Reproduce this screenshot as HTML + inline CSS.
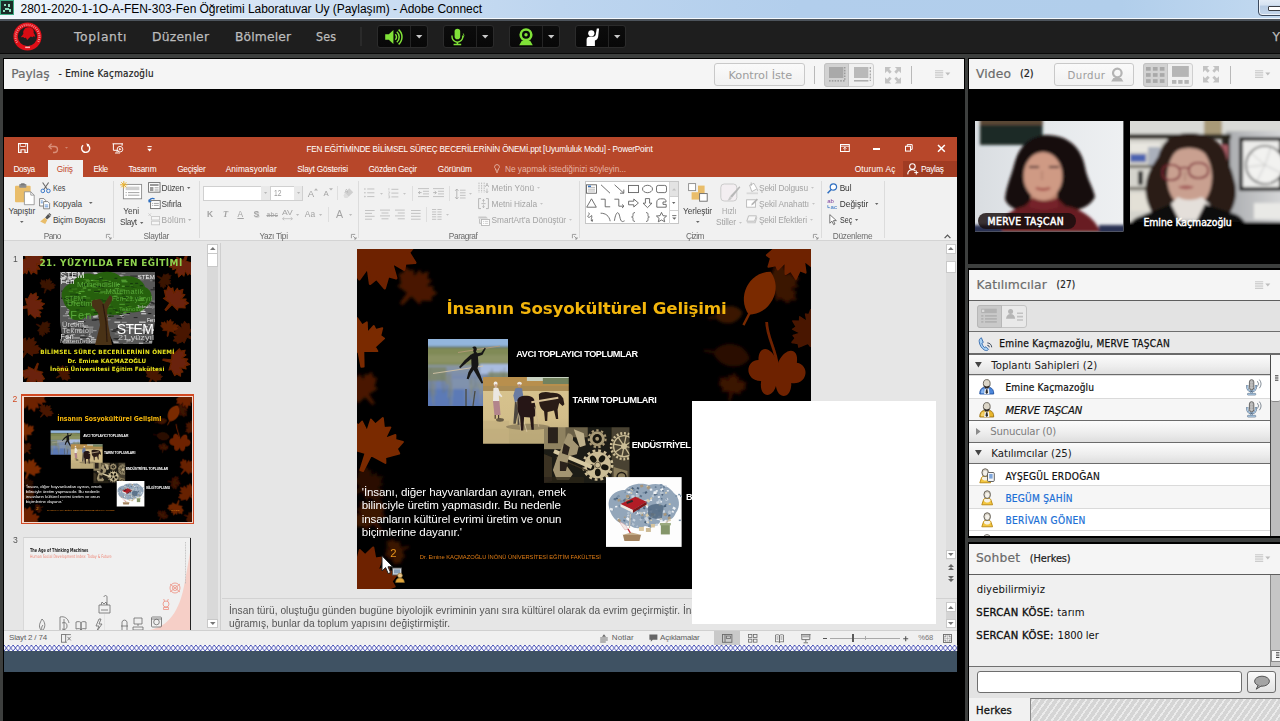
<!DOCTYPE html>
<html lang="tr">
<head>
<meta charset="utf-8">
<title>Adobe Connect</title>
<style>
*{box-sizing:border-box;margin:0;padding:0}
html,body{width:1280px;height:721px;overflow:hidden;background:#3d3f3e}
#root{position:relative;width:1280px;height:721px;overflow:hidden;background:#3d3f3e;font-family:"Liberation Sans","DejaVu Sans",sans-serif}
.a{position:absolute;display:block}
.t{position:absolute;white-space:pre;font-kerning:normal}
svg{overflow:visible}
</style>
</head>
<body>
<div id="root">
<div class="a " style="left:0.00px;top:0.00px;width:1280.00px;height:19.00px;background:linear-gradient(90deg,#f1f6fc 0,#e2ecf8 120px,#cfe0f3 330px,#bdd5ef 560px,#b2ceec 800px,#b1ceeb 1120px,#c2d9f0 1280px)"></div>
<div class="a " style="left:0.00px;top:18.00px;width:1280.00px;height:1.00px;background:#f4f8fc"></div>
<div class="a " style="left:0.00px;top:19.00px;width:1280.00px;height:2.00px;background:#4d545c"></div>
<div class="a " style="left:0.00px;top:0.00px;width:14.00px;height:15.00px;background:#1b2b27;border:1px solid #3fae86"></div>
<svg class="a" style="left:2.00px;top:2.00px;" width="10.00" height="11.00" viewBox="0 0 10.00 11.00"><path d="M2 2h2v2h-2zM6 2h2v3h-2zM3 6h4v2h-4zM1 8h2v2h-2zM7 7h2v3h-2z" fill="#8fe0c0"/></svg>
<div class="t" style='left:20.50px;top:-0.40px;font-family:"Liberation Sans",sans-serif;font-size:12px;line-height:18px;color:#000;letter-spacing:-0.035px;'>2801-2020-1-1O-A-FEN-303-Fen Öğretimi Laboratuvar Uy (Paylaşım) - Adobe Connect</div>
<div class="a " style="left:1258.00px;top:-4.00px;width:42.00px;height:19.50px;border:1px solid #3c4a5e;border-radius:4px;background:linear-gradient(#eaf1f9 0,#d5e2f1 45%,#b7cbe3 50%,#c4d6ea 100%);box-shadow:inset 0 0 0 1px rgba(255,255,255,.7)"></div>
<div class="a " style="left:1268.00px;top:6.00px;width:14.00px;height:5.00px;background:#fff;border:1px solid #3b3f46;border-radius:1px"></div>
<div class="a " style="left:0.00px;top:21.00px;width:1280.00px;height:31.50px;background:#1e1e1e"></div>
<div class="a " style="left:0.00px;top:52.50px;width:1280.00px;height:1.50px;background:#0a0a0a"></div>
<div class="a " style="left:0.00px;top:54.00px;width:1280.00px;height:667.00px;background:#3d3f3e"></div>
<svg class="a" style="left:12.00px;top:21.00px;" width="31.00" height="31.00" viewBox="0 0 31.00 31.00"><circle cx="15.5" cy="15.5" r="11.9" fill="none" stroke="#e00f18" stroke-width="4.4"/><path d="M5.100 21.500A11.900 11.900 0 1 1 25.900 21.500" fill="none" stroke="#f7b4b4" stroke-width="2.200" stroke-dasharray=".9 1.150" opacity=".8"/><path d="M15 6.5c2-.8 4.300-.2 5.3 1.300 1.200.9 1.700 2.500 1.300 4 .800 1.300 1.500 2.600 1.800 4l-2-.5-.9.900-1.700-.6-1.900 1.600-1.700 1.800-1.300-2.300-1.800.3-.7-1.100-2.600.3c.900-1.300 2-2.200 2.600-3.400-.5-1.600-.2-3.200.9-4.300.5-1.200 1.500-1.900 2.700-2z" fill="#d80c14"/><rect x="13.200" y="25.600" width="4.800" height="1.500" fill="#f8c8c8" opacity=".9"/></svg>
<div class="t" style='left:74.00px;top:28.00px;font-family:"DejaVu Sans","Liberation Sans",sans-serif;font-size:12.3px;line-height:18px;color:#bcbcbc;letter-spacing:0.681px;-webkit-text-stroke:.25px #bcbcbc;'>Toplantı</div>
<div class="t" style='left:152.00px;top:28.00px;font-family:"DejaVu Sans","Liberation Sans",sans-serif;font-size:12.3px;line-height:18px;color:#bcbcbc;letter-spacing:0.268px;-webkit-text-stroke:.25px #bcbcbc;'>Düzenler</div>
<div class="t" style='left:235.00px;top:28.00px;font-family:"DejaVu Sans","Liberation Sans",sans-serif;font-size:12.3px;line-height:18px;color:#bcbcbc;letter-spacing:0.147px;-webkit-text-stroke:.25px #bcbcbc;'>Bölmeler</div>
<div class="t" style='left:316.00px;top:28.00px;font-family:"DejaVu Sans Condensed","DejaVu Sans",sans-serif;font-size:12.3px;line-height:18px;color:#bcbcbc;letter-spacing:0.195px;-webkit-text-stroke:.25px #bcbcbc;'>Ses</div>
<div class="t" style='left:1272.50px;top:28.00px;font-family:"DejaVu Sans","Liberation Sans",sans-serif;font-size:12.3px;line-height:18px;color:#bcbcbc;letter-spacing:0.984px;-webkit-text-stroke:.25px #bcbcbc;'>Y</div>
<div class="a " style="left:360.00px;top:27.00px;width:2.00px;height:19.00px;background:#2a2a2a"></div>
<div class="a " style="left:377.00px;top:25.00px;width:51.00px;height:23.00px;background:linear-gradient(#0c0c0c,#080808);border:1px solid #2b2b2b;border-radius:3px"></div>
<div class="a " style="left:410.00px;top:26.00px;width:1.00px;height:21.00px;background:#242424"></div>
<svg class="a" style="left:416.10px;top:35.00px;" width="6.40" height="4.00" viewBox="0 0 6.40 4.00"><path d="M0 0h6.4l-3.200 3.600z" fill="#c9c9c9"/></svg>
<svg class="a" style="left:384.00px;top:28.00px;" width="20.00" height="18.00" viewBox="0 0 20.00 18.00"><path d="M1.200 6.200h3.600l4.600-4.300v14.200l-4.600-4.300h-3.600z" fill="#80e238"/><path d="M11.300 6.300a3.600 3.600 0 0 1 0 5.400M12.800 3.800a6.800 6.800 0 0 1 0 10.400M14.600 1.600a9.800 9.800 0 0 1 0 14.800" fill="none" stroke="#80e238" stroke-width="1.500"/></svg>
<div class="a " style="left:443.00px;top:25.00px;width:51.00px;height:23.00px;background:linear-gradient(#0c0c0c,#080808);border:1px solid #2b2b2b;border-radius:3px"></div>
<div class="a " style="left:476.00px;top:26.00px;width:1.00px;height:21.00px;background:#242424"></div>
<svg class="a" style="left:482.10px;top:35.00px;" width="6.40" height="4.00" viewBox="0 0 6.40 4.00"><path d="M0 0h6.4l-3.200 3.600z" fill="#c9c9c9"/></svg>
<svg class="a" style="left:449.00px;top:28.00px;" width="18.00" height="18.00" viewBox="0 0 18.00 18.00"><rect x="5.600" y=".8" width="5.600" height="10.400" rx="2.800" fill="#80e238"/><path d="M3 7.500v1.300a5.400 5.400 0 0 0 10.800 0v-1.300" fill="none" stroke="#80e238" stroke-width="1.400"/><path d="M8.400 14v2.200M4.600 16.600h7.600" stroke="#80e238" stroke-width="1.500" fill="none"/><path d="M14.300 5.500a4 4 0 0 1 0 4" stroke="#80e238" stroke-width="1" fill="none" opacity=".8"/></svg>
<div class="a " style="left:509.00px;top:25.00px;width:51.00px;height:23.00px;background:linear-gradient(#0c0c0c,#080808);border:1px solid #2b2b2b;border-radius:3px"></div>
<div class="a " style="left:542.00px;top:26.00px;width:1.00px;height:21.00px;background:#242424"></div>
<svg class="a" style="left:548.10px;top:35.00px;" width="6.40" height="4.00" viewBox="0 0 6.40 4.00"><path d="M0 0h6.4l-3.200 3.600z" fill="#c9c9c9"/></svg>
<svg class="a" style="left:517.00px;top:28.00px;" width="18.00" height="18.00" viewBox="0 0 18.00 18.00"><circle cx="9" cy="6.800" r="5.300" fill="none" stroke="#80e238" stroke-width="2.600"/><circle cx="9" cy="6.800" r="1.700" fill="#80e238"/><path d="M4.800 12.800h8.400l2.600 4.400h-13.600z" fill="#80e238"/></svg>
<div class="a " style="left:575.00px;top:25.00px;width:51.00px;height:23.00px;background:linear-gradient(#0c0c0c,#080808);border:1px solid #2b2b2b;border-radius:3px"></div>
<div class="a " style="left:608.00px;top:26.00px;width:1.00px;height:21.00px;background:#242424"></div>
<svg class="a" style="left:614.10px;top:35.00px;" width="6.40" height="4.00" viewBox="0 0 6.40 4.00"><path d="M0 0h6.4l-3.200 3.600z" fill="#c9c9c9"/></svg>
<svg class="a" style="left:583.00px;top:27.00px;" width="20.00" height="20.00" viewBox="0 0 20.00 20.00"><circle cx="8.300" cy="6.300" r="3.100" fill="#fff"/><path d="M3.600 19v-6.300c0-1.800 1.200-2.900 2.900-2.900h3.600c1.300 0 2.300-.7 2.600-2l1.100-6.200h2.300l-.9 7.800c-.3 2.300-1.600 3.600-3.300 4v5.600z" fill="#fff"/></svg>
<div class="a " style="left:3.00px;top:58.00px;width:962.00px;height:663.00px;background:#000"></div>
<div class="a " style="left:4.00px;top:59.00px;width:960.00px;height:30.00px;background:#f5f5f5"></div>
<div class="t" style='left:11.30px;top:64.50px;font-family:"DejaVu Sans","Liberation Sans",sans-serif;font-size:12.3px;line-height:18px;color:#6b6b6b;letter-spacing:-0.129px;-webkit-text-stroke:.2px #6b6b6b;'>Paylaş</div>
<div class="t" style='left:58.60px;top:65.80px;font-family:"DejaVu Sans Condensed","DejaVu Sans",sans-serif;font-size:9.8px;line-height:15px;color:#222;letter-spacing:0.301px;-webkit-text-stroke:.2px #222;'>- Emine Kaçmazoğlu</div>
<div class="a " style="left:714.00px;top:63.40px;width:91.00px;height:22.20px;border:1px solid #c9c9c9;border-radius:3px;background:linear-gradient(#fafafa,#f1f1f1)"></div>
<div class="t" style='left:728.50px;top:66.80px;font-family:"DejaVu Sans","Liberation Sans",sans-serif;font-size:11.3px;line-height:17px;color:#9d9d9d;letter-spacing:-0.026px;'>Kontrol İste</div>
<div class="a " style="left:814.00px;top:65.50px;width:1.20px;height:18.00px;background:#b9b9b9"></div>
<div class="a " style="left:824.40px;top:63.40px;width:49.60px;height:23.20px;border:1px solid #cfcfcf;border-radius:3px;background:#f0f0f0"></div>
<div class="a " style="left:824.40px;top:63.40px;width:24.90px;height:23.20px;border:1px solid #c2c2c2;border-radius:3px 0 0 3px;background:#d2d2d2"></div>
<svg class="a" style="left:828.00px;top:66.00px;" width="18.00" height="18.00" viewBox="0 0 18.00 18.00"><rect x="1" y="1" width="14.400" height="11" fill="#a9a9a9"/><path d="M1 14.800h16M16.800 1v14" stroke="#8e8e8e" stroke-width="1.200" stroke-dasharray="1.600 1.200" fill="none"/></svg>
<svg class="a" style="left:853.00px;top:66.00px;" width="19.00" height="18.00" viewBox="0 0 19.00 18.00"><rect x="1" y="1" width="14.400" height="11" fill="#b9b9b9"/><path d="M1 14.800h14.400" stroke="#a6a6a6" stroke-width="1.400"/><path d="M17.300 1v14" stroke="#a6a6a6" stroke-width="1.300" stroke-dasharray="2 1.200"/></svg>
<svg class="a" style="left:885.00px;top:66.50px;" width="16.00" height="16.40" viewBox="0 0 16.00 16.40"><path d="M0 0h6.200l-2.100 2.100 2.600 2.600-2 2-2.600-2.600-2.100 2.100z" fill="#c3c3c3"/><g transform="translate(16 0) scale(-1 1)"><path d="M0 0h6.200l-2.100 2.100 2.600 2.600-2 2-2.600-2.600-2.100 2.100z" fill="#c3c3c3"/></g><g transform="translate(0 16.400) scale(1 -1)"><path d="M0 0h6.200l-2.100 2.100 2.600 2.600-2 2-2.600-2.600-2.100 2.100z" fill="#c3c3c3"/></g><g transform="translate(16 16.400) scale(-1 -1)"><path d="M0 0h6.200l-2.100 2.100 2.600 2.600-2 2-2.600-2.600-2.100 2.100z" fill="#c3c3c3"/></g></svg>
<div class="a " style="left:911.00px;top:65.50px;width:1.20px;height:18.00px;background:#b9b9b9"></div>
<svg class="a" style="left:934.80px;top:69.60px;" width="16.00" height="8.00" viewBox="0 0 16.00 8.00"><path d="M0 .7h8.200M0 2.400h8.200M0 4.100h8.200M0 5.800h8.200M0 7.500h8.200" stroke="#c2c2c2" stroke-width=".8"/><path d="M10.300 2.600h5l-2.500 2.900z" fill="#bdbdbd"/></svg>
<div class="a " style="left:968.00px;top:58.00px;width:313.00px;height:206.20px;background:#000"></div>
<div class="a " style="left:969.00px;top:59.00px;width:311.00px;height:30.00px;background:#f5f5f5"></div>
<div class="t" style='left:976.00px;top:64.50px;font-family:"DejaVu Sans","Liberation Sans",sans-serif;font-size:12.3px;line-height:18px;color:#6b6b6b;letter-spacing:0.137px;-webkit-text-stroke:.2px #6b6b6b;'>Video</div>
<div class="t" style='left:1020.00px;top:65.80px;font-family:"DejaVu Sans","Liberation Sans",sans-serif;font-size:9.8px;line-height:15px;color:#222;letter-spacing:-0.195px;-webkit-text-stroke:.2px #222;'>(2)</div>
<div class="a " style="left:1054.00px;top:63.40px;width:80.00px;height:22.20px;border:1px solid #c9c9c9;border-radius:3px;background:linear-gradient(#fafafa,#f1f1f1)"></div>
<div class="t" style='left:1067.50px;top:66.80px;font-family:"DejaVu Sans Condensed","DejaVu Sans",sans-serif;font-size:11.3px;line-height:17px;color:#9d9d9d;letter-spacing:0.434px;'>Durdur</div>
<svg class="a" style="left:1110.00px;top:67.00px;" width="15.00" height="16.00" viewBox="0 0 15.00 16.00"><circle cx="7.300" cy="6" r="4.300" fill="none" stroke="#b4b4b4" stroke-width="2.200"/><path d="M3.400 11h7.800l2.200 3.600h-12.200z" fill="#b4b4b4"/></svg>
<div class="a " style="left:1143.30px;top:63.40px;width:49.30px;height:23.20px;border:1px solid #cfcfcf;border-radius:3px;background:#f0f0f0"></div>
<div class="a " style="left:1143.30px;top:63.40px;width:24.50px;height:23.20px;border:1px solid #c2c2c2;border-radius:3px 0 0 3px;background:#d2d2d2"></div>
<svg class="a" style="left:1146.00px;top:67.00px;" width="20.00" height="17.00" viewBox="0 0 20.00 17.00"><rect x="0.0" y="0.0" width="4.700" height="3.700" fill="#a9a9a9"/><rect x="6.9" y="0.0" width="4.700" height="3.700" fill="#a9a9a9"/><rect x="13.8" y="0.0" width="4.700" height="3.700" fill="#a9a9a9"/><rect x="0.0" y="6.1" width="4.700" height="3.700" fill="#a9a9a9"/><rect x="6.9" y="6.1" width="4.700" height="3.700" fill="#a9a9a9"/><rect x="13.8" y="6.1" width="4.700" height="3.700" fill="#a9a9a9"/><rect x="0.0" y="12.2" width="4.700" height="3.700" fill="#a9a9a9"/><rect x="6.9" y="12.2" width="4.700" height="3.700" fill="#a9a9a9"/><rect x="13.8" y="12.2" width="4.700" height="3.700" fill="#a9a9a9"/></svg>
<svg class="a" style="left:1172.00px;top:66.00px;" width="18.00" height="19.00" viewBox="0 0 18.00 19.00"><rect x="0" y="0" width="16.800" height="10.900" fill="#b5b5b5"/><rect x="0" y="14" width="4.400" height="3.800" fill="#b5b5b5"/><rect x="6.200" y="14" width="4.400" height="3.800" fill="#b5b5b5"/><rect x="12.400" y="14" width="4.400" height="3.800" fill="#b5b5b5"/></svg>
<svg class="a" style="left:1203.00px;top:66.30px;" width="16.00" height="16.40" viewBox="0 0 16.00 16.40"><path d="M0 0h6.200l-2.100 2.100 2.600 2.600-2 2-2.600-2.600-2.100 2.100z" fill="#c3c3c3"/><g transform="translate(16 0) scale(-1 1)"><path d="M0 0h6.200l-2.100 2.100 2.600 2.600-2 2-2.600-2.600-2.100 2.100z" fill="#c3c3c3"/></g><g transform="translate(0 16.400) scale(1 -1)"><path d="M0 0h6.200l-2.100 2.100 2.600 2.600-2 2-2.600-2.600-2.100 2.100z" fill="#c3c3c3"/></g><g transform="translate(16 16.400) scale(-1 -1)"><path d="M0 0h6.200l-2.100 2.100 2.600 2.600-2 2-2.600-2.600-2.100 2.100z" fill="#c3c3c3"/></g></svg>
<div class="a " style="left:1230.00px;top:65.50px;width:1.20px;height:18.00px;background:#b9b9b9"></div>
<svg class="a" style="left:1254.70px;top:69.60px;" width="16.00" height="8.00" viewBox="0 0 16.00 8.00"><path d="M0 .7h8.200M0 2.400h8.200M0 4.100h8.200M0 5.800h8.200M0 7.500h8.200" stroke="#c2c2c2" stroke-width=".8"/><path d="M10.300 2.600h5l-2.500 2.900z" fill="#bdbdbd"/></svg>
<div class="a " style="left:968.00px;top:268.30px;width:313.00px;height:269.90px;background:#000"></div>
<div class="a " style="left:969.00px;top:270.00px;width:311.00px;height:30.00px;background:#f5f5f5"></div>
<div class="a " style="left:969.00px;top:300.00px;width:311.00px;height:1.00px;background:#5e5e5e"></div>
<div class="t" style='left:976.50px;top:275.60px;font-family:"DejaVu Sans","Liberation Sans",sans-serif;font-size:12.3px;line-height:18px;color:#6b6b6b;letter-spacing:0.152px;-webkit-text-stroke:.2px #6b6b6b;'>Katılımcılar</div>
<div class="t" style='left:1056.50px;top:276.90px;font-family:"DejaVu Sans Condensed","DejaVu Sans",sans-serif;font-size:9.8px;line-height:15px;color:#222;letter-spacing:0.235px;-webkit-text-stroke:.2px #222;'>(27)</div>
<svg class="a" style="left:1254.70px;top:280.60px;" width="16.00" height="8.00" viewBox="0 0 16.00 8.00"><path d="M0 .7h8.200M0 2.400h8.200M0 4.100h8.200M0 5.800h8.200M0 7.500h8.200" stroke="#c2c2c2" stroke-width=".8"/><path d="M10.300 2.600h5l-2.500 2.900z" fill="#bdbdbd"/></svg>
<div class="a " style="left:969.00px;top:301.00px;width:311.00px;height:30.00px;background:#e3e3e3"></div>
<div class="a " style="left:977.30px;top:304.50px;width:49.50px;height:23.10px;border:1px solid #c4c4c4;border-radius:3px;background:#e9e9e9"></div>
<div class="a " style="left:977.30px;top:304.50px;width:24.50px;height:23.10px;border:1px solid #b7b7b7;border-radius:3px 0 0 3px;background:#c9c9c9"></div>
<svg class="a" style="left:980.00px;top:308.00px;" width="20.00" height="17.00" viewBox="0 0 20.00 17.00"><rect x="1.200" y=".7" width="15.600" height="4.400" fill="#b2b2b2"/><rect x="2" y="1.700" width="2.300" height="2.300" fill="#d9d9d9"/><path d="M1.200 7.800h2.200M5 7.800h11.800M1.200 10.800h2.200M5 10.800h11.800M1.200 13.800h2.200M5 13.800h11.800" stroke="#b2b2b2" stroke-width="1.700"/></svg>
<svg class="a" style="left:1004.00px;top:308.00px;" width="20.00" height="17.00" viewBox="0 0 20.00 17.00"><circle cx="6.600" cy="3.600" r="2.500" fill="#b5b5b5"/><path d="M2 10.800c.3-3.300 2-4.800 4.600-4.800s4.300 1.500 4.600 4.800z" fill="#b5b5b5"/><path d="M13 5.200h6M13 8.600h6M13 12h6" stroke="#c2c2c2" stroke-width="1.600"/></svg>
<div class="a " style="left:969.00px;top:331.00px;width:311.00px;height:1.00px;background:#6e6e6e"></div>
<div class="a " style="left:969.00px;top:332.00px;width:311.00px;height:21.30px;background:#e9e9e9"></div>
<svg class="a" style="left:977.50px;top:336.50px;" width="16.00" height="14.50" viewBox="0 0 16.00 14.50"><path d="M3.400 .8c-1.600.6-2.400 1.900-2.200 3.700.4 3.700 2.300 6.800 5.300 8.600 1.500.8 3 .6 4-.700l-2.500-2.600-1.500.8c-1.300-1.100-2.200-2.500-2.700-4.200l1.500-1z" fill="#a9d1f2" stroke="#3168ad" stroke-width=".9" stroke-linejoin="round"/><path d="M9.300 8.300a2 2 0 0 1 2 2M9.300 5.900a4.400 4.400 0 0 1 4.400 4.400" fill="none" stroke="#3d4a5c" stroke-width="1"/></svg>
<div class="t" style='left:999.30px;top:336.30px;font-family:"DejaVu Sans Condensed","DejaVu Sans",sans-serif;font-size:10.1px;line-height:15px;color:#111;letter-spacing:0.273px;-webkit-text-stroke:.25px #111;'>Emine Kaçmazoğlu, MERVE TAŞCAN</div>
<div class="a " style="left:969.00px;top:353.00px;width:311.00px;height:2.00px;background:#6a6a6a"></div>
<div class="a " style="left:969.00px;top:354.50px;width:300.50px;height:21.00px;background:linear-gradient(#fcfcfc 0,#ededed 55%,#dcdcdc 100%)"></div>
<div class="a " style="left:969.00px;top:374.40px;width:300.50px;height:1.10px;background:#6b6b6b"></div>
<svg class="a" style="left:975.30px;top:362.10px;" width="7.00" height="5.60" viewBox="0 0 7.00 5.60"><path d="M0 0h6.800l-3.400 5.400z" fill="#444"/></svg>
<div class="t" style='left:991.30px;top:356.70px;font-family:"DejaVu Sans Condensed","DejaVu Sans",sans-serif;font-size:11.3px;line-height:17px;color:#1a1a1a;letter-spacing:0.067px;'>Toplantı Sahipleri (2)</div>
<div class="a " style="left:969.00px;top:375.50px;width:300.50px;height:23.10px;background:#fff"></div>
<div class="a " style="left:969.00px;top:397.60px;width:300.50px;height:1.00px;background:#dadada"></div>
<svg class="a" style="left:979.20px;top:379.45px;" width="15.50" height="15.70" viewBox="0 0 15.50 15.70"><path d="M.8 15c-.2-3.600 1.400-6 4-6.600l2.950 2.200 2.950-2.200c2.600.6 4.200 3 4 6.600z" fill="#4b86da" stroke="#1f4f9e" stroke-width=".9" stroke-linejoin="round"/><path d="M2 14.200c0-2.400.8-4 2.400-4.600l.6 4.600z" fill="#9cc3f2" opacity=".8"/><path d="M5.600 9.200l2.150 1.700 2.150-1.700.5 5.800h-5.300z" fill="#f2f2f2"/><path d="M7 10.400h1.500l.5 3.400-1.250 1.200-1.250-1.200z" fill="#2b2b2b"/><ellipse cx="7.750" cy="4.700" rx="3.400" ry="4.100" fill="#dcd6c8" stroke="#615c54" stroke-width=".9"/><path d="M4.900 5.800c.5 1.200 1.600 1.600 2.850 1.600s2.350-.4 2.850-1.600c0 2.400-1.200 3.800-2.850 3.800s-2.850-1.400-2.850-3.800z" fill="#2b2724"/></svg>
<div class="t" style='left:1005.40px;top:380.45px;font-family:"DejaVu Sans Condensed","DejaVu Sans",sans-serif;font-size:10.1px;line-height:15px;color:#111;letter-spacing:0.143px;-webkit-text-stroke:.2px #111;'>Emine Kaçmazoğlu</div>
<svg class="a" style="left:1246.40px;top:378.65px;" width="17.00" height="16.50" viewBox="0 0 17.00 16.50"><path d="M1.300 6v2a4.300 4.300 0 0 0 8.600 0v-2" fill="none" stroke="#56697f" stroke-width="2.100"/><path d="M1.300 6.300v1.700a4.300 4.300 0 0 0 8.600 0v-1.700" fill="none" stroke="#b4d3ef" stroke-width="1.100"/><rect x="3.400" y=".7" width="4.400" height="10" rx="2.200" fill="#c4c4c4" stroke="#4a4a4a" stroke-width=".8"/><path d="M4.800 2.400v6.800M6.400 2.400v6.800" stroke="#8a8a8a" stroke-width=".6" stroke-dasharray=".8 .8"/><rect x="4.800" y="12.600" width="1.600" height="1.900" fill="#b4d3ef" stroke="#56697f" stroke-width=".5"/><rect x="1.500" y="14.300" width="8.200" height="1.800" rx=".5" fill="#b4d3ef" stroke="#56697f" stroke-width=".6"/><path d="M11.400 2.200a4 4 0 0 1 0 5.400M13.400 .6a7 7 0 0 1 0 8.600" stroke="#66727f" stroke-width=".8" fill="none"/></svg>
<div class="a " style="left:969.00px;top:398.60px;width:300.50px;height:22.00px;background:#f6f6f6"></div>
<div class="a " style="left:969.00px;top:419.60px;width:300.50px;height:1.00px;background:#dadada"></div>
<svg class="a" style="left:979.20px;top:402.00px;" width="15.50" height="15.70" viewBox="0 0 15.50 15.70"><path d="M.8 15c-.2-3.600 1.400-6 4-6.600l2.950 2.200 2.950-2.200c2.600.6 4.200 3 4 6.600z" fill="#e8b52a" stroke="#9a6f10" stroke-width=".9" stroke-linejoin="round"/><path d="M2 14.200c0-2.400.8-4 2.400-4.600l.6 4.600z" fill="#f7dc86" opacity=".8"/><path d="M5.600 9.200l2.150 1.700 2.150-1.700.5 5.800h-5.300z" fill="#f2f2f2"/><path d="M7 10.400h1.500l.5 3.400-1.250 1.200-1.250-1.200z" fill="#2b2b2b"/><ellipse cx="7.750" cy="4.700" rx="3.400" ry="4.100" fill="#dcd6c8" stroke="#615c54" stroke-width=".9"/><path d="M4.900 5.800c.5 1.200 1.600 1.600 2.850 1.600s2.350-.4 2.850-1.600c0 2.400-1.200 3.800-2.850 3.800s-2.850-1.400-2.850-3.800z" fill="#2b2724"/></svg>
<div class="t" style='left:1005.40px;top:403.00px;font-family:"DejaVu Sans","Liberation Sans",sans-serif;font-size:10.1px;line-height:15px;color:#111;letter-spacing:-0.160px;font-style:italic;-webkit-text-stroke:.2px #111;'>MERVE TAŞCAN</div>
<svg class="a" style="left:1246.40px;top:401.20px;" width="17.00" height="16.50" viewBox="0 0 17.00 16.50"><path d="M1.300 6v2a4.300 4.300 0 0 0 8.600 0v-2" fill="none" stroke="#56697f" stroke-width="2.100"/><path d="M1.300 6.300v1.700a4.300 4.300 0 0 0 8.600 0v-1.700" fill="none" stroke="#b4d3ef" stroke-width="1.100"/><rect x="3.400" y=".7" width="4.400" height="10" rx="2.200" fill="#c4c4c4" stroke="#4a4a4a" stroke-width=".8"/><path d="M4.800 2.400v6.800M6.400 2.400v6.800" stroke="#8a8a8a" stroke-width=".6" stroke-dasharray=".8 .8"/><rect x="4.800" y="12.600" width="1.600" height="1.900" fill="#b4d3ef" stroke="#56697f" stroke-width=".5"/><rect x="1.500" y="14.300" width="8.200" height="1.800" rx=".5" fill="#b4d3ef" stroke="#56697f" stroke-width=".6"/><path d="M11.400 2.200a4 4 0 0 1 0 5.400M13.400 .6a7 7 0 0 1 0 8.600" stroke="#66727f" stroke-width=".8" fill="none"/></svg>
<div class="a " style="left:969.00px;top:419.60px;width:300.50px;height:1.00px;background:#6b6b6b"></div>
<div class="a " style="left:969.00px;top:420.60px;width:300.50px;height:22.00px;background:linear-gradient(#fcfcfc 0,#ededed 55%,#dcdcdc 100%)"></div>
<div class="a " style="left:969.00px;top:441.50px;width:300.50px;height:1.10px;background:#6b6b6b"></div>
<svg class="a" style="left:976.20px;top:427.70px;" width="4.80" height="7.20" viewBox="0 0 4.80 7.20"><path d="M0 0l4.600 3.500-4.600 3.500z" fill="#8b8b8b"/></svg>
<div class="t" style='left:990.30px;top:423.30px;font-family:"DejaVu Sans Condensed","DejaVu Sans",sans-serif;font-size:11.3px;line-height:17px;color:#7d7d7d;letter-spacing:-0.223px;'>Sunucular (0)</div>
<div class="a " style="left:969.00px;top:442.60px;width:300.50px;height:21.40px;background:linear-gradient(#fcfcfc 0,#ededed 55%,#dcdcdc 100%)"></div>
<div class="a " style="left:969.00px;top:462.90px;width:300.50px;height:1.10px;background:#6b6b6b"></div>
<svg class="a" style="left:975.30px;top:450.40px;" width="7.00" height="5.60" viewBox="0 0 7.00 5.60"><path d="M0 0h6.800l-3.400 5.400z" fill="#444"/></svg>
<div class="t" style='left:991.30px;top:445.00px;font-family:"DejaVu Sans Condensed","DejaVu Sans",sans-serif;font-size:11.3px;line-height:17px;color:#1a1a1a;letter-spacing:-0.018px;'>Katılımcılar (25)</div>
<div class="a " style="left:969.00px;top:464.00px;width:300.50px;height:22.40px;background:#fff"></div>
<div class="a " style="left:969.00px;top:485.40px;width:300.50px;height:1.00px;background:#dadada"></div>
<svg class="a" style="left:979.00px;top:467.80px;" width="12.40" height="15.30" viewBox="0 0 12.40 15.30"><path d="M.8 14.800l1.800-5.200c.5-1 1.400-1.500 2.400-1.600h2.400c1 .1 1.900.6 2.400 1.600l1.800 5.200z" fill="#f3c63f" stroke="#b8860e" stroke-width=".9" stroke-linejoin="round"/><path d="M2.800 10.600c.8 1.400 2 2 3.400 2s2.600-.6 3.400-2l-.8-1.600h-5.200z" fill="#f6f2e6"/><ellipse cx="6.200" cy="4.600" rx="3.300" ry="3.900" fill="#cfc9bc" stroke="#615c54" stroke-width=".9"/><ellipse cx="6.200" cy="5.100" rx="2.100" ry="2.500" fill="#f4f1ea"/></svg>
<div class="t" style='left:1005.40px;top:468.60px;font-family:"DejaVu Sans Condensed","DejaVu Sans",sans-serif;font-size:10.1px;line-height:15px;color:#111;letter-spacing:0.291px;-webkit-text-stroke:.2px #111;'>AYŞEGÜL ERDOĞAN</div>
<svg class="a" style="left:987.40px;top:471.60px;" width="7.80" height="10.00" viewBox="0 0 7.80 10.00"><rect x=".5" y=".5" width="6.800" height="9" rx="1.100" fill="#f4f6f8" stroke="#555" stroke-width=".9"/><rect x="2.200" y="2" width="3.400" height="4.600" fill="#7ea6dc"/></svg>
<div class="a " style="left:969.00px;top:486.40px;width:300.50px;height:22.20px;background:#f6f6f6"></div>
<div class="a " style="left:969.00px;top:507.60px;width:300.50px;height:1.00px;background:#dadada"></div>
<svg class="a" style="left:981.00px;top:490.10px;" width="12.40" height="15.30" viewBox="0 0 12.40 15.30"><path d="M.8 14.800l1.800-5.200c.5-1 1.400-1.500 2.400-1.600h2.400c1 .1 1.900.6 2.400 1.600l1.800 5.200z" fill="#f3c63f" stroke="#b8860e" stroke-width=".9" stroke-linejoin="round"/><path d="M2.800 10.600c.8 1.400 2 2 3.400 2s2.600-.6 3.400-2l-.8-1.600h-5.200z" fill="#f6f2e6"/><ellipse cx="6.200" cy="4.600" rx="3.300" ry="3.900" fill="#cfc9bc" stroke="#615c54" stroke-width=".9"/><ellipse cx="6.200" cy="5.100" rx="2.100" ry="2.500" fill="#f4f1ea"/></svg>
<div class="t" style='left:1005.40px;top:490.90px;font-family:"DejaVu Sans Condensed","DejaVu Sans",sans-serif;font-size:10.1px;line-height:15px;color:#1b6fd6;letter-spacing:0.236px;-webkit-text-stroke:.2px #1b6fd6;'>BEGÜM ŞAHİN</div>
<div class="a " style="left:969.00px;top:508.60px;width:300.50px;height:22.20px;background:#fff"></div>
<div class="a " style="left:969.00px;top:529.80px;width:300.50px;height:1.00px;background:#dadada"></div>
<svg class="a" style="left:981.00px;top:512.30px;" width="12.40" height="15.30" viewBox="0 0 12.40 15.30"><path d="M.8 14.800l1.800-5.200c.5-1 1.400-1.500 2.400-1.600h2.400c1 .1 1.900.6 2.400 1.600l1.800 5.200z" fill="#f3c63f" stroke="#b8860e" stroke-width=".9" stroke-linejoin="round"/><path d="M2.800 10.600c.8 1.400 2 2 3.400 2s2.600-.6 3.400-2l-.8-1.600h-5.200z" fill="#f6f2e6"/><ellipse cx="6.200" cy="4.600" rx="3.300" ry="3.900" fill="#cfc9bc" stroke="#615c54" stroke-width=".9"/><ellipse cx="6.200" cy="5.100" rx="2.100" ry="2.500" fill="#f4f1ea"/></svg>
<div class="t" style='left:1005.40px;top:513.10px;font-family:"DejaVu Sans Condensed","DejaVu Sans",sans-serif;font-size:10.1px;line-height:15px;color:#1b6fd6;letter-spacing:0.341px;-webkit-text-stroke:.2px #1b6fd6;'>BERİVAN GÖNEN</div>
<div class="a " style="left:969.00px;top:530.80px;width:300.50px;height:5.20px;background:#fff"></div>
<div class="a " style="left:982.00px;top:533.50px;width:10.00px;height:2.50px;overflow:hidden">
<svg class="a" style="left:0;top:0" width="10" height="8" viewBox="0 0 10 8"><ellipse cx="5" cy="4" rx="3.300" ry="3.500" fill="#dedbd6" stroke="#6e6a64" stroke-width=".9"/></svg></div>
<div class="a " style="left:1269.50px;top:354.50px;width:10.50px;height:181.50px;background:#bdbdbd;border-left:1px solid #4a4a4a"></div>
<div class="a " style="left:1270.50px;top:354.50px;width:9.50px;height:47.50px;background:#f7f7f7;border-bottom:1px solid #8a8a8a;border-radius:0 0 2px 2px"></div>
<svg class="a" style="left:1275.00px;top:374.60px;" width="3.40" height="6.40" viewBox="0 0 3.40 6.40"><path d="M0 .8h3.400M0 3h3.400M0 5.200h3.400" stroke="#333" stroke-width="1"/></svg>
<div class="a " style="left:968.00px;top:542.30px;width:313.00px;height:178.70px;background:#000"></div>
<div class="a " style="left:969.00px;top:544.00px;width:311.00px;height:30.20px;background:#f5f5f5"></div>
<div class="a " style="left:969.00px;top:574.20px;width:311.00px;height:1.00px;background:#5e5e5e"></div>
<div class="t" style='left:975.90px;top:549.40px;font-family:"DejaVu Sans","Liberation Sans",sans-serif;font-size:12.3px;line-height:18px;color:#6b6b6b;letter-spacing:0.154px;-webkit-text-stroke:.2px #6b6b6b;'>Sohbet</div>
<div class="t" style='left:1029.70px;top:550.70px;font-family:"DejaVu Sans","Liberation Sans",sans-serif;font-size:9.8px;line-height:15px;color:#222;letter-spacing:-0.076px;-webkit-text-stroke:.2px #222;'>(Herkes)</div>
<svg class="a" style="left:1254.70px;top:554.20px;" width="16.00" height="8.00" viewBox="0 0 16.00 8.00"><path d="M0 .7h8.200M0 2.400h8.200M0 4.100h8.200M0 5.800h8.200M0 7.500h8.200" stroke="#c2c2c2" stroke-width=".8"/><path d="M10.300 2.600h5l-2.500 2.900z" fill="#bdbdbd"/></svg>
<div class="a " style="left:969.00px;top:575.20px;width:300.50px;height:91.00px;background:#f0f0f0"></div>
<div class="a " style="left:1269.50px;top:575.20px;width:10.50px;height:91.00px;background:#c6c6c6;border-left:1px solid #8a8a8a"></div>
<div class="a " style="left:1270.50px;top:650.00px;width:9.50px;height:12.30px;background:#f7f7f7;border:1px solid #8a8a8a;border-right:0"></div>
<svg class="a" style="left:1275.60px;top:652.40px;" width="3.40" height="6.60" viewBox="0 0 3.40 6.60"><path d="M0 .8h3.400M0 3.100h3.400M0 5.400h3.400" stroke="#333" stroke-width="1"/></svg>
<div class="t" style='left:976.70px;top:580.80px;font-family:"DejaVu Sans Condensed","DejaVu Sans",sans-serif;font-size:11.2px;line-height:17px;color:#111;letter-spacing:0.123px;'>diyebilirmiyiz</div>
<div class="t" style='left:976.20px;top:604.10px;font-family:"DejaVu Sans Condensed","DejaVu Sans",sans-serif;font-size:11.2px;line-height:17px;color:#111;letter-spacing:0.302px;-webkit-text-stroke:.35px #111;'>SERCAN KÖSE:</div>
<div class="t" style='left:1057.30px;top:604.10px;font-family:"DejaVu Sans Condensed","DejaVu Sans",sans-serif;font-size:11.2px;line-height:17px;color:#111;letter-spacing:0.110px;'>tarım</div>
<div class="t" style='left:976.20px;top:626.90px;font-family:"DejaVu Sans Condensed","DejaVu Sans",sans-serif;font-size:11.2px;line-height:17px;color:#111;letter-spacing:0.302px;-webkit-text-stroke:.35px #111;'>SERCAN KÖSE:</div>
<div class="t" style='left:1057.60px;top:626.90px;font-family:"DejaVu Sans Condensed","DejaVu Sans",sans-serif;font-size:11.2px;line-height:17px;color:#111;letter-spacing:-0.105px;'>1800 ler</div>
<div class="a " style="left:969.00px;top:666.00px;width:311.00px;height:1.00px;background:#707070"></div>
<div class="a " style="left:969.00px;top:667.00px;width:311.00px;height:31.40px;background:#e3e3e3"></div>
<div class="a " style="left:977.30px;top:670.50px;width:265.10px;height:22.90px;background:#fff;border:1px solid #6e6e6e;border-radius:3px"></div>
<div class="a " style="left:1246.50px;top:670.50px;width:29.10px;height:22.70px;background:linear-gradient(#fbfbfb,#e2e2e2);border:1px solid #6e6e6e;border-radius:3px"></div>
<svg class="a" style="left:1252.50px;top:674.50px;" width="18.00" height="15.50" viewBox="0 0 18.00 15.50"><ellipse cx="9" cy="6.200" rx="7.400" ry="5" fill="#a4a4a4" stroke="#555" stroke-width="1"/><path d="M5.200 10.200l-2 4 5-3.200z" fill="#a4a4a4" stroke="#555" stroke-width="1" stroke-linejoin="round"/><path d="M5.500 9.800l2.600.8" stroke="#a4a4a4" stroke-width="1.600"/></svg>
<div class="a " style="left:969.00px;top:698.40px;width:311.00px;height:22.60px;background:repeating-linear-gradient(125deg,#d5d5d5 0,#d5d5d5 3.700px,#ebebeb 3.700px,#ebebeb 5.400px);border-top:1px solid #7c7c7c"></div>
<div class="a " style="left:969.00px;top:698.40px;width:62.00px;height:22.60px;background:#f1f1f1;border-right:1px solid #8a8a8a"></div>
<div class="t" style='left:976.00px;top:701.50px;font-family:"DejaVu Sans Condensed","DejaVu Sans",sans-serif;font-size:11.2px;line-height:17px;color:#111;letter-spacing:0.204px;-webkit-text-stroke:.3px #111;'>Herkes</div>
<svg class="a" style="left:974.80px;top:121.20px;" width="148.40" height="110.60" viewBox="0 0 148.400 110.600"><defs><filter id="v1" x="-10%" y="-10%" width="120%" height="120%"><feGaussianBlur stdDeviation="1.6"/></filter><filter id="v1b" x="-10%" y="-10%" width="120%" height="120%"><feGaussianBlur stdDeviation="3"/></filter><clipPath id="vc1"><rect width="148.400" height="110.600"/></clipPath><linearGradient id="wl" x1="0" x2="1" y1="0" y2="0"><stop offset="0" stop-color="#d9dde1"/><stop offset=".5" stop-color="#e6e9ec"/><stop offset="1" stop-color="#eef0f2"/></linearGradient></defs><g clip-path="url(#vc1)"><rect width="149" height="111" fill="url(#wl)"/><g filter="url(#v1)"><rect x="5" y="-3" width="62.500" height="27" fill="#1d2a28"/><rect x="5" y="-3" width="62.500" height="7" fill="#5a4636"/><path d="M72 14c-16 0-28 10-33 30-3 12-8 22-9 34 2 6 8 10 16 12h52c10-2 18-6 22-14-2-10-8-18-10-30-3-18-16-32-38-32z" fill="#17110f"/><path d="M56 62h26v24h-26z" fill="#b57e69"/><ellipse cx="68" cy="55" rx="19.500" ry="24" fill="#cf9a84"/><path d="M50 38c2-9 10-13 19-12 9 0 17 4 19 12-6-7-14-9-20-9s-13 3-18 9z" fill="#17110f"/><path d="M54 46h10M74 46h10" stroke="#3a2420" stroke-width="2.200"/><path d="M61 67c4 1.800 10 1.800 14 0" stroke="#a14a45" stroke-width="2.400" fill="none"/><path d="M67 50v9" stroke="#b98672" stroke-width="2"/><path d="M24 111c2-14 10-22 26-26 4-4 6-6 8-8 6 4 16 4 24 0 2 2 4 4 8 8 16 3 28 10 36 26z" fill="#681b21"/><path d="M56 78c8 4 18 4 26 0l2 8c-10 4-20 4-30 0z" fill="#76222a"/><rect x="-3" y="104" width="30" height="10" fill="#2a3352"/><rect x="124" y="104" width="30" height="10" fill="#2a3352"/></g></g></svg>
<div class="a " style="left:978.00px;top:213.20px;width:97.80px;height:16.00px;background:rgba(22,12,12,.82);border-radius:8px"></div>
<div class="t" style='left:987.50px;top:213.90px;font-family:"DejaVu Sans Condensed","DejaVu Sans",sans-serif;font-size:10.3px;line-height:15px;color:#fff;letter-spacing:0.404px;-webkit-text-stroke:.45px #fff;'>MERVE TAŞCAN</div>
<svg class="a" style="left:1130.00px;top:121.20px;" width="150.00" height="110.60" viewBox="0 0 150 110.600"><defs><filter id="v2" x="-10%" y="-10%" width="120%" height="120%"><feGaussianBlur stdDeviation="1.500"/></filter><clipPath id="vc2"><rect width="150" height="110.600"/></clipPath><linearGradient id="wr" x1="0" x2="1" y1="0" y2="0"><stop offset="0" stop-color="#a9abae"/><stop offset="1" stop-color="#d6d7d8"/></linearGradient></defs><g clip-path="url(#vc2)"><rect width="150" height="111" fill="#c9c9c7"/><g filter="url(#v2)"><rect x="-3" y="-3" width="156" height="16" fill="#d9dad6"/><rect x="96" y="10" width="58" height="100" fill="url(#wr)"/><rect x="-3" y="13" width="104" height="5" fill="#2d2a22"/><rect x="-3" y="18" width="40" height="84" fill="#d4d3cc"/><rect x="0" y="33" width="16" height="8" fill="#4c63b0"/><rect x="0" y="22" width="30" height="9" fill="#e8e6e0"/><rect x="18" y="26" width="12" height="18" fill="#aab0bc"/><rect x="-3" y="44" width="34" height="3" fill="#6e6a60"/><rect x="-3" y="66" width="30" height="3" fill="#6e6a60"/><rect x="8" y="50" width="5" height="14" fill="#2a2a2a"/><rect x="0" y="72" width="24" height="18" fill="#e3e0d6"/><rect x="74" y="-3" width="18" height="16" fill="#a89a78"/><rect x="92" y="16" width="8" height="58" fill="#28201c"/><rect x="88" y="24" width="10" height="18" fill="#c76a78" opacity=".8"/><rect x="111" y="18" width="40" height="50" fill="#ececea" stroke="#0a0a0a" stroke-width="3.400"/><circle cx="135" cy="44" r="19" fill="#f2f2f0" stroke="#555" stroke-width="1.600"/><path d="M135 44l-14-12M135 44l-18 2M135 44l-8 16M135 44l6-18M135 44l16 8" stroke="#bbb" stroke-width=".8"/><rect x="124" y="82" width="30" height="16" fill="#e9e9e6"/><path d="M58 12c-16 0-26 8-30 24-4 6-10 14-12 26-2 12 2 22 6 30h78c6-10 8-22 4-34-2-10-6-16-8-24-4-14-18-22-38-22z" fill="#2a1b17"/><ellipse cx="59.500" cy="56" rx="22.500" ry="32" fill="#c9a090"/><path d="M36 40c1-13 12-19 23-18 11 0 21 6 23 18-5-9-14-13-23-13s-18 4-23 13z" fill="#2a1b17"/><path d="M34 46c4-3 10-3 14 0 3 3 3 8 0 11-4 3-10 3-14 0-2-3-2-8 0-11zM61 44c4-3 11-3 15 0 3 3 3 8 0 11-4 3-11 3-15 0-3-3-3-8 0-11zM49 48c3-2 8-2 11 0" fill="none" stroke="#7a2430" stroke-width="1.700"/><path d="M48 66c5-2 11-2 16 0-4 3-12 3-16 0z" fill="#a35a58"/><path d="M55 50v10" stroke="#b48b7b" stroke-width="2"/><path d="M40 84l8-8c6 4 16 4 24 0l8 8-6 14h-28z" fill="#e4dfda"/><path d="M-3 111c2-8 6-14 14-16l30-12 10 20h14l10-20 30 10c8 3 12 10 14 18z" fill="#0c0c0e"/><rect x="-3" y="101" width="156" height="12" fill="#050506"/></g></g></svg>
<div class="a " style="left:1130.00px;top:224.50px;width:150.00px;height:7.30px;background:#000"></div>
<div class="t" style='left:1143.40px;top:213.60px;font-family:"DejaVu Sans Condensed","DejaVu Sans",sans-serif;font-size:10.4px;line-height:16px;color:#fff;letter-spacing:-0.040px;-webkit-text-stroke:.45px #fff;'>Emine Kaçmazoğlu</div>
<div class="a" id="ppt" style="left:0;top:0;width:1280px;height:721px;filter:blur(.3px)">
<div class="a " style="left:4.00px;top:137.30px;width:953.20px;height:39.70px;background:#b7472a"></div>
<svg class="a" style="left:18.00px;top:142.80px;" width="10.20" height="10.40" viewBox="0 0 10.20 10.40"><path d="M.6.600h8.900v8.900h-8.900z" fill="none" stroke="#fff" stroke-width="1.200"/><rect x="2.400" y=".8" width="5.200" height="3.200" fill="#fff"/><rect x="2.400" y="6.300" width="5.200" height="3.400" fill="#fff"/><rect x="3.600" y="7.200" width="2.800" height="2.600" fill="#b7472a"/><rect x="2.900" y="1" width="4.200" height="2.200" fill="#b7472a"/></svg>
<svg class="a" style="left:48.00px;top:143.00px;" width="11.00" height="10.00" viewBox="0 0 11.00 10.00"><path d="M1 3.500h5.500a3 3 0 0 1 0 6h-1.500" fill="none" stroke="#d98e78" stroke-width="1.300"/><path d="M3.600 .8l-2.800 2.700 2.800 2.700" fill="none" stroke="#d98e78" stroke-width="1.300"/></svg>
<svg class="a" style="left:64.50px;top:147.40px;" width="3.00" height="1.80" viewBox="0 0 3.00 1.80"><path d="M0 0h3.00l-1.50 1.80z" fill="#d08570"/></svg>
<svg class="a" style="left:79.50px;top:142.50px;" width="11.00" height="11.00" viewBox="0 0 11.00 11.00"><path d="M7.300 1.700a4 4 0 1 1-4.200.6" fill="none" stroke="#fff" stroke-width="1.400"/><path d="M6.300 .2l3 1.300-1.900 2.600z" fill="#fff"/></svg>
<svg class="a" style="left:111.50px;top:143.00px;" width="12.50" height="11.00" viewBox="0 0 12.50 11.00"><path d="M.5 .8h10.500M1.400 .8v6.500h5" fill="none" stroke="#fff" stroke-width="1"/><path d="M10.100 .8v2" stroke="#fff" stroke-width="1"/><circle cx="8" cy="6.200" r="2.800" fill="none" stroke="#fff" stroke-width=".9"/><path d="M7.200 4.800l2.300 1.400-2.300 1.400z" fill="#fff"/><path d="M5 7.300v2.300M3 10h5" stroke="#fff" stroke-width=".9"/></svg>
<svg class="a" style="left:147.00px;top:145.50px;" width="5.50" height="6.50" viewBox="0 0 5.50 6.50"><path d="M.5 .6h4.200" stroke="#fff" stroke-width="1"/><path d="M.3 2.800h4.600l-2.300 2.600z" fill="#fff"/></svg>
<div class="t" style='left:306.50px;top:142.60px;font-family:"Liberation Sans",sans-serif;font-size:8.2px;line-height:13px;color:#fff;letter-spacing:-0.179px;'>FEN EĞİTİMİNDE BİLİMSEL SÜREÇ BECERİLERİNİN ÖNEMİ.ppt [Uyumluluk Modu] - PowerPoint</div>
<svg class="a" style="left:839.50px;top:144.30px;" width="10.00" height="8.00" viewBox="0 0 10.00 8.00"><rect x=".5" y=".5" width="8.800" height="7" fill="none" stroke="#fff" stroke-width="1"/><path d="M.5 2.200h8.800" stroke="#fff" stroke-width=".9"/><path d="M4.900 6.600v-3.200M3.400 4.700l1.500-1.500 1.500 1.500" stroke="#fff" stroke-width=".9" fill="none"/></svg>
<div class="a " style="left:873.00px;top:148.40px;width:7.20px;height:1.40px;background:#fff"></div>
<svg class="a" style="left:905.00px;top:144.30px;" width="8.00" height="8.00" viewBox="0 0 8.00 8.00"><rect x=".5" y="2.300" width="5" height="4.800" fill="none" stroke="#fff" stroke-width="1"/><path d="M2.200 2.200v-1.600h5v4.800h-1.600" fill="none" stroke="#fff" stroke-width="1"/></svg>
<svg class="a" style="left:936.50px;top:143.80px;" width="9.00" height="9.00" viewBox="0 0 9.00 9.00"><path d="M1 1l6.800 6.800M7.800 1l-6.800 6.800" stroke="#fff" stroke-width="1.500"/></svg>
<div class="a " style="left:47.80px;top:160.40px;width:35.40px;height:17.10px;background:#f1f1f1"></div>
<div class="t" style='left:13.50px;top:162.80px;font-family:"Liberation Sans",sans-serif;font-size:8.3px;line-height:13px;color:#fff;letter-spacing:-0.458px;'>Dosya</div>
<div class="t" style='left:56.80px;top:162.80px;font-family:"Liberation Sans",sans-serif;font-size:8.3px;line-height:13px;color:#c2472a;letter-spacing:-0.216px;'>Giriş</div>
<div class="t" style='left:93.40px;top:162.80px;font-family:"Liberation Sans",sans-serif;font-size:8.3px;line-height:13px;color:#fff;letter-spacing:-0.447px;'>Ekle</div>
<div class="t" style='left:128.40px;top:162.80px;font-family:"Liberation Sans",sans-serif;font-size:8.3px;line-height:13px;color:#fff;letter-spacing:-0.219px;'>Tasarım</div>
<div class="t" style='left:177.20px;top:162.80px;font-family:"Liberation Sans",sans-serif;font-size:8.3px;line-height:13px;color:#fff;letter-spacing:-0.277px;'>Geçişler</div>
<div class="t" style='left:225.70px;top:162.80px;font-family:"Liberation Sans",sans-serif;font-size:8.3px;line-height:13px;color:#fff;letter-spacing:0.067px;'>Animasyonlar</div>
<div class="t" style='left:297.20px;top:162.80px;font-family:"Liberation Sans",sans-serif;font-size:8.3px;line-height:13px;color:#fff;letter-spacing:-0.192px;'>Slayt Gösterisi</div>
<div class="t" style='left:368.40px;top:162.80px;font-family:"Liberation Sans",sans-serif;font-size:8.3px;line-height:13px;color:#fff;letter-spacing:-0.235px;'>Gözden Geçir</div>
<div class="t" style='left:437.80px;top:162.80px;font-family:"Liberation Sans",sans-serif;font-size:8.3px;line-height:13px;color:#fff;letter-spacing:-0.066px;'>Görünüm</div>
<svg class="a" style="left:494.00px;top:163.50px;" width="6.00" height="9.50" viewBox="0 0 6.00 9.50"><path d="M3 .6a2.300 2.300 0 0 1 1.400 4.200v1.400h-2.800v-1.400a2.300 2.300 0 0 1 1.400-4.200z" fill="none" stroke="#eac3b6" stroke-width=".8"/><path d="M1.900 7.400h2.200M2.200 8.500h1.600" stroke="#eac3b6" stroke-width=".7"/></svg>
<div class="t" style='left:505.00px;top:162.80px;font-family:"Liberation Sans",sans-serif;font-size:8.3px;line-height:13px;color:#e6b5a5;letter-spacing:-0.017px;'>Ne yapmak istediğinizi söyleyin...</div>
<div class="t" style='left:854.70px;top:163.30px;font-family:"Liberation Sans",sans-serif;font-size:8.3px;line-height:13px;color:#fff;letter-spacing:0.187px;'>Oturum Aç</div>
<div class="a " style="left:902.50px;top:160.80px;width:54.70px;height:16.20px;background:#a03b22"></div>
<svg class="a" style="left:906.50px;top:162.80px;" width="12.00" height="12.20" viewBox="0 0 12.00 12.20"><circle cx="5.400" cy="3.600" r="2.800" fill="none" stroke="#fff" stroke-width="1.100"/><path d="M.7 11.400c.2-3 1.900-4.600 4.700-4.600 1.300 0 2.300.4 3.100 1" fill="none" stroke="#fff" stroke-width="1.100"/><path d="M9.300 7.600v4M7.300 9.600h4" stroke="#fff" stroke-width="1"/></svg>
<div class="t" style='left:921.00px;top:163.30px;font-family:"Liberation Sans",sans-serif;font-size:8.3px;line-height:13px;color:#fff;letter-spacing:-0.421px;'>Paylaş</div>
<div class="a " style="left:4.00px;top:177.00px;width:953.20px;height:63.40px;background:#f1f1f1"></div>
<div class="a " style="left:4.00px;top:240.40px;width:953.20px;height:0.80px;background:#d4d4d4"></div>
<div class="a " style="left:112.60px;top:181.00px;width:0.90px;height:57.00px;background:#dcdcdc"></div>
<div class="a " style="left:199.30px;top:181.00px;width:0.90px;height:57.00px;background:#dcdcdc"></div>
<div class="a " style="left:358.00px;top:181.00px;width:0.90px;height:57.00px;background:#dcdcdc"></div>
<div class="a " style="left:578.60px;top:181.00px;width:0.90px;height:57.00px;background:#dcdcdc"></div>
<div class="a " style="left:821.10px;top:181.00px;width:0.90px;height:57.00px;background:#dcdcdc"></div>
<div class="a " style="left:883.90px;top:181.00px;width:0.90px;height:57.00px;background:#dcdcdc"></div>
<svg class="a" style="left:13.50px;top:182.50px;" width="21.50" height="22.50" viewBox="0 0 21.50 22.50"><rect x="1" y="2.800" width="15.600" height="16.400" rx="1" fill="#e9bd6a"/><rect x="5.200" y="1" width="7.200" height="3.800" rx=".8" fill="#8d8d8d"/><rect x="6.800" y=".2" width="4" height="2" rx=".8" fill="#777"/><path d="M10.400 8.800h6.400l3.400 3.300v9.600h-9.800z" fill="#fff" stroke="#8a8a8a" stroke-width=".8"/><path d="M16.800 8.800v3.300h3.400" fill="none" stroke="#8a8a8a" stroke-width=".8"/></svg>
<div class="t" style='left:8.40px;top:205.20px;font-family:"Liberation Sans",sans-serif;font-size:8.3px;line-height:13px;color:#444;letter-spacing:-0.155px;'>Yapıştır</div>
<svg class="a" style="left:20.00px;top:220.50px;" width="3.60" height="2.00" viewBox="0 0 3.60 2.00"><path d="M0 0h3.60l-1.80 2.00z" fill="#666"/></svg>
<svg class="a" style="left:39.50px;top:181.50px;" width="11.50" height="11.50" viewBox="0 0 11.50 11.50"><path d="M2.600 .5l4.800 7M8.600 .5l-4.800 7" stroke="#6a6a6a" stroke-width="1.100"/><circle cx="2.800" cy="8.900" r="1.800" fill="none" stroke="#3a78c9" stroke-width="1"/><circle cx="8.400" cy="8.900" r="1.800" fill="none" stroke="#3a78c9" stroke-width="1"/></svg>
<div class="t" style='left:52.90px;top:181.70px;font-family:"Liberation Sans",sans-serif;font-size:8.3px;line-height:13px;color:#444;transform-origin:0 50%;transform:scaleX(0.8673);'>Kes</div>
<svg class="a" style="left:39.00px;top:198.00px;" width="12.00" height="11.50" viewBox="0 0 12.00 11.50"><path d="M.6 .6h4.200l1.800 1.800v5.600h-6z" fill="#fff" stroke="#6a6a6a" stroke-width=".8"/><path d="M4.600 3.600h4.200l1.800 1.800v5.400h-6z" fill="#fff" stroke="#6a6a6a" stroke-width=".8"/><path d="M1.800 3h2M1.800 4.800h2M5.800 7h3.400M5.800 8.800h3.400" stroke="#3a78c9" stroke-width=".8"/></svg>
<div class="t" style='left:52.90px;top:197.60px;font-family:"Liberation Sans",sans-serif;font-size:8.3px;line-height:13px;color:#444;letter-spacing:-0.131px;'>Kopyala</div>
<svg class="a" style="left:89.00px;top:202.40px;" width="3.60" height="2.00" viewBox="0 0 3.60 2.00"><path d="M0 0h3.60l-1.80 2.00z" fill="#666"/></svg>
<svg class="a" style="left:39.50px;top:212.50px;" width="12.50" height="12.50" viewBox="0 0 12.50 12.50"><path d="M8.200 1l2.400 2.400-3.600 3-1.800-1.800z" fill="#555"/><path d="M4.800 4.800l2.400 2.400-2 3.800-5-2.600z" fill="#e9bd6a"/><path d="M9 .4l2 2" stroke="#555" stroke-width="1.300"/></svg>
<div class="t" style='left:52.90px;top:213.60px;font-family:"Liberation Sans",sans-serif;font-size:8.3px;line-height:13px;color:#444;letter-spacing:-0.131px;'>Biçim Boyacısı</div>
<div class="t" style='left:43.70px;top:229.70px;font-family:"Liberation Sans",sans-serif;font-size:8.3px;line-height:13px;color:#6a6a6a;letter-spacing:-0.530px;'>Pano</div>
<svg class="a" style="left:105.70px;top:233.90px;" width="5.50" height="5.50" viewBox="0 0 5.50 5.50"><path d="M.4 4.200v-3.800h3.800" stroke="#8a8a8a" stroke-width=".8" fill="none"/><path d="M2.200 2.200l2.800 2.800M5 3v2h-2" stroke="#8a8a8a" stroke-width=".8" fill="none"/></svg>
<svg class="a" style="left:119.50px;top:181.00px;" width="23.50" height="20.00" viewBox="0 0 23.50 20.00"><rect x="3.400" y="3.400" width="18.200" height="14.400" fill="#fff" stroke="#8a8a8a" stroke-width=".9"/><rect x="5.600" y="5.600" width="13.800" height="3.600" fill="#cfcfcf"/><path d="M5.600 11.600h1.200M8 11.600h11.400M5.600 14.200h1.200M8 14.200h11.400" stroke="#9a9a9a" stroke-width=".9"/><path d="M3.800 .2v7.200M.2 3.800h7.200M1.300 1.300l5 5M6.300 1.300l-5 5" stroke="#eab22f" stroke-width="1"/></svg>
<div class="t" style='left:123.20px;top:205.20px;font-family:"Liberation Sans",sans-serif;font-size:8.3px;line-height:13px;color:#444;letter-spacing:0.047px;'>Yeni</div>
<div class="t" style='left:120.00px;top:215.50px;font-family:"Liberation Sans",sans-serif;font-size:8.3px;line-height:13px;color:#444;letter-spacing:-0.363px;'>Slayt</div>
<svg class="a" style="left:139.50px;top:221.50px;" width="3.40" height="2.00" viewBox="0 0 3.40 2.00"><path d="M0 0h3.40l-1.70 2.00z" fill="#666"/></svg>
<svg class="a" style="left:147.50px;top:181.50px;" width="13.00" height="11.50" viewBox="0 0 13.00 11.50"><rect x=".6" y=".6" width="11.400" height="9.600" fill="#fff" stroke="#6a6a6a" stroke-width=".9"/><rect x="2" y="2" width="8.600" height="2" fill="#9a9a9a"/><rect x="2" y="5" width="3.400" height="4" fill="#9a9a9a"/><path d="M6.600 5.600h4M6.600 7.200h4M6.600 8.800h4" stroke="#9a9a9a" stroke-width=".7"/></svg>
<div class="t" style='left:161.60px;top:181.70px;font-family:"Liberation Sans",sans-serif;font-size:8.3px;line-height:13px;color:#444;letter-spacing:-0.346px;'>Düzen</div>
<svg class="a" style="left:186.60px;top:186.80px;" width="3.40" height="2.00" viewBox="0 0 3.40 2.00"><path d="M0 0h3.40l-1.70 2.00z" fill="#666"/></svg>
<svg class="a" style="left:147.50px;top:197.00px;" width="13.00" height="12.50" viewBox="0 0 13.00 12.50"><rect x="2.600" y="3.600" width="9.600" height="8" fill="#fff" stroke="#6a6a6a" stroke-width=".9"/><path d="M4.200 6.400h1M6 6.400h4.800M4.200 8.400h1M6 8.400h4.800" stroke="#8a8a8a" stroke-width=".8"/><path d="M1 5.200a3.600 3.600 0 0 1 5.600-3.200" fill="none" stroke="#2f6fc0" stroke-width="1.200"/><path d="M.2 2.600l.8 3 2.800-1z" fill="#2f6fc0"/></svg>
<div class="t" style='left:161.60px;top:197.60px;font-family:"Liberation Sans",sans-serif;font-size:8.3px;line-height:13px;color:#444;letter-spacing:-0.295px;'>Sıfırla</div>
<svg class="a" style="left:148.00px;top:213.00px;" width="12.50" height="12.50" viewBox="0 0 12.50 12.50"><rect x="3.600" y="3.400" width="8" height="3.600" fill="#f6f6f6" stroke="#c4c4c4" stroke-width=".8"/><rect x="3.600" y="8.200" width="8" height="3.600" fill="#f6f6f6" stroke="#c4c4c4" stroke-width=".8"/><path d="M.4 .4l2.600 2.600M3 .4l-2.600 2.600" stroke="#c9c9c9" stroke-width=".8"/></svg>
<div class="t" style='left:161.60px;top:213.60px;font-family:"Liberation Sans",sans-serif;font-size:8.3px;line-height:13px;color:#a3a3a3;letter-spacing:0.117px;'>Bölüm</div>
<svg class="a" style="left:188.30px;top:218.80px;" width="3.40" height="2.00" viewBox="0 0 3.40 2.00"><path d="M0 0h3.40l-1.70 2.00z" fill="#b5b5b5"/></svg>
<div class="t" style='left:143.40px;top:229.70px;font-family:"Liberation Sans",sans-serif;font-size:8.3px;line-height:13px;color:#6a6a6a;letter-spacing:-0.253px;'>Slaytlar</div>
<div class="a " style="left:203.00px;top:185.50px;width:68.20px;height:15.10px;background:#fff;border:1px solid #d0d0d0"></div>
<div class="a " style="left:261.00px;top:186.30px;width:9.40px;height:13.50px;background:#e9e9e9"></div>
<svg class="a" style="left:264.20px;top:192.25px;" width="3.20" height="1.90" viewBox="0 0 3.20 1.90"><path d="M0 0h3.20l-1.60 1.90z" fill="#b9b9b9"/></svg>
<div class="a " style="left:271.20px;top:185.50px;width:32.00px;height:15.10px;background:#fff;border:1px solid #d0d0d0;border-left:0"></div>
<div class="a " style="left:294.00px;top:186.30px;width:8.40px;height:13.50px;background:#e9e9e9"></div>
<svg class="a" style="left:296.60px;top:192.25px;" width="3.20" height="1.90" viewBox="0 0 3.20 1.90"><path d="M0 0h3.20l-1.60 1.90z" fill="#b9b9b9"/></svg>
<div class="t" style='left:274.00px;top:186.70px;font-family:"Liberation Sans",sans-serif;font-size:8.3px;line-height:13px;color:#9c9c9c;transform-origin:0 50%;transform:scaleX(0.8122);'>12</div>
<div class="t" style='left:307.80px;top:186.60px;font-family:"Liberation Sans",sans-serif;font-size:9.6px;line-height:14px;color:#a3a3a3;letter-spacing:-0.006px;'>A</div>
<svg class="a" style="left:313.50px;top:188.00px;" width="4.00" height="3.00" viewBox="0 0 4.00 3.00"><path d="M0 2.600l2-2.400 2 2.400z" fill="#b3b3b3"/></svg>
<div class="t" style='left:323.50px;top:188.20px;font-family:"Liberation Sans",sans-serif;font-size:7.8px;line-height:12px;color:#a3a3a3;letter-spacing:-0.203px;'>A</div>
<svg class="a" style="left:328.50px;top:188.20px;" width="4.00" height="2.80" viewBox="0 0 4.00 2.80"><path d="M0 .2h4l-2 2.400z" fill="#b3b3b3"/></svg>
<div class="a " style="left:336.80px;top:186.00px;width:0.80px;height:14.00px;background:#dedede"></div>
<svg class="a" style="left:343.00px;top:187.00px;" width="11.00" height="12.00" viewBox="0 0 11.00 12.00"><path d="M6.200 1.200l4 4-4.600 4.600-3.800-3.800z" fill="#cfcfcf"/><path d="M1.800 6l3.800 3.800-1.200 1.200h-2.800l-1.200-2.600z" fill="#dedede"/><text x="1.400" y="5.600" font-family="Liberation Sans,sans-serif" font-size="5.600" fill="#b3b3b3">A</text></svg>
<div class="t" style='left:207.00px;top:207.90px;font-family:"Liberation Sans",sans-serif;font-size:8.4px;line-height:13px;color:#a3a3a3;letter-spacing:-0.463px;font-weight:700;'>K</div>
<div class="t" style='left:222.90px;top:207.90px;font-family:"Liberation Serif",serif;font-size:8.4px;line-height:13px;color:#a3a3a3;letter-spacing:-0.425px;font-weight:700;font-style:italic;'>T</div>
<div class="t" style='left:237.40px;top:207.90px;font-family:"Liberation Sans",sans-serif;font-size:8.4px;line-height:13px;color:#a3a3a3;letter-spacing:0.806px;text-decoration:underline;'>A</div>
<div class="t" style='left:253.40px;top:207.90px;font-family:"Liberation Sans",sans-serif;font-size:8.6px;line-height:13px;color:#a3a3a3;letter-spacing:0.066px;font-weight:700;text-shadow:.8px .8px 0 #d2d2d2;'>S</div>
<div class="t" style='left:266.50px;top:209.30px;font-family:"Liberation Sans",sans-serif;font-size:6.6px;line-height:11px;color:#a3a3a3;letter-spacing:0.280px;text-decoration:line-through;'>abc</div>
<div class="t" style='left:282.00px;top:207.40px;font-family:"Liberation Sans",sans-serif;font-size:7.6px;line-height:12px;color:#a3a3a3;transform-origin:0 50%;transform:scaleX(1.1276);'>AV</div>
<svg class="a" style="left:282.00px;top:217.00px;" width="11.00" height="3.50" viewBox="0 0 11.00 3.50"><path d="M.6 1.700h9.800M2.200 .2l-1.600 1.500 1.600 1.500M8.800 .2l1.600 1.500-1.600 1.500" stroke="#b9b9b9" stroke-width=".8" fill="none"/></svg>
<svg class="a" style="left:295.70px;top:213.85px;" width="3.20" height="1.90" viewBox="0 0 3.20 1.90"><path d="M0 0h3.20l-1.60 1.90z" fill="#bdbdbd"/></svg>
<div class="t" style='left:304.80px;top:207.90px;font-family:"Liberation Sans",sans-serif;font-size:8.4px;line-height:13px;color:#a3a3a3;letter-spacing:0.150px;'>Aa</div>
<svg class="a" style="left:318.80px;top:213.85px;" width="3.20" height="1.90" viewBox="0 0 3.20 1.90"><path d="M0 0h3.20l-1.60 1.90z" fill="#bdbdbd"/></svg>
<div class="a " style="left:328.00px;top:207.00px;width:0.80px;height:15.00px;background:#dedede"></div>
<div class="t" style='left:336.00px;top:206.20px;font-family:"Liberation Sans",sans-serif;font-size:10.6px;line-height:16px;color:#a3a3a3;letter-spacing:0.522px;'>A</div>
<svg class="a" style="left:349.40px;top:213.85px;" width="3.20" height="1.90" viewBox="0 0 3.20 1.90"><path d="M0 0h3.20l-1.60 1.90z" fill="#bdbdbd"/></svg>
<div class="t" style='left:259.40px;top:229.70px;font-family:"Liberation Sans",sans-serif;font-size:8.3px;line-height:13px;color:#6a6a6a;letter-spacing:-0.325px;'>Yazı Tipi</div>
<svg class="a" style="left:350.70px;top:233.90px;" width="5.50" height="5.50" viewBox="0 0 5.50 5.50"><path d="M.4 4.200v-3.800h3.800" stroke="#8a8a8a" stroke-width=".8" fill="none"/><path d="M2.200 2.200l2.800 2.800M5 3v2h-2" stroke="#8a8a8a" stroke-width=".8" fill="none"/></svg>
<svg class="a" style="left:364.40px;top:188.30px;" width="10.60" height="10.20" viewBox="0 0 10.60 10.20"><path d="M3.200 1h7.200M3.200 4.800h7.200M3.200 8.600h7.200" stroke="#bdbdbd" stroke-width=".9"/><circle cx=".9" cy="1" r=".8" fill="#bdbdbd"/><circle cx=".9" cy="4.800" r=".8" fill="#bdbdbd"/><circle cx=".9" cy="8.600" r=".8" fill="#bdbdbd"/></svg>
<svg class="a" style="left:379.50px;top:192.50px;" width="3.00" height="1.80" viewBox="0 0 3.00 1.80"><path d="M0 0h3.00l-1.50 1.80z" fill="#c4c4c4"/></svg>
<svg class="a" style="left:387.80px;top:188.00px;" width="10.70" height="10.80" viewBox="0 0 10.70 10.80"><path d="M3.400 1.300h7M3.400 5.100h7M3.400 8.900h7" stroke="#bdbdbd" stroke-width=".9"/><path d="M.9 0v2.400M.3 3.900h1.300v1l-1.300 1.200h1.400M.3 7.700h1.300v2.200h-1.300M.6 8.800h1" stroke="#bdbdbd" stroke-width=".6" fill="none"/></svg>
<svg class="a" style="left:403.30px;top:192.50px;" width="3.00" height="1.80" viewBox="0 0 3.00 1.80"><path d="M0 0h3.00l-1.50 1.80z" fill="#c4c4c4"/></svg>
<div class="a " style="left:411.80px;top:185.50px;width:0.80px;height:15.00px;background:#dedede"></div>
<svg class="a" style="left:417.80px;top:188.30px;" width="11.70" height="10.20" viewBox="0 0 11.70 10.20"><path d="M0 .6h11M5 3.300h6M5 5.900h6M0 8.600h11" stroke="#bdbdbd" stroke-width=".9"/><path d="M3.600 4.600h-3M2 3.200l-1.600 1.400 1.600 1.400" stroke="#a9a9a9" stroke-width=".8" fill="none"/></svg>
<svg class="a" style="left:432.80px;top:188.30px;" width="11.70" height="10.20" viewBox="0 0 11.70 10.20"><path d="M0 .6h11M5 3.300h6M5 5.900h6M0 8.600h11" stroke="#bdbdbd" stroke-width=".9"/><path d="M.2 4.600h3M1.800 3.200l1.600 1.400-1.600 1.400" stroke="#a9a9a9" stroke-width=".8" fill="none"/></svg>
<div class="a " style="left:448.80px;top:185.50px;width:0.80px;height:15.00px;background:#dedede"></div>
<svg class="a" style="left:454.60px;top:187.50px;" width="10.90" height="12.00" viewBox="0 0 10.90 12.00"><path d="M5 2.200h5.600M5 4.800h5.600M5 7.400h5.600M5 10h5.600" stroke="#bdbdbd" stroke-width=".9"/><path d="M1.800 1v10M.2 2.800l1.600-1.800 1.600 1.800M.2 9.200l1.600 1.800 1.600-1.800" stroke="#a9a9a9" stroke-width=".8" fill="none"/></svg>
<svg class="a" style="left:468.80px;top:192.50px;" width="3.00" height="1.80" viewBox="0 0 3.00 1.80"><path d="M0 0h3.00l-1.50 1.80z" fill="#c4c4c4"/></svg>
<svg class="a" style="left:364.80px;top:210.00px;" width="12.00" height="12.00" viewBox="0 0 12.00 12.00"><path d="M0 0.50h9.60M0 3.40h7.00M0 6.30h9.60M0 9.20h7.00" stroke="#bdbdbd" stroke-width="0.9"/></svg>
<svg class="a" style="left:379.80px;top:209.40px;" width="12.20" height="12.00" viewBox="0 0 12.20 12.00"><path d="M0 1.100h10M1.500 4h7M0 6.900h10M1.500 9.800h7" stroke="#bdbdbd" stroke-width=".9"/></svg>
<svg class="a" style="left:395.40px;top:209.40px;" width="11.60" height="12.00" viewBox="0 0 11.60 12.00"><path d="M0 1.100h9.800M2.800 4h7M0 6.900h9.800M2.800 9.800h7" stroke="#bdbdbd" stroke-width=".9"/></svg>
<svg class="a" style="left:411.00px;top:210.00px;" width="12.00" height="12.00" viewBox="0 0 12.00 12.00"><path d="M0 0.50h9.60M0 3.40h9.60M0 6.30h9.60M0 9.20h9.60" stroke="#bdbdbd" stroke-width="0.9"/></svg>
<div class="a " style="left:425.80px;top:207.00px;width:0.80px;height:15.00px;background:#dedede"></div>
<svg class="a" style="left:432.00px;top:209.40px;" width="11.00" height="12.00" viewBox="0 0 11.00 12.00"><path d="M0 .5h4.200M5.400 .5h4.200M0 2.950h4.200M5.400 2.950h4.200M0 5.400h4.200M5.400 5.400h4.200M0 7.850h4.200M5.400 7.850h4.200M0 10.300h4.200M5.400 10.300h4.200" stroke="#bdbdbd" stroke-width=".9"/></svg>
<svg class="a" style="left:445.80px;top:214.10px;" width="3.00" height="1.80" viewBox="0 0 3.00 1.80"><path d="M0 0h3.00l-1.50 1.80z" fill="#c4c4c4"/></svg>
<svg class="a" style="left:477.60px;top:182.00px;" width="11.40" height="12.00" viewBox="0 0 11.40 12.00"><path d="M1 .6v10M3.600 .6v10M6.200 .6v10" stroke="#b0b0b0" stroke-width=".8" stroke-dasharray="1.600 .8"/><path d="M9 6.600v4M7.900 9.400l1.100 1.300 1.100-1.300" stroke="#a9a9a9" stroke-width=".7" fill="none"/><text x="7.200" y="5.200" font-family="Liberation Sans,sans-serif" font-size="5.400" fill="#9c9c9c">A</text></svg>
<div class="t" style='left:491.50px;top:181.70px;font-family:"Liberation Sans",sans-serif;font-size:8.3px;line-height:13px;color:#a3a3a3;letter-spacing:0.075px;'>Metin Yönü</div>
<svg class="a" style="left:536.70px;top:187.10px;" width="3.00" height="1.80" viewBox="0 0 3.00 1.80"><path d="M0 0h3.00l-1.50 1.80z" fill="#c4c4c4"/></svg>
<svg class="a" style="left:477.60px;top:197.50px;" width="11.40" height="12.00" viewBox="0 0 11.40 12.00"><path d="M3 .6h-2.400v10h2.400M8 .6h2.400v10h-2.400" fill="none" stroke="#b0b0b0" stroke-width=".9"/><path d="M5.500 1.600v3M4.400 2.800l1.100-1.300 1.100 1.300M5.500 9.600v-3M4.400 8.400l1.100 1.300 1.100-1.300" stroke="#a9a9a9" stroke-width=".7" fill="none"/><path d="M3.400 5.600h4.200" stroke="#b0b0b0" stroke-width=".8"/></svg>
<div class="t" style='left:491.50px;top:197.60px;font-family:"Liberation Sans",sans-serif;font-size:8.3px;line-height:13px;color:#a3a3a3;letter-spacing:-0.014px;'>Metni Hizala</div>
<svg class="a" style="left:539.80px;top:202.90px;" width="3.00" height="1.80" viewBox="0 0 3.00 1.80"><path d="M0 0h3.00l-1.50 1.80z" fill="#c4c4c4"/></svg>
<svg class="a" style="left:477.60px;top:213.50px;" width="12.40" height="12.50" viewBox="0 0 12.40 12.50"><path d="M.4 2.400h7.600l2 2h-9.600z" fill="#c9c9c9"/><rect x="3.600" y="5.400" width="7.800" height="6" fill="#fff" stroke="#b0b0b0" stroke-width=".8"/><path d="M5 7.400h1M6.800 7.400h3.400M5 9.400h1M6.800 9.400h3.400" stroke="#bdbdbd" stroke-width=".7"/><path d="M1.600 5v4.400h1.400" stroke="#b0b0b0" stroke-width=".8" fill="none"/></svg>
<div class="t" style='left:491.50px;top:213.60px;font-family:"Liberation Sans",sans-serif;font-size:8.3px;line-height:13px;color:#a3a3a3;letter-spacing:-0.023px;'>SmartArt'a Dönüştür</div>
<svg class="a" style="left:568.80px;top:218.90px;" width="3.00" height="1.80" viewBox="0 0 3.00 1.80"><path d="M0 0h3.00l-1.50 1.80z" fill="#c4c4c4"/></svg>
<div class="t" style='left:448.80px;top:229.70px;font-family:"Liberation Sans",sans-serif;font-size:8.3px;line-height:13px;color:#6a6a6a;letter-spacing:-0.404px;'>Paragraf</div>
<svg class="a" style="left:572.10px;top:233.90px;" width="5.50" height="5.50" viewBox="0 0 5.50 5.50"><path d="M.4 4.200v-3.800h3.800" stroke="#8a8a8a" stroke-width=".8" fill="none"/><path d="M2.200 2.200l2.800 2.800M5 3v2h-2" stroke="#8a8a8a" stroke-width=".8" fill="none"/></svg>
<div class="a " style="left:584.60px;top:181.30px;width:94.20px;height:43.20px;background:#fff;border:1px solid #c6c6c6"></div>
<div class="a " style="left:669.40px;top:182.00px;width:8.60px;height:14.00px;background:#e3e3e3"></div>
<div class="a " style="left:669.40px;top:196.00px;width:8.60px;height:0.80px;background:#d0d0d0"></div>
<div class="a " style="left:669.40px;top:210.00px;width:8.60px;height:0.80px;background:#d0d0d0"></div>
<div class="a " style="left:669.00px;top:182.00px;width:0.80px;height:42.00px;background:#d6d6d6"></div>
<svg class="a" style="left:671.70px;top:187.80px;" width="4.20" height="2.60" viewBox="0 0 4.20 2.60"><path d="M0 2.400l2.100-2.200 2.100 2.200z" fill="#c2c2c2"/></svg>
<svg class="a" style="left:672.10px;top:202.20px;" width="3.40" height="2.00" viewBox="0 0 3.40 2.00"><path d="M0 0h3.40l-1.70 2.00z" fill="#666"/></svg>
<svg class="a" style="left:671.50px;top:214.50px;" width="4.60" height="5.50" viewBox="0 0 4.60 5.50"><path d="M.2 .6h4.200" stroke="#666" stroke-width=".9"/><path d="M.2 2.400h4.200l-2.100 2.400z" fill="#666"/></svg>
<svg class="a" style="left:585.50px;top:184.00px;" width="11.00" height="10.00" viewBox="0 0 11.00 10.00"><rect x=".5" y=".8" width="10" height="8.400" fill="#fff" stroke="#595959" stroke-width=".85" fill="none"/><path d="M2 3.400h7M2 5.200h7M2 7h7" stroke="#8a8a8a" stroke-width=".6"/><rect x="2" y="1.600" width="3" height="1.400" fill="#2f6fc0"/></svg>
<svg class="a" style="left:599.50px;top:184.00px;" width="11.00" height="10.00" viewBox="0 0 11.00 10.00"><path d="M1 .8l9 8.400" stroke="#595959" stroke-width=".85" fill="none"/></svg>
<svg class="a" style="left:613.50px;top:184.00px;" width="11.00" height="10.00" viewBox="0 0 11.00 10.00"><path d="M.6 .8l9 8.200M9.800 5.600v3.600h-3.800" stroke="#595959" stroke-width=".85" fill="none"/></svg>
<svg class="a" style="left:627.70px;top:184.00px;" width="11.00" height="10.00" viewBox="0 0 11.00 10.00"><rect x=".5" y="1.400" width="10" height="7.200" stroke="#595959" stroke-width=".85" fill="none"/></svg>
<svg class="a" style="left:641.50px;top:184.00px;" width="11.00" height="10.00" viewBox="0 0 11.00 10.00"><ellipse cx="5.500" cy="5" rx="5" ry="3.700" stroke="#595959" stroke-width=".85" fill="none"/></svg>
<svg class="a" style="left:655.50px;top:184.00px;" width="11.00" height="10.00" viewBox="0 0 11.00 10.00"><rect x=".5" y="1.400" width="10" height="7.200" rx="1.800" stroke="#595959" stroke-width=".85" fill="none"/></svg>
<svg class="a" style="left:585.50px;top:198.00px;" width="11.00" height="10.00" viewBox="0 0 11.00 10.00"><path d="M5.500 .8l4.800 8.400h-9.600z" stroke="#595959" stroke-width=".85" fill="none"/></svg>
<svg class="a" style="left:599.50px;top:198.00px;" width="11.00" height="10.00" viewBox="0 0 11.00 10.00"><path d="M.8 1.200h4.400v7.600h5" stroke="#595959" stroke-width=".85" fill="none"/></svg>
<svg class="a" style="left:613.50px;top:198.00px;" width="11.00" height="10.00" viewBox="0 0 11.00 10.00"><path d="M.4 1.200h4.400v7h5M8 6.400l2 1.800-2 1.800" stroke="#595959" stroke-width=".85" fill="none"/></svg>
<svg class="a" style="left:627.70px;top:198.00px;" width="11.00" height="10.00" viewBox="0 0 11.00 10.00"><path d="M.6 3.200h5.200v-2.200l4.600 4-4.600 4v-2.200h-5.200z" stroke="#595959" stroke-width=".85" fill="none"/></svg>
<svg class="a" style="left:641.50px;top:198.00px;" width="11.00" height="10.00" viewBox="0 0 11.00 10.00"><path d="M3.400 .6h4.200v4.600h2.400l-4.500 4.400-4.500-4.400h2.400z" stroke="#595959" stroke-width=".85" fill="none"/></svg>
<svg class="a" style="left:655.50px;top:198.00px;" width="11.00" height="10.00" viewBox="0 0 11.00 10.00"><path d="M.8 9.200v-5.200c0-2 1.600-3.200 3.600-3.200h3c1.400 0 2.600 1 2.600 2.400v.8h-3v2.400h3.200v2.800z" stroke="#595959" stroke-width=".85" fill="none"/></svg>
<svg class="a" style="left:585.50px;top:212.20px;" width="11.00" height="10.00" viewBox="0 0 11.00 10.00"><path d="M2.400 .8c3 1-2.400 3.600 0 4.400s3-3.200 3.400-1.200-1.400 2.400.2 5.200M5 8.200l1.200 1.200.4-2" stroke="#595959" stroke-width=".85" fill="none"/></svg>
<svg class="a" style="left:599.50px;top:212.20px;" width="11.00" height="10.00" viewBox="0 0 11.00 10.00"><path d="M.6 1.200c5 0 8.600 2.600 9.600 8" stroke="#595959" stroke-width=".85" fill="none"/></svg>
<svg class="a" style="left:613.50px;top:212.20px;" width="11.00" height="10.00" viewBox="0 0 11.00 10.00"><path d="M.4 8.800c1.600-10 4.200-10 5.400-4s2.800 5 4.800 4" stroke="#595959" stroke-width=".85" fill="none"/></svg>
<svg class="a" style="left:627.70px;top:212.20px;" width="11.00" height="10.00" viewBox="0 0 11.00 10.00"><path d="M7 .6c-1.800 0-2 .8-2 2s.2 2.400-1.400 2.400c1.600 0 1.400 1.200 1.400 2.400s.2 2 2 2" stroke="#595959" stroke-width=".85" fill="none"/></svg>
<svg class="a" style="left:641.50px;top:212.20px;" width="11.00" height="10.00" viewBox="0 0 11.00 10.00"><path d="M4 .6c1.800 0 2 .8 2 2s-.2 2.400 1.400 2.400c-1.600 0-1.400 1.200-1.400 2.400s-.2 2-2 2" stroke="#595959" stroke-width=".85" fill="none"/></svg>
<svg class="a" style="left:655.50px;top:212.20px;" width="11.00" height="10.00" viewBox="0 0 11.00 10.00"><path d="M5.500 .4l1.500 3.300 3.600.3-2.700 2.400.8 3.400-3.200-1.800-3.200 1.800.8-3.400-2.700-2.400 3.600-.3z" stroke="#595959" stroke-width=".85" fill="none"/></svg>
<svg class="a" style="left:687.50px;top:182.80px;" width="20.00" height="19.00" viewBox="0 0 20.00 19.00"><rect x="10" y="2.600" width="6.600" height="8.400" fill="#e9bd6a"/><rect x="3.600" y="9.200" width="8.400" height="7.400" fill="#e9bd6a"/><rect x=".6" y=".6" width="7" height="7" fill="#fff" stroke="#8a8a8a" stroke-width=".9"/><rect x="11.600" y="10.600" width="7.600" height="7.600" fill="#fff" stroke="#6a6a6a" stroke-width=".9"/></svg>
<div class="t" style='left:683.00px;top:205.20px;font-family:"Liberation Sans",sans-serif;font-size:8.3px;line-height:13px;color:#444;letter-spacing:-0.084px;'>Yerleştir</div>
<svg class="a" style="left:696.20px;top:220.50px;" width="3.60" height="2.00" viewBox="0 0 3.60 2.00"><path d="M0 0h3.60l-1.80 2.00z" fill="#666"/></svg>
<svg class="a" style="left:719.50px;top:182.50px;" width="21.00" height="21.00" viewBox="0 0 21.00 21.00"><rect x=".8" y="1" width="16" height="17" rx="3.400" fill="#f3eef1" stroke="#c6c6c6" stroke-width=".9"/><path d="M19.400 3.200l1 1-8.400 10.600-2-1.600z" fill="#b8b8b8"/><path d="M9.800 13.400l2 1.600c-.6 1.800-2.400 2.800-4.400 2.400 1.400-1 1.400-2.800 2.400-4z" fill="#c9c9c9"/></svg>
<div class="t" style='left:721.50px;top:205.20px;font-family:"Liberation Sans",sans-serif;font-size:8.3px;line-height:13px;color:#a3a3a3;transform-origin:0 50%;transform:scaleX(0.8730);'>Hızlı</div>
<div class="t" style='left:716.00px;top:215.50px;font-family:"Liberation Sans",sans-serif;font-size:8.3px;line-height:13px;color:#a3a3a3;letter-spacing:-0.125px;'>Stiller</div>
<svg class="a" style="left:738.50px;top:221.60px;" width="3.00" height="1.80" viewBox="0 0 3.00 1.80"><path d="M0 0h3.00l-1.50 1.80z" fill="#c4c4c4"/></svg>
<svg class="a" style="left:745.50px;top:181.50px;" width="12.50" height="12.50" viewBox="0 0 12.50 12.50"><path d="M3.600 3.200l4.400-1.800 3 5.400-5.200 2.800z" fill="#fff" stroke="#b0b0b0" stroke-width=".8"/><path d="M5.200 .4v3.600" stroke="#b0b0b0" stroke-width=".8"/><path d="M11.600 6.800c.8 1 .8 1.800 0 2.400-.8-.6-.8-1.400 0-2.400z" fill="#c2c2c2"/><rect x=".6" y="10.400" width="11.400" height="1.800" fill="#d9d9d9"/></svg>
<div class="t" style='left:759.00px;top:181.70px;font-family:"Liberation Sans",sans-serif;font-size:8.3px;line-height:13px;color:#a3a3a3;letter-spacing:-0.145px;'>Şekil Dolgusu</div>
<svg class="a" style="left:811.10px;top:187.10px;" width="3.00" height="1.80" viewBox="0 0 3.00 1.80"><path d="M0 0h3.00l-1.50 1.80z" fill="#c4c4c4"/></svg>
<svg class="a" style="left:745.50px;top:197.50px;" width="12.50" height="12.00" viewBox="0 0 12.50 12.00"><rect x=".6" y="1.800" width="8.800" height="7.400" fill="#fff" stroke="#b8b8b8" stroke-width=".9"/><path d="M10.800 .6l1.200 1.200-5 5-1.800.6.600-1.800z" fill="#b5b5b5"/></svg>
<div class="t" style='left:759.00px;top:197.60px;font-family:"Liberation Sans",sans-serif;font-size:8.3px;line-height:13px;color:#a3a3a3;letter-spacing:-0.058px;'>Şekil Anahattı</div>
<svg class="a" style="left:811.80px;top:202.90px;" width="3.00" height="1.80" viewBox="0 0 3.00 1.80"><path d="M0 0h3.00l-1.50 1.80z" fill="#c4c4c4"/></svg>
<svg class="a" style="left:745.50px;top:214.00px;" width="12.50" height="11.00" viewBox="0 0 12.50 11.00"><path d="M2.600 1.800h7.800l-1.800 5.400h-7.800z" fill="#f6f6f6" stroke="#b8b8b8" stroke-width=".9"/><path d="M.8 8.200h7.800l1.800-5.400 1 .6-1.800 5.800h-8z" fill="#c9c9c9"/></svg>
<div class="t" style='left:759.00px;top:213.60px;font-family:"Liberation Sans",sans-serif;font-size:8.3px;line-height:13px;color:#a3a3a3;letter-spacing:-0.162px;'>Şekil Efektleri</div>
<svg class="a" style="left:809.80px;top:218.90px;" width="3.00" height="1.80" viewBox="0 0 3.00 1.80"><path d="M0 0h3.00l-1.50 1.80z" fill="#c4c4c4"/></svg>
<div class="t" style='left:686.00px;top:229.70px;font-family:"Liberation Sans",sans-serif;font-size:8.3px;line-height:13px;color:#6a6a6a;letter-spacing:-0.588px;'>Çizim</div>
<svg class="a" style="left:812.70px;top:233.90px;" width="5.50" height="5.50" viewBox="0 0 5.50 5.50"><path d="M.4 4.200v-3.800h3.800" stroke="#8a8a8a" stroke-width=".8" fill="none"/><path d="M2.200 2.200l2.800 2.800M5 3v2h-2" stroke="#8a8a8a" stroke-width=".8" fill="none"/></svg>
<svg class="a" style="left:826.80px;top:182.50px;" width="10.70" height="11.00" viewBox="0 0 10.70 11.00"><circle cx="6.400" cy="4" r="3.200" fill="#fff" stroke="#2f6fc0" stroke-width="1.200"/><path d="M4.200 6.400l-3.600 3.800" stroke="#2f6fc0" stroke-width="1.500"/></svg>
<div class="t" style='left:839.70px;top:181.70px;font-family:"Liberation Sans",sans-serif;font-size:8.3px;line-height:13px;color:#333;letter-spacing:-0.100px;'>Bul</div>
<svg class="a" style="left:826.50px;top:197.50px;" width="11.50" height="12.00" viewBox="0 0 11.50 12.00"><text x=".2" y="5" font-family="Liberation Sans,sans-serif" font-size="6" fill="#7a3d9a">ab</text><text x="3.600" y="10.800" font-family="Liberation Sans,sans-serif" font-size="6" fill="#2f6fc0">ac</text><path d="M.8 7.200v2.400h2" stroke="#2f6fc0" stroke-width=".7" fill="none"/></svg>
<div class="t" style='left:839.70px;top:197.60px;font-family:"Liberation Sans",sans-serif;font-size:8.3px;line-height:13px;color:#333;letter-spacing:0.054px;'>Değiştir</div>
<svg class="a" style="left:874.60px;top:202.80px;" width="3.40" height="2.00" viewBox="0 0 3.40 2.00"><path d="M0 0h3.40l-1.70 2.00z" fill="#666"/></svg>
<svg class="a" style="left:828.80px;top:213.50px;" width="8.20" height="11.50" viewBox="0 0 8.20 11.50"><path d="M.8 .6v8.600l2.200-2 1.600 3.400 1.400-.6-1.600-3.400h3z" fill="#fff" stroke="#555" stroke-width=".8" stroke-linejoin="round"/></svg>
<div class="t" style='left:839.70px;top:213.60px;font-family:"Liberation Sans",sans-serif;font-size:8.3px;line-height:13px;color:#333;transform-origin:0 50%;transform:scaleX(0.8603);'>Seç</div>
<svg class="a" style="left:854.60px;top:219.05px;" width="3.20" height="1.90" viewBox="0 0 3.20 1.90"><path d="M0 0h3.20l-1.60 1.90z" fill="#666"/></svg>
<div class="t" style='left:832.80px;top:229.70px;font-family:"Liberation Sans",sans-serif;font-size:8.3px;line-height:13px;color:#6a6a6a;letter-spacing:-0.284px;'>Düzenleme</div>
<svg class="a" style="left:943.50px;top:233.50px;" width="7.00" height="5.00" viewBox="0 0 7.00 5.00"><path d="M.6 4.200l2.900-3 2.900 3" stroke="#555" stroke-width="1.200" fill="none"/></svg>
<div class="a " style="left:4.00px;top:241.20px;width:953.20px;height:389.20px;background:#e6e6e6"></div>
<div class="a " style="left:207.20px;top:243.70px;width:10.60px;height:384.70px;background:#d9d9d9"></div>
<div class="a " style="left:207.20px;top:243.70px;width:10.60px;height:10.10px;background:#fff;border:1px solid #c9c9c9"></div>
<svg class="a" style="left:209.70px;top:247.15px;" width="5.60" height="3.20" viewBox="0 0 5.60 3.20"><path d="M0 3l2.800-3 2.800 3z" fill="#777"/></svg>
<div class="a " style="left:207.20px;top:253.80px;width:10.60px;height:13.00px;background:#fff;border:1px solid #c9c9c9;border-top:0"></div>
<div class="a " style="left:207.20px;top:618.60px;width:10.60px;height:9.80px;background:#fff;border:1px solid #c9c9c9"></div>
<svg class="a" style="left:209.70px;top:622.10px;" width="5.60" height="3.20" viewBox="0 0 5.60 3.20"><path d="M0 0h5.600l-2.800 3z" fill="#777"/></svg>
<div class="a " style="left:220.00px;top:243.00px;width:1.00px;height:387.00px;background:#cfcfcf"></div>
<div class="t" style='left:13.00px;top:252.90px;font-family:"Liberation Sans",sans-serif;font-size:8.6px;line-height:13px;color:#555;letter-spacing:-0.581px;'>1</div>
<div class="a " style="left:23.30px;top:256.00px;width:168.00px;height:125.60px;overflow:hidden;background:#000">
<svg class="a" style="left:0;top:0" width="168" height="126" viewBox="0 0 168 126"><rect width="168" height="126" fill="#000"/><defs><filter id="bw" x="-10%" y="-10%" width="120%" height="120%"><feGaussianBlur stdDeviation=".5"/></filter><filter id="bl1" x="-10%" y="-10%" width="120%" height="120%"><feGaussianBlur stdDeviation=".5"/></filter><clipPath id="cw"><path d="M37 16h95v50l-3 22h-38l-4-8h-10l-4 8h-33l-3-22z"/></clipPath></defs><g filter="url(#bl1)"><path d="M0.00 -14.00L2.24 -9.80L5.04 -11.20L4.62 -5.04L8.68 -8.68L9.52 -6.44L13.30 -7.00L11.76 -2.80L13.72 -1.12L8.12 3.08L9.24 5.60L1.40 4.76L0.70 13.30L-0.70 13.30L-1.40 4.76L-9.24 5.60L-8.12 3.08L-13.72 -1.12L-11.76 -2.80L-13.30 -7.00L-9.52 -6.44L-8.68 -8.68L-4.62 -5.04L-5.04 -11.20L-2.24 -9.80Z" transform="translate(7.0 6.0) rotate(150)" fill="#6a2407" opacity="1.00" stroke="#6a2407" stroke-width="1.0" stroke-linejoin="round"/><path d="M0.00 -13.00L2.08 -9.10L4.68 -10.40L4.29 -4.68L8.06 -8.06L8.84 -5.98L12.35 -6.50L10.92 -2.60L12.74 -1.04L7.54 2.86L8.58 5.20L1.30 4.42L0.65 12.35L-0.65 12.35L-1.30 4.42L-8.58 5.20L-7.54 2.86L-12.74 -1.04L-10.92 -2.60L-12.35 -6.50L-8.84 -5.98L-8.06 -8.06L-4.29 -4.68L-4.68 -10.40L-2.08 -9.10Z" transform="translate(9.0 50.0) rotate(80)" fill="#6a2407" opacity="1.00" stroke="#6a2407" stroke-width="0.9" stroke-linejoin="round"/><path d="M0.00 -12.00L1.92 -8.40L4.32 -9.60L3.96 -4.32L7.44 -7.44L8.16 -5.52L11.40 -6.00L10.08 -2.40L11.76 -0.96L6.96 2.64L7.92 4.80L1.20 4.08L0.60 11.40L-0.60 11.40L-1.20 4.08L-7.92 4.80L-6.96 2.64L-11.76 -0.96L-10.08 -2.40L-11.40 -6.00L-8.16 -5.52L-7.44 -7.44L-3.96 -4.32L-4.32 -9.60L-1.92 -8.40Z" transform="translate(5.0 92.0) rotate(30)" fill="#4a1804" opacity="1.00" stroke="#4a1804" stroke-width="0.8" stroke-linejoin="round"/><path d="M0.00 -12.00L1.92 -8.40L4.32 -9.60L3.96 -4.32L7.44 -7.44L8.16 -5.52L11.40 -6.00L10.08 -2.40L11.76 -0.96L6.96 2.64L7.92 4.80L1.20 4.08L0.60 11.40L-0.60 11.40L-1.20 4.08L-7.92 4.80L-6.96 2.64L-11.76 -0.96L-10.08 -2.40L-11.40 -6.00L-8.16 -5.52L-7.44 -7.44L-3.96 -4.32L-4.32 -9.60L-1.92 -8.40Z" transform="translate(11.0 118.0) rotate(200)" fill="#6a2407" opacity="1.00" stroke="#6a2407" stroke-width="0.8" stroke-linejoin="round"/><path d="M0.00 -13.00L2.08 -9.10L4.68 -10.40L4.29 -4.68L8.06 -8.06L8.84 -5.98L12.35 -6.50L10.92 -2.60L12.74 -1.04L7.54 2.86L8.58 5.20L1.30 4.42L0.65 12.35L-0.65 12.35L-1.30 4.42L-8.58 5.20L-7.54 2.86L-12.74 -1.04L-10.92 -2.60L-12.35 -6.50L-8.84 -5.98L-8.06 -8.06L-4.29 -4.68L-4.68 -10.40L-2.08 -9.10Z" transform="translate(160.0 9.0) rotate(200)" fill="#6a2407" opacity="1.00" stroke="#6a2407" stroke-width="0.9" stroke-linejoin="round"/><path d="M0.00 -14.00L2.24 -9.80L5.04 -11.20L4.62 -5.04L8.68 -8.68L9.52 -6.44L13.30 -7.00L11.76 -2.80L13.72 -1.12L8.12 3.08L9.24 5.60L1.40 4.76L0.70 13.30L-0.70 13.30L-1.40 4.76L-9.24 5.60L-8.12 3.08L-13.72 -1.12L-11.76 -2.80L-13.30 -7.00L-9.52 -6.44L-8.68 -8.68L-4.62 -5.04L-5.04 -11.20L-2.24 -9.80Z" transform="translate(151.0 44.0) rotate(40)" fill="#6a2407" opacity="1.00" stroke="#6a2407" stroke-width="1.0" stroke-linejoin="round"/><path d="M0.00 -12.00L1.92 -8.40L4.32 -9.60L3.96 -4.32L7.44 -7.44L8.16 -5.52L11.40 -6.00L10.08 -2.40L11.76 -0.96L6.96 2.64L7.92 4.80L1.20 4.08L0.60 11.40L-0.60 11.40L-1.20 4.08L-7.92 4.80L-6.96 2.64L-11.76 -0.96L-10.08 -2.40L-11.40 -6.00L-8.16 -5.52L-7.44 -7.44L-3.96 -4.32L-4.32 -9.60L-1.92 -8.40Z" transform="translate(161.0 78.0) rotate(300)" fill="#4a1804" opacity="1.00" stroke="#4a1804" stroke-width="0.8" stroke-linejoin="round"/><path d="M0.00 -14.00L2.24 -9.80L5.04 -11.20L4.62 -5.04L8.68 -8.68L9.52 -6.44L13.30 -7.00L11.76 -2.80L13.72 -1.12L8.12 3.08L9.24 5.60L1.40 4.76L0.70 13.30L-0.70 13.30L-1.40 4.76L-9.24 5.60L-8.12 3.08L-13.72 -1.12L-11.76 -2.80L-13.30 -7.00L-9.52 -6.44L-8.68 -8.68L-4.62 -5.04L-5.04 -11.20L-2.24 -9.80Z" transform="translate(153.0 106.0) rotate(100)" fill="#6a2407" opacity="1.00" stroke="#6a2407" stroke-width="1.0" stroke-linejoin="round"/><path d="M0.00 -9.00L1.44 -6.30L3.24 -7.20L2.97 -3.24L5.58 -5.58L6.12 -4.14L8.55 -4.50L7.56 -1.80L8.82 -0.72L5.22 1.98L5.94 3.60L0.90 3.06L0.45 8.55L-0.45 8.55L-0.90 3.06L-5.94 3.60L-5.22 1.98L-8.82 -0.72L-7.56 -1.80L-8.55 -4.50L-6.12 -4.14L-5.58 -5.58L-2.97 -3.24L-3.24 -7.20L-1.44 -6.30Z" transform="translate(130.0 120.0) rotate(30)" fill="#4a1804" opacity="1.00" stroke="#4a1804" stroke-width="0.6" stroke-linejoin="round"/><path d="M0.00 -8.00L1.28 -5.60L2.88 -6.40L2.64 -2.88L4.96 -4.96L5.44 -3.68L7.60 -4.00L6.72 -1.60L7.84 -0.64L4.64 1.76L5.28 3.20L0.80 2.72L0.40 7.60L-0.40 7.60L-0.80 2.72L-5.28 3.20L-4.64 1.76L-7.84 -0.64L-6.72 -1.60L-7.60 -4.00L-5.44 -3.68L-4.96 -4.96L-2.64 -2.88L-2.88 -6.40L-1.28 -5.60Z" transform="translate(40.0 118.0) rotate(60)" fill="#4a1804" opacity="1.00" stroke="#4a1804" stroke-width="0.6" stroke-linejoin="round"/><path d="M0.00 -8.00L1.28 -5.60L2.88 -6.40L2.64 -2.88L4.96 -4.96L5.44 -3.68L7.60 -4.00L6.72 -1.60L7.84 -0.64L4.64 1.76L5.28 3.20L0.80 2.72L0.40 7.60L-0.40 7.60L-0.80 2.72L-5.28 3.20L-4.64 1.76L-7.84 -0.64L-6.72 -1.60L-7.60 -4.00L-5.44 -3.68L-4.96 -4.96L-2.64 -2.88L-2.88 -6.40L-1.28 -5.60Z" transform="translate(24.0 30.0) rotate(20)" fill="#4a1804" opacity="0.80" stroke="#4a1804" stroke-width="0.6" stroke-linejoin="round"/><path d="M0.00 -8.00L1.28 -5.60L2.88 -6.40L2.64 -2.88L4.96 -4.96L5.44 -3.68L7.60 -4.00L6.72 -1.60L7.84 -0.64L4.64 1.76L5.28 3.20L0.80 2.72L0.40 7.60L-0.40 7.60L-0.80 2.72L-5.28 3.20L-4.64 1.76L-7.84 -0.64L-6.72 -1.60L-7.60 -4.00L-5.44 -3.68L-4.96 -4.96L-2.64 -2.88L-2.88 -6.40L-1.28 -5.60Z" transform="translate(141.0 24.0) rotate(120)" fill="#4a1804" opacity="0.80" stroke="#4a1804" stroke-width="0.6" stroke-linejoin="round"/><path d="M0.00 -8.00L1.28 -5.60L2.88 -6.40L2.64 -2.88L4.96 -4.96L5.44 -3.68L7.60 -4.00L6.72 -1.60L7.84 -0.64L4.64 1.76L5.28 3.20L0.80 2.72L0.40 7.60L-0.40 7.60L-0.80 2.72L-5.28 3.20L-4.64 1.76L-7.84 -0.64L-6.72 -1.60L-7.60 -4.00L-5.44 -3.68L-4.96 -4.96L-2.64 -2.88L-2.88 -6.40L-1.28 -5.60Z" transform="translate(20.0 72.0) rotate(120)" fill="#4a1804" opacity="0.80" stroke="#4a1804" stroke-width="0.6" stroke-linejoin="round"/><path d="M0.00 -9.00L1.44 -6.30L3.24 -7.20L2.97 -3.24L5.58 -5.58L6.12 -4.14L8.55 -4.50L7.56 -1.80L8.82 -0.72L5.22 1.98L5.94 3.60L0.90 3.06L0.45 8.55L-0.45 8.55L-0.90 3.06L-5.94 3.60L-5.22 1.98L-8.82 -0.72L-7.56 -1.80L-8.55 -4.50L-6.12 -4.14L-5.58 -5.58L-2.97 -3.24L-3.24 -7.20L-1.44 -6.30Z" transform="translate(146.0 72.0) rotate(10)" fill="#6a2407" opacity="0.90" stroke="#6a2407" stroke-width="0.6" stroke-linejoin="round"/></g><g filter="url(#bw)"><g clip-path="url(#cw)"><rect x="36" y="15" width="97" height="75" fill="#585858"/><rect x="79.5" y="56.3" width="6.6" height="1.100" fill="#d6d6d6"/><rect x="79.5" y="77.6" width="2.9" height="1.100" fill="#1a1a1a"/><rect x="81.7" y="60.2" width="2.9" height="1.100" fill="#d6d6d6"/><rect x="65.5" y="22.5" width="6.0" height="1.100" fill="#808080"/><rect x="96.6" y="58.9" width="4.0" height="1.100" fill="#d6d6d6"/><rect x="98.5" y="60.3" width="2.8" height="1.100" fill="#bdbdbd"/><rect x="115.2" y="20.5" width="2.2" height="1.100" fill="#9a9a9a"/><rect x="93.4" y="72.0" width="3.6" height="1.100" fill="#1a1a1a"/><rect x="116.2" y="53.4" width="5.2" height="1.100" fill="#d6d6d6"/><rect x="37.4" y="22.1" width="5.3" height="1.100" fill="#d6d6d6"/><rect x="130.8" y="87.7" width="6.2" height="1.100" fill="#808080"/><rect x="60.9" y="70.6" width="4.6" height="1.100" fill="#bdbdbd"/><rect x="43.6" y="71.2" width="4.0" height="1.100" fill="#2a2a2a"/><rect x="73.3" y="85.0" width="6.2" height="1.100" fill="#bdbdbd"/><rect x="57.1" y="82.7" width="2.3" height="1.100" fill="#d6d6d6"/><rect x="129.2" y="44.6" width="2.4" height="1.100" fill="#808080"/><rect x="55.7" y="64.6" width="3.7" height="1.100" fill="#2a2a2a"/><rect x="68.3" y="85.4" width="5.8" height="1.100" fill="#bdbdbd"/><rect x="49.7" y="66.9" width="2.1" height="1.100" fill="#d6d6d6"/><rect x="111.9" y="28.8" width="4.8" height="1.100" fill="#d6d6d6"/><rect x="84.8" y="86.9" width="5.8" height="1.100" fill="#d6d6d6"/><rect x="97.5" y="24.4" width="4.1" height="1.100" fill="#9a9a9a"/><rect x="37.0" y="78.2" width="6.9" height="1.100" fill="#1a1a1a"/><rect x="65.6" y="79.7" width="3.1" height="1.100" fill="#d6d6d6"/><rect x="130.6" y="59.3" width="4.9" height="1.100" fill="#bdbdbd"/><rect x="130.0" y="31.4" width="3.3" height="1.100" fill="#1a1a1a"/><rect x="67.9" y="37.3" width="2.4" height="1.100" fill="#bdbdbd"/><rect x="56.6" y="61.8" width="2.1" height="1.100" fill="#2a2a2a"/><rect x="71.9" y="48.6" width="6.8" height="1.100" fill="#d6d6d6"/><rect x="115.2" y="25.8" width="3.9" height="1.100" fill="#808080"/><rect x="51.5" y="81.4" width="6.1" height="1.100" fill="#9a9a9a"/><rect x="105.2" y="27.4" width="5.1" height="1.100" fill="#1a1a1a"/><rect x="55.5" y="84.4" width="6.4" height="1.100" fill="#1a1a1a"/><rect x="44.4" y="19.4" width="2.5" height="1.100" fill="#1a1a1a"/><rect x="127.5" y="33.2" width="5.5" height="1.100" fill="#2a2a2a"/><rect x="76.6" y="81.1" width="4.5" height="1.100" fill="#1a1a1a"/><rect x="53.5" y="67.9" width="2.3" height="1.100" fill="#9a9a9a"/><rect x="82.1" y="63.1" width="5.1" height="1.100" fill="#bdbdbd"/><rect x="63.3" y="82.0" width="3.0" height="1.100" fill="#bdbdbd"/><rect x="43.5" y="45.6" width="3.2" height="1.100" fill="#bdbdbd"/><rect x="53.6" y="42.6" width="4.9" height="1.100" fill="#9a9a9a"/><rect x="45.7" y="26.0" width="4.3" height="1.100" fill="#2a2a2a"/><rect x="98.8" y="65.8" width="4.9" height="1.100" fill="#9a9a9a"/><rect x="92.4" y="82.5" width="4.4" height="1.100" fill="#2a2a2a"/><rect x="102.9" y="85.3" width="2.1" height="1.100" fill="#808080"/><rect x="44.0" y="20.8" width="3.6" height="1.100" fill="#9a9a9a"/><rect x="130.9" y="21.4" width="4.7" height="1.100" fill="#808080"/><rect x="41.2" y="83.4" width="5.7" height="1.100" fill="#9a9a9a"/><rect x="111.6" y="81.9" width="3.8" height="1.100" fill="#808080"/><rect x="81.5" y="21.6" width="6.3" height="1.100" fill="#bdbdbd"/><rect x="118.2" y="57.2" width="5.1" height="1.100" fill="#d6d6d6"/><rect x="72.6" y="16.9" width="2.4" height="1.100" fill="#bdbdbd"/><rect x="97.1" y="87.5" width="6.4" height="1.100" fill="#808080"/><rect x="68.0" y="83.3" width="5.5" height="1.100" fill="#d6d6d6"/><rect x="78.4" y="76.4" width="2.4" height="1.100" fill="#1a1a1a"/><rect x="39.8" y="59.3" width="4.4" height="1.100" fill="#9a9a9a"/><rect x="127.0" y="24.1" width="5.9" height="1.100" fill="#808080"/><rect x="123.5" y="34.4" width="2.1" height="1.100" fill="#2a2a2a"/><rect x="50.5" y="60.0" width="4.6" height="1.100" fill="#2a2a2a"/><rect x="99.0" y="47.8" width="6.5" height="1.100" fill="#2a2a2a"/><rect x="75.0" y="34.0" width="5.2" height="1.100" fill="#9a9a9a"/><rect x="119.7" y="43.7" width="4.9" height="1.100" fill="#2a2a2a"/><rect x="56.7" y="25.7" width="3.8" height="1.100" fill="#bdbdbd"/><rect x="103.9" y="84.4" width="3.4" height="1.100" fill="#9a9a9a"/><rect x="47.6" y="49.9" width="6.6" height="1.100" fill="#d6d6d6"/><rect x="73.0" y="53.4" width="5.4" height="1.100" fill="#808080"/><rect x="115.9" y="86.7" width="4.3" height="1.100" fill="#bdbdbd"/><rect x="114.9" y="36.0" width="5.0" height="1.100" fill="#808080"/><rect x="103.6" y="57.1" width="3.5" height="1.100" fill="#1a1a1a"/><rect x="38.8" y="25.8" width="4.3" height="1.100" fill="#bdbdbd"/><rect x="109.3" y="35.2" width="5.9" height="1.100" fill="#bdbdbd"/><rect x="129.5" y="24.3" width="2.5" height="1.100" fill="#1a1a1a"/><rect x="98.6" y="74.1" width="6.8" height="1.100" fill="#808080"/><rect x="55.6" y="75.3" width="3.3" height="1.100" fill="#808080"/><rect x="38.0" y="50.0" width="5.6" height="1.100" fill="#9a9a9a"/><rect x="58.3" y="72.1" width="4.7" height="1.100" fill="#1a1a1a"/><rect x="84.0" y="87.8" width="2.8" height="1.100" fill="#808080"/><rect x="122.2" y="22.3" width="6.7" height="1.100" fill="#808080"/><rect x="73.5" y="48.4" width="3.0" height="1.100" fill="#bdbdbd"/><rect x="72.4" y="57.0" width="6.4" height="1.100" fill="#2a2a2a"/><rect x="80.6" y="62.9" width="3.0" height="1.100" fill="#808080"/><rect x="118.4" y="73.5" width="6.6" height="1.100" fill="#bdbdbd"/><rect x="57.0" y="80.8" width="6.9" height="1.100" fill="#2a2a2a"/><rect x="87.5" y="72.9" width="3.6" height="1.100" fill="#808080"/><rect x="117.4" y="41.1" width="2.4" height="1.100" fill="#d6d6d6"/><rect x="69.2" y="46.3" width="3.4" height="1.100" fill="#bdbdbd"/><rect x="57.5" y="78.5" width="4.1" height="1.100" fill="#bdbdbd"/><rect x="53.3" y="40.1" width="5.9" height="1.100" fill="#9a9a9a"/><rect x="81.2" y="88.0" width="6.5" height="1.100" fill="#1a1a1a"/><rect x="116.0" y="65.6" width="6.7" height="1.100" fill="#d6d6d6"/><rect x="91.4" y="65.6" width="5.8" height="1.100" fill="#d6d6d6"/><rect x="86.5" y="36.9" width="5.6" height="1.100" fill="#808080"/><rect x="52.4" y="53.0" width="6.5" height="1.100" fill="#2a2a2a"/><rect x="66.3" y="43.4" width="6.2" height="1.100" fill="#1a1a1a"/><rect x="56.6" y="77.3" width="6.8" height="1.100" fill="#1a1a1a"/><rect x="62.7" y="51.8" width="4.1" height="1.100" fill="#bdbdbd"/><rect x="84.3" y="59.6" width="2.1" height="1.100" fill="#bdbdbd"/><rect x="85.5" y="44.8" width="6.0" height="1.100" fill="#1a1a1a"/><rect x="48.5" y="22.7" width="2.8" height="1.100" fill="#1a1a1a"/><rect x="80.1" y="82.3" width="6.0" height="1.100" fill="#d6d6d6"/><rect x="62.3" y="50.1" width="2.6" height="1.100" fill="#d6d6d6"/><rect x="121.7" y="83.4" width="6.6" height="1.100" fill="#1a1a1a"/><rect x="66.8" y="29.8" width="5.1" height="1.100" fill="#2a2a2a"/><rect x="49.2" y="72.1" width="2.1" height="1.100" fill="#9a9a9a"/><rect x="51.6" y="16.9" width="3.4" height="1.100" fill="#808080"/><rect x="70.4" y="60.6" width="2.5" height="1.100" fill="#808080"/><rect x="91.7" y="77.3" width="5.1" height="1.100" fill="#808080"/><rect x="55.6" y="54.2" width="4.2" height="1.100" fill="#d6d6d6"/><rect x="96.5" y="75.4" width="5.1" height="1.100" fill="#1a1a1a"/><rect x="56.2" y="61.5" width="5.2" height="1.100" fill="#1a1a1a"/><rect x="57.3" y="55.1" width="4.9" height="1.100" fill="#9a9a9a"/><rect x="58.9" y="69.3" width="6.1" height="1.100" fill="#9a9a9a"/><rect x="66.7" y="38.7" width="6.6" height="1.100" fill="#9a9a9a"/><rect x="110.2" y="30.0" width="2.5" height="1.100" fill="#9a9a9a"/><rect x="49.5" y="22.3" width="3.9" height="1.100" fill="#d6d6d6"/><rect x="115.2" y="46.4" width="5.9" height="1.100" fill="#9a9a9a"/><rect x="55.9" y="61.2" width="6.0" height="1.100" fill="#bdbdbd"/><rect x="55.9" y="65.1" width="6.6" height="1.100" fill="#2a2a2a"/><rect x="47.8" y="52.4" width="5.8" height="1.100" fill="#1a1a1a"/><rect x="130.9" y="76.0" width="6.0" height="1.100" fill="#d6d6d6"/><rect x="47.0" y="18.7" width="4.8" height="1.100" fill="#1a1a1a"/><rect x="122.1" y="50.7" width="2.9" height="1.100" fill="#bdbdbd"/><rect x="56.2" y="76.5" width="7.0" height="1.100" fill="#808080"/><rect x="46.0" y="20.5" width="6.8" height="1.100" fill="#d6d6d6"/><rect x="44.3" y="23.0" width="4.0" height="1.100" fill="#d6d6d6"/><rect x="85.4" y="47.0" width="5.0" height="1.100" fill="#bdbdbd"/><rect x="96.6" y="18.9" width="3.0" height="1.100" fill="#d6d6d6"/><rect x="79.7" y="69.2" width="4.0" height="1.100" fill="#9a9a9a"/><rect x="93.9" y="22.8" width="6.0" height="1.100" fill="#2a2a2a"/><rect x="121.0" y="73.7" width="5.5" height="1.100" fill="#808080"/><rect x="125.3" y="57.0" width="3.0" height="1.100" fill="#1a1a1a"/><rect x="129.4" y="73.9" width="3.3" height="1.100" fill="#bdbdbd"/><rect x="107.0" y="72.0" width="6.1" height="1.100" fill="#d6d6d6"/><rect x="49.5" y="39.8" width="4.7" height="1.100" fill="#2a2a2a"/><rect x="109.1" y="71.1" width="4.0" height="1.100" fill="#808080"/><rect x="54.4" y="73.4" width="3.5" height="1.100" fill="#bdbdbd"/><rect x="38.0" y="41.6" width="5.2" height="1.100" fill="#1a1a1a"/><rect x="41.7" y="35.7" width="6.8" height="1.100" fill="#2a2a2a"/><rect x="68.8" y="63.5" width="4.8" height="1.100" fill="#1a1a1a"/><rect x="44.2" y="53.1" width="4.5" height="1.100" fill="#9a9a9a"/><rect x="102.9" y="70.8" width="6.9" height="1.100" fill="#bdbdbd"/><rect x="47.8" y="23.8" width="3.2" height="1.100" fill="#d6d6d6"/><rect x="74.7" y="19.6" width="3.0" height="1.100" fill="#d6d6d6"/><rect x="38.0" y="34.6" width="3.4" height="1.100" fill="#2a2a2a"/><rect x="88.7" y="52.6" width="6.8" height="1.100" fill="#1a1a1a"/><rect x="116.6" y="23.2" width="4.2" height="1.100" fill="#808080"/><rect x="44.2" y="59.0" width="5.8" height="1.100" fill="#bdbdbd"/><rect x="73.3" y="83.6" width="3.9" height="1.100" fill="#9a9a9a"/><rect x="117.4" y="55.0" width="5.0" height="1.100" fill="#d6d6d6"/><rect x="125.9" y="46.3" width="4.6" height="1.100" fill="#1a1a1a"/><rect x="66.4" y="54.2" width="4.4" height="1.100" fill="#2a2a2a"/><rect x="89.7" y="36.4" width="5.6" height="1.100" fill="#2a2a2a"/><rect x="39.5" y="71.6" width="4.9" height="1.100" fill="#808080"/><rect x="51.7" y="70.3" width="3.9" height="1.100" fill="#2a2a2a"/><rect x="107.3" y="19.6" width="6.9" height="1.100" fill="#2a2a2a"/><rect x="43.9" y="81.2" width="4.1" height="1.100" fill="#d6d6d6"/><rect x="60.6" y="70.4" width="2.2" height="1.100" fill="#bdbdbd"/><rect x="125.1" y="68.0" width="4.3" height="1.100" fill="#9a9a9a"/><rect x="93.7" y="24.3" width="5.1" height="1.100" fill="#d6d6d6"/><rect x="48.1" y="78.0" width="3.8" height="1.100" fill="#9a9a9a"/><rect x="48.7" y="47.9" width="5.3" height="1.100" fill="#d6d6d6"/><rect x="93.5" y="62.1" width="5.4" height="1.100" fill="#2a2a2a"/><rect x="110.1" y="54.2" width="7.0" height="1.100" fill="#2a2a2a"/><rect x="106.0" y="33.2" width="2.6" height="1.100" fill="#2a2a2a"/><rect x="110.7" y="61.0" width="3.8" height="1.100" fill="#2a2a2a"/><rect x="94.3" y="68.2" width="5.5" height="1.100" fill="#9a9a9a"/><rect x="96.5" y="70.2" width="2.9" height="1.100" fill="#9a9a9a"/><rect x="84.2" y="63.0" width="3.0" height="1.100" fill="#808080"/><rect x="40.7" y="20.4" width="3.4" height="1.100" fill="#d6d6d6"/><rect x="39.5" y="18.7" width="3.1" height="1.100" fill="#2a2a2a"/><rect x="43.8" y="22.2" width="5.4" height="1.100" fill="#1a1a1a"/><rect x="59.1" y="86.7" width="4.4" height="1.100" fill="#2a2a2a"/><rect x="56.8" y="40.7" width="5.7" height="1.100" fill="#bdbdbd"/><rect x="112.4" y="48.2" width="6.1" height="1.100" fill="#9a9a9a"/><rect x="78.8" y="69.8" width="4.0" height="1.100" fill="#9a9a9a"/><rect x="71.7" y="63.1" width="6.9" height="1.100" fill="#2a2a2a"/><rect x="64.3" y="70.6" width="6.1" height="1.100" fill="#9a9a9a"/><rect x="77.2" y="42.6" width="2.5" height="1.100" fill="#2a2a2a"/><rect x="44.4" y="22.0" width="4.8" height="1.100" fill="#d6d6d6"/><rect x="113.6" y="49.4" width="6.1" height="1.100" fill="#bdbdbd"/><rect x="44.2" y="31.4" width="5.3" height="1.100" fill="#bdbdbd"/><rect x="102.3" y="51.6" width="5.8" height="1.100" fill="#2a2a2a"/><rect x="63.6" y="26.3" width="3.8" height="1.100" fill="#808080"/><rect x="67.7" y="81.3" width="3.6" height="1.100" fill="#d6d6d6"/><rect x="90.5" y="82.1" width="6.7" height="1.100" fill="#2a2a2a"/><rect x="78.2" y="73.8" width="3.5" height="1.100" fill="#2a2a2a"/><rect x="57.8" y="85.7" width="5.6" height="1.100" fill="#1a1a1a"/><rect x="60.3" y="42.0" width="3.8" height="1.100" fill="#2a2a2a"/><rect x="100.6" y="58.1" width="6.0" height="1.100" fill="#808080"/><rect x="90.0" y="73.4" width="4.7" height="1.100" fill="#1a1a1a"/><rect x="89.9" y="28.7" width="5.8" height="1.100" fill="#2a2a2a"/><rect x="113.3" y="31.9" width="2.3" height="1.100" fill="#9a9a9a"/><rect x="90.3" y="85.6" width="5.3" height="1.100" fill="#d6d6d6"/><rect x="43.0" y="55.4" width="5.9" height="1.100" fill="#bdbdbd"/><rect x="68.4" y="35.7" width="2.5" height="1.100" fill="#2a2a2a"/><rect x="45.0" y="61.7" width="2.7" height="1.100" fill="#808080"/><rect x="113.7" y="46.4" width="5.6" height="1.100" fill="#d6d6d6"/><rect x="108.9" y="53.6" width="5.8" height="1.100" fill="#d6d6d6"/><rect x="69.9" y="74.1" width="3.7" height="1.100" fill="#9a9a9a"/><rect x="83.4" y="54.7" width="5.6" height="1.100" fill="#808080"/><rect x="95.1" y="19.3" width="5.8" height="1.100" fill="#808080"/><rect x="69.8" y="16.3" width="3.9" height="1.100" fill="#bdbdbd"/><rect x="120.5" y="85.0" width="5.2" height="1.100" fill="#1a1a1a"/><rect x="71.0" y="16.7" width="2.5" height="1.100" fill="#d6d6d6"/><rect x="123.1" y="33.7" width="2.8" height="1.100" fill="#808080"/><rect x="72.3" y="28.1" width="3.0" height="1.100" fill="#d6d6d6"/><rect x="86.7" y="35.7" width="6.4" height="1.100" fill="#d6d6d6"/><rect x="66.0" y="24.3" width="5.2" height="1.100" fill="#9a9a9a"/><rect x="122.7" y="70.2" width="2.1" height="1.100" fill="#d6d6d6"/><rect x="122.5" y="18.6" width="2.5" height="1.100" fill="#9a9a9a"/><rect x="70.8" y="58.4" width="5.0" height="1.100" fill="#d6d6d6"/><rect x="92.9" y="32.1" width="2.9" height="1.100" fill="#2a2a2a"/><rect x="74.8" y="81.6" width="6.7" height="1.100" fill="#808080"/><rect x="88.5" y="74.8" width="4.4" height="1.100" fill="#2a2a2a"/><rect x="82.6" y="45.0" width="6.8" height="1.100" fill="#808080"/><rect x="88.5" y="84.9" width="4.4" height="1.100" fill="#9a9a9a"/><rect x="74.5" y="31.7" width="2.7" height="1.100" fill="#d6d6d6"/><rect x="128.7" y="73.2" width="5.9" height="1.100" fill="#bdbdbd"/><rect x="98.8" y="33.1" width="2.1" height="1.100" fill="#d6d6d6"/><rect x="122.1" y="48.4" width="3.2" height="1.100" fill="#d6d6d6"/><rect x="94.0" y="27.3" width="2.8" height="1.100" fill="#2a2a2a"/><rect x="50.6" y="81.4" width="6.1" height="1.100" fill="#9a9a9a"/><rect x="96.9" y="87.5" width="3.3" height="1.100" fill="#1a1a1a"/><rect x="42.0" y="57.2" width="2.9" height="1.100" fill="#9a9a9a"/><rect x="114.2" y="76.9" width="6.1" height="1.100" fill="#bdbdbd"/><rect x="70.1" y="60.3" width="4.6" height="1.100" fill="#d6d6d6"/><rect x="102.2" y="22.0" width="5.7" height="1.100" fill="#1a1a1a"/><rect x="117.6" y="37.9" width="5.9" height="1.100" fill="#d6d6d6"/><rect x="55.1" y="65.1" width="5.9" height="1.100" fill="#d6d6d6"/><rect x="56.6" y="55.1" width="4.6" height="1.100" fill="#9a9a9a"/><rect x="126.0" y="85.4" width="3.6" height="1.100" fill="#d6d6d6"/><rect x="44.1" y="38.0" width="4.3" height="1.100" fill="#808080"/><rect x="43.3" y="21.4" width="2.7" height="1.100" fill="#808080"/><rect x="74.1" y="49.2" width="6.8" height="1.100" fill="#bdbdbd"/><rect x="98.5" y="16.9" width="3.9" height="1.100" fill="#808080"/><rect x="81.7" y="37.1" width="2.6" height="1.100" fill="#bdbdbd"/><rect x="117.5" y="76.8" width="5.6" height="1.100" fill="#1a1a1a"/><rect x="51.3" y="61.2" width="6.7" height="1.100" fill="#808080"/><rect x="65.0" y="40.3" width="4.0" height="1.100" fill="#808080"/><rect x="45.2" y="29.6" width="3.9" height="1.100" fill="#bdbdbd"/><rect x="68.0" y="84.0" width="4.8" height="1.100" fill="#808080"/><rect x="97.2" y="48.2" width="3.9" height="1.100" fill="#bdbdbd"/><rect x="50.2" y="22.8" width="5.4" height="1.100" fill="#808080"/><rect x="53.8" y="29.9" width="2.2" height="1.100" fill="#d6d6d6"/><rect x="92.7" y="22.5" width="3.1" height="1.100" fill="#9a9a9a"/><rect x="129.8" y="47.2" width="5.9" height="1.100" fill="#2a2a2a"/><rect x="123.5" y="46.7" width="4.6" height="1.100" fill="#808080"/><rect x="56.3" y="26.7" width="5.5" height="1.100" fill="#d6d6d6"/><rect x="68.2" y="45.7" width="2.1" height="1.100" fill="#d6d6d6"/><rect x="94.6" y="38.9" width="5.9" height="1.100" fill="#9a9a9a"/><rect x="99.1" y="59.8" width="2.1" height="1.100" fill="#2a2a2a"/><rect x="54.7" y="38.1" width="4.2" height="1.100" fill="#1a1a1a"/><rect x="72.5" y="52.7" width="5.9" height="1.100" fill="#bdbdbd"/><rect x="94.5" y="27.4" width="5.8" height="1.100" fill="#2a2a2a"/><rect x="88.5" y="41.4" width="4.5" height="1.100" fill="#9a9a9a"/><rect x="91.0" y="30.3" width="6.7" height="1.100" fill="#808080"/><rect x="103.4" y="83.4" width="4.8" height="1.100" fill="#bdbdbd"/><rect x="95.9" y="30.2" width="2.4" height="1.100" fill="#9a9a9a"/><rect x="81.9" y="46.1" width="3.7" height="1.100" fill="#bdbdbd"/><rect x="124.3" y="42.0" width="4.3" height="1.100" fill="#bdbdbd"/></g><path d="M40 44c-4-8 2-16 10-17 2-8 14-12 22-8 8-5 20-4 26 2 10-3 22 2 24 10 8 3 9 14 2 19-4 6-14 8-22 5-6 5-16 5-22 1-6 5-18 5-24 0-8 1-14-4-16-12z" fill="#27600f"/><path d="M52 64c-5-1-8-6-5-10 5-3 14-2 18 2 0 5-6 9-13 8z" fill="#27600f"/><rect x="48.7" y="45.3" width="3.0" height="1.100" fill="#5aa838"/><rect x="52.7" y="35.8" width="4.2" height="1.100" fill="#3a8018"/><rect x="100.8" y="55.8" width="5.6" height="1.100" fill="#3a8018"/><rect x="71.2" y="35.6" width="5.3" height="1.100" fill="#3a8018"/><rect x="72.9" y="28.4" width="5.0" height="1.100" fill="#3a8018"/><rect x="91.8" y="32.1" width="4.2" height="1.100" fill="#4c9a2a"/><rect x="57.4" y="43.8" width="5.1" height="1.100" fill="#1d4a0c"/><rect x="70.8" y="56.1" width="5.0" height="1.100" fill="#143808"/><rect x="57.8" y="28.9" width="5.1" height="1.100" fill="#1d4a0c"/><rect x="92.0" y="53.7" width="2.6" height="1.100" fill="#143808"/><rect x="102.7" y="49.1" width="3.3" height="1.100" fill="#1d4a0c"/><rect x="80.3" y="55.8" width="3.3" height="1.100" fill="#4c9a2a"/><rect x="76.4" y="21.7" width="3.6" height="1.100" fill="#143808"/><rect x="59.7" y="31.5" width="3.6" height="1.100" fill="#5aa838"/><rect x="110.0" y="31.8" width="3.6" height="1.100" fill="#3a8018"/><rect x="41.3" y="41.9" width="5.4" height="1.100" fill="#143808"/><rect x="89.5" y="33.6" width="2.5" height="1.100" fill="#5aa838"/><rect x="68.3" y="53.3" width="3.7" height="1.100" fill="#4c9a2a"/><rect x="78.8" y="44.4" width="4.9" height="1.100" fill="#143808"/><rect x="79.3" y="23.9" width="5.0" height="1.100" fill="#3a8018"/><rect x="112.1" y="26.8" width="3.0" height="1.100" fill="#143808"/><rect x="84.9" y="59.6" width="5.9" height="1.100" fill="#143808"/><rect x="72.7" y="25.7" width="3.0" height="1.100" fill="#3a8018"/><rect x="60.5" y="23.0" width="5.5" height="1.100" fill="#3a8018"/><rect x="101.2" y="29.9" width="5.2" height="1.100" fill="#1d4a0c"/><rect x="66.9" y="29.0" width="2.5" height="1.100" fill="#4c9a2a"/><rect x="113.4" y="50.9" width="2.5" height="1.100" fill="#5aa838"/><rect x="57.9" y="33.5" width="3.2" height="1.100" fill="#3a8018"/><rect x="100.2" y="41.3" width="3.8" height="1.100" fill="#143808"/><rect x="93.6" y="27.9" width="3.4" height="1.100" fill="#5aa838"/><rect x="85.8" y="51.5" width="3.8" height="1.100" fill="#3a8018"/><rect x="72.5" y="53.9" width="5.7" height="1.100" fill="#143808"/><rect x="96.7" y="33.5" width="5.4" height="1.100" fill="#4c9a2a"/><rect x="95.9" y="58.1" width="3.4" height="1.100" fill="#143808"/><rect x="116.3" y="41.7" width="4.8" height="1.100" fill="#5aa838"/><rect x="92.9" y="55.9" width="2.8" height="1.100" fill="#4c9a2a"/><rect x="69.4" y="30.6" width="5.3" height="1.100" fill="#3a8018"/><rect x="107.2" y="27.0" width="2.5" height="1.100" fill="#143808"/><rect x="68.1" y="44.4" width="5.4" height="1.100" fill="#4c9a2a"/><rect x="78.4" y="31.0" width="2.7" height="1.100" fill="#1d4a0c"/><rect x="60.2" y="39.9" width="3.1" height="1.100" fill="#5aa838"/><rect x="107.1" y="29.3" width="2.9" height="1.100" fill="#3a8018"/><rect x="97.1" y="34.6" width="2.9" height="1.100" fill="#1d4a0c"/><rect x="75.0" y="35.1" width="5.9" height="1.100" fill="#143808"/><rect x="92.9" y="37.2" width="5.6" height="1.100" fill="#4c9a2a"/><rect x="64.8" y="33.4" width="3.0" height="1.100" fill="#5aa838"/><rect x="102.1" y="45.8" width="5.0" height="1.100" fill="#1d4a0c"/><rect x="98.5" y="56.2" width="2.1" height="1.100" fill="#1d4a0c"/><rect x="90.7" y="39.7" width="3.8" height="1.100" fill="#5aa838"/><rect x="52.7" y="53.4" width="4.0" height="1.100" fill="#1d4a0c"/><rect x="117.1" y="47.2" width="5.6" height="1.100" fill="#3a8018"/><rect x="62.7" y="24.4" width="4.1" height="1.100" fill="#5aa838"/><rect x="98.6" y="25.2" width="5.9" height="1.100" fill="#5aa838"/><rect x="100.1" y="56.5" width="2.7" height="1.100" fill="#5aa838"/><rect x="51.4" y="46.8" width="4.2" height="1.100" fill="#3a8018"/><rect x="91.5" y="21.8" width="2.9" height="1.100" fill="#143808"/><rect x="45.7" y="34.7" width="4.4" height="1.100" fill="#3a8018"/><rect x="114.7" y="43.6" width="4.9" height="1.100" fill="#5aa838"/><rect x="45.6" y="46.3" width="3.3" height="1.100" fill="#5aa838"/><rect x="112.4" y="41.6" width="3.7" height="1.100" fill="#143808"/><rect x="76.5" y="20.8" width="2.1" height="1.100" fill="#4c9a2a"/><rect x="109.5" y="31.3" width="4.2" height="1.100" fill="#1d4a0c"/><rect x="76.0" y="36.6" width="3.7" height="1.100" fill="#3a8018"/><rect x="98.3" y="23.7" width="5.1" height="1.100" fill="#5aa838"/><rect x="49.1" y="40.2" width="4.0" height="1.100" fill="#143808"/><rect x="82.5" y="48.4" width="4.8" height="1.100" fill="#5aa838"/><rect x="85.4" y="34.9" width="3.6" height="1.100" fill="#3a8018"/><rect x="71.8" y="23.3" width="5.8" height="1.100" fill="#1d4a0c"/><rect x="46.4" y="41.2" width="5.9" height="1.100" fill="#1d4a0c"/><rect x="82.0" y="24.8" width="5.9" height="1.100" fill="#4c9a2a"/><rect x="85.3" y="59.8" width="2.6" height="1.100" fill="#143808"/><rect x="55.9" y="35.0" width="5.7" height="1.100" fill="#4c9a2a"/><rect x="67.8" y="23.9" width="5.9" height="1.100" fill="#5aa838"/><rect x="85.7" y="50.5" width="4.2" height="1.100" fill="#1d4a0c"/><rect x="72.3" y="43.0" width="2.9" height="1.100" fill="#3a8018"/><rect x="61.4" y="57.8" width="4.4" height="1.100" fill="#4c9a2a"/><rect x="100.1" y="53.6" width="6.0" height="1.100" fill="#3a8018"/><rect x="46.4" y="31.8" width="5.5" height="1.100" fill="#1d4a0c"/><rect x="57.4" y="43.1" width="5.4" height="1.100" fill="#143808"/><rect x="76.3" y="43.2" width="3.7" height="1.100" fill="#1d4a0c"/><rect x="95.6" y="54.2" width="2.7" height="1.100" fill="#1d4a0c"/><rect x="56.8" y="49.5" width="5.0" height="1.100" fill="#143808"/><rect x="43.4" y="46.8" width="4.7" height="1.100" fill="#143808"/><rect x="90.3" y="52.5" width="2.3" height="1.100" fill="#3a8018"/><rect x="68.7" y="48.4" width="2.1" height="1.100" fill="#1d4a0c"/><rect x="81.4" y="25.0" width="4.3" height="1.100" fill="#1d4a0c"/><rect x="80.1" y="52.5" width="2.6" height="1.100" fill="#3a8018"/><rect x="96.4" y="47.8" width="5.4" height="1.100" fill="#4c9a2a"/><rect x="106.6" y="41.5" width="3.5" height="1.100" fill="#4c9a2a"/><rect x="98.8" y="29.7" width="3.0" height="1.100" fill="#5aa838"/><rect x="71.8" y="29.9" width="4.4" height="1.100" fill="#143808"/><rect x="98.8" y="42.1" width="4.4" height="1.100" fill="#4c9a2a"/><rect x="89.9" y="53.0" width="3.9" height="1.100" fill="#1d4a0c"/><rect x="52.1" y="38.3" width="3.3" height="1.100" fill="#143808"/><rect x="74.9" y="33.0" width="2.8" height="1.100" fill="#3a8018"/><rect x="55.5" y="36.9" width="2.5" height="1.100" fill="#5aa838"/><rect x="96.3" y="32.6" width="3.2" height="1.100" fill="#3a8018"/><rect x="71.0" y="34.9" width="5.4" height="1.100" fill="#143808"/><rect x="48.4" y="32.4" width="5.9" height="1.100" fill="#3a8018"/><rect x="77.2" y="35.4" width="5.4" height="1.100" fill="#5aa838"/><rect x="70.2" y="24.1" width="5.8" height="1.100" fill="#3a8018"/><rect x="86.2" y="56.6" width="2.4" height="1.100" fill="#143808"/><rect x="104.5" y="50.1" width="4.0" height="1.100" fill="#3a8018"/><rect x="75.4" y="57.2" width="2.9" height="1.100" fill="#143808"/><rect x="94.0" y="57.6" width="3.4" height="1.100" fill="#1d4a0c"/><rect x="47.1" y="37.7" width="5.6" height="1.100" fill="#1d4a0c"/><rect x="61.9" y="41.4" width="5.4" height="1.100" fill="#3a8018"/><rect x="81.0" y="37.0" width="3.6" height="1.100" fill="#3a8018"/><rect x="116.8" y="29.2" width="3.1" height="1.100" fill="#143808"/><rect x="50.9" y="40.5" width="3.9" height="1.100" fill="#3a8018"/><rect x="91.5" y="36.3" width="2.1" height="1.100" fill="#3a8018"/><rect x="107.6" y="30.1" width="3.0" height="1.100" fill="#1d4a0c"/><rect x="66.7" y="29.8" width="3.4" height="1.100" fill="#3a8018"/><rect x="117.7" y="43.4" width="2.9" height="1.100" fill="#4c9a2a"/><rect x="59.9" y="28.1" width="3.6" height="1.100" fill="#143808"/><rect x="93.1" y="42.1" width="3.9" height="1.100" fill="#143808"/><rect x="53.5" y="53.5" width="2.2" height="1.100" fill="#1d4a0c"/><rect x="74.1" y="30.0" width="4.0" height="1.100" fill="#143808"/><rect x="99.1" y="38.8" width="2.8" height="1.100" fill="#1d4a0c"/><rect x="82.0" y="49.8" width="4.1" height="1.100" fill="#5aa838"/><path d="M77 43l4 5 6-9 3 3-6 12 1 14 4 21h-17l5-20-2-12-8-9 3-4z" fill="#4a3018"/><path d="M80 48l3 18 1 20" stroke="#2a1a0c" stroke-width="1.200" fill="none"/></g></svg>
<div class="t" style='left:16.10px;top:0.00px;font-family:"DejaVu Sans","Liberation Sans",sans-serif;font-size:8.9px;line-height:14px;color:#8fd24f;letter-spacing:0.453px;font-weight:700;'>21. YÜZYILDA FEN EĞİTİMİ</div>
<div class="t" style='left:16.90px;top:92.10px;font-family:"DejaVu Sans","Liberation Sans",sans-serif;font-size:5.7px;line-height:9px;color:#e6e21c;letter-spacing:0.241px;font-weight:700;'>BİLİMSEL SÜREÇ BECERİLERİNİN ÖNEMİ</div>
<div class="t" style='left:44.20px;top:100.50px;font-family:"DejaVu Sans","Liberation Sans",sans-serif;font-size:5.7px;line-height:9px;color:#e6e21c;letter-spacing:0.078px;font-weight:700;'>Dr. Emine KAÇMAZOĞLU</div>
<div class="t" style='left:26.70px;top:108.70px;font-family:"DejaVu Sans","Liberation Sans",sans-serif;font-size:5.7px;line-height:9px;color:#e6e21c;letter-spacing:0.075px;font-weight:700;'>İnönü Üniversitesi Eğitim Fakültesi</div>
<div class="t" style='left:37.20px;top:13.20px;font-family:"Liberation Sans",sans-serif;font-size:8.4px;line-height:13px;color:#f2f2f2;letter-spacing:0.211px;'>STEM</div>
<div class="t" style='left:37.20px;top:19.60px;font-family:"Liberation Sans",sans-serif;font-size:7.6px;line-height:12px;color:#f2f2f2;letter-spacing:0.453px;'>Fen</div>
<div class="t" style='left:54.00px;top:22.50px;font-family:"Liberation Sans",sans-serif;font-size:7px;line-height:11px;color:#58a83a;transform-origin:0 50%;transform:scaleX(1.1415);'>Mühendislik</div>
<div class="t" style='left:114.50px;top:15.50px;font-family:"Liberation Sans",sans-serif;font-size:6px;line-height:10px;color:#f2f2f2;letter-spacing:0.076px;'>STEM</div>
<div class="t" style='left:82.20px;top:30.00px;font-family:"Liberation Sans",sans-serif;font-size:7.4px;line-height:12px;color:#58a83a;letter-spacing:0.476px;'>Matematik</div>
<div class="t" style='left:88.70px;top:37.60px;font-family:"Liberation Sans",sans-serif;font-size:6.4px;line-height:10px;color:#58a83a;letter-spacing:0.165px;'>Fen 21.yüzyıl</div>
<div class="t" style='left:41.70px;top:37.50px;font-family:"Liberation Sans",sans-serif;font-size:6.4px;line-height:10px;color:#58a83a;letter-spacing:0.078px;'>STEM</div>
<div class="t" style='left:44.20px;top:42.20px;font-family:"Liberation Sans",sans-serif;font-size:7.4px;line-height:12px;color:#58a83a;transform-origin:0 50%;transform:scaleX(1.1624);'>Üretim</div>
<div class="t" style='left:96.20px;top:49.00px;font-family:"Liberation Sans",sans-serif;font-size:5.4px;line-height:9px;color:#58a83a;transform-origin:0 50%;transform:scaleX(1.1389);'>Teknoloji</div>
<div class="t" style='left:47.00px;top:50.60px;font-family:"Liberation Sans",sans-serif;font-size:11px;line-height:16px;color:#58a83a;letter-spacing:1.066px;'>Fen</div>
<div class="t" style='left:93.40px;top:63.00px;font-family:"Liberation Sans",sans-serif;font-size:14px;line-height:20px;color:#fff;letter-spacing:-0.530px;'>STEM</div>
<div class="t" style='left:39.10px;top:64.20px;font-family:"Liberation Sans",sans-serif;font-size:6.4px;line-height:10px;color:#c9c9c9;transform-origin:0 50%;transform:scaleX(1.1685);'>Üretim</div>
<div class="t" style='left:39.10px;top:69.10px;font-family:"Liberation Sans",sans-serif;font-size:7px;line-height:11px;color:#c9c9c9;letter-spacing:0.394px;'>Teknoloji</div>
<div class="t" style='left:37.20px;top:75.10px;font-family:"Liberation Sans",sans-serif;font-size:7px;line-height:11px;color:#f2f2f2;letter-spacing:0.569px;'>Fen</div>
<div class="t" style='left:37.20px;top:80.40px;font-family:"Liberation Sans",sans-serif;font-size:6px;line-height:10px;color:#c9c9c9;transform-origin:0 50%;transform:scaleX(1.1666);'>Matematik</div>
<div class="t" style='left:94.70px;top:75.70px;font-family:"Liberation Sans",sans-serif;font-size:7px;line-height:11px;color:#c9c9c9;transform-origin:0 50%;transform:scaleX(1.3032);'>21.yüzyıl</div>
<div class="t" style='left:123.70px;top:60.00px;font-family:"Liberation Sans",sans-serif;font-size:5px;line-height:8px;color:#f2f2f2;letter-spacing:-0.313px;'>Fen</div>
<div class="t" style='left:113.70px;top:46.50px;font-family:"Liberation Sans",sans-serif;font-size:4.4px;line-height:8px;color:#c9c9c9;letter-spacing:0.051px;'>Teknoloji</div></div>
<div class="t" style='left:12.60px;top:393.10px;font-family:"Liberation Sans",sans-serif;font-size:8.6px;line-height:13px;color:#d04a22;letter-spacing:0.419px;'>2</div>
<div class="a " style="left:21.20px;top:394.40px;width:173.20px;height:129.50px;background:#d24a24"></div>
<div class="a " style="left:22.40px;top:395.50px;width:170.80px;height:127.30px;background:#f3d9cf"></div>
<div class="a" style="left:23.500px;top:396.500px;width:168.600px;height:125.200px;overflow:hidden;background:#000">
<div class="a" style="left:0;top:0;width:454px;height:340px;transform-origin:0 0;transform:scale(.3714,.3682)">
<svg class="a" style="left:0;top:0" width="454" height="340" viewBox="0 0 454 340"><rect width="454" height="340" fill="#000"/><defs><filter id="lb" x="-5%" y="-5%" width="110%" height="110%"><feGaussianBlur stdDeviation=".7"/></filter><filter id="lb2" x="-5%" y="-5%" width="110%" height="110%"><feGaussianBlur stdDeviation="1.600"/></filter></defs><g filter="url(#lb2)"><path d="M0.00 -21.00L3.36 -14.70L7.56 -16.80L6.93 -7.56L13.02 -13.02L14.28 -9.66L19.95 -10.50L17.64 -4.20L20.58 -1.68L12.18 4.62L13.86 8.40L2.10 7.14L1.05 19.95L-1.05 19.95L-2.10 7.14L-13.86 8.40L-12.18 4.62L-20.58 -1.68L-17.64 -4.20L-19.95 -10.50L-14.28 -9.66L-13.02 -13.02L-6.93 -7.56L-7.56 -16.80L-3.36 -14.70Z" transform="translate(57.4 39.4) rotate(40)" fill="#4a1602" opacity="1.00" stroke="#4a1602" stroke-width="1.5" stroke-linejoin="round"/><path d="M0.00 -18.00L2.88 -12.60L6.48 -14.40L5.94 -6.48L11.16 -11.16L12.24 -8.28L17.10 -9.00L15.12 -3.60L17.64 -1.44L10.44 3.96L11.88 7.20L1.80 6.12L0.90 17.10L-0.90 17.10L-1.80 6.12L-11.88 7.20L-10.44 3.96L-17.64 -1.44L-15.12 -3.60L-17.10 -9.00L-12.24 -8.28L-11.16 -11.16L-5.94 -6.48L-6.48 -14.40L-2.88 -12.60Z" transform="translate(6.0 141.0) rotate(-37)" fill="#4a1602" opacity="1.00" stroke="#4a1602" stroke-width="1.3" stroke-linejoin="round"/><path d="M0.00 -18.00L2.88 -12.60L6.48 -14.40L5.94 -6.48L11.16 -11.16L12.24 -8.28L17.10 -9.00L15.12 -3.60L17.64 -1.44L10.44 3.96L11.88 7.20L1.80 6.12L0.90 17.10L-0.90 17.10L-1.80 6.12L-11.88 7.20L-10.44 3.96L-17.64 -1.44L-15.12 -3.60L-17.10 -9.00L-12.24 -8.28L-11.16 -11.16L-5.94 -6.48L-6.48 -14.40L-2.88 -12.60Z" transform="translate(10.0 237.0) rotate(60)" fill="#2a0c02" opacity="1.00" stroke="#2a0c02" stroke-width="1.3" stroke-linejoin="round"/><path d="M0.00 -18.00L2.88 -12.60L6.48 -14.40L5.94 -6.48L11.16 -11.16L12.24 -8.28L17.10 -9.00L15.12 -3.60L17.64 -1.44L10.44 3.96L11.88 7.20L1.80 6.12L0.90 17.10L-0.90 17.10L-1.80 6.12L-11.88 7.20L-10.44 3.96L-17.64 -1.44L-15.12 -3.60L-17.10 -9.00L-12.24 -8.28L-11.16 -11.16L-5.94 -6.48L-6.48 -14.40L-2.88 -12.60Z" transform="translate(14.0 268.0) rotate(-35)" fill="#3a1203" opacity="1.00" stroke="#3a1203" stroke-width="1.3" stroke-linejoin="round"/><path d="M0.00 -20.00L3.20 -14.00L7.20 -16.00L6.60 -7.20L12.40 -12.40L13.60 -9.20L19.00 -10.00L16.80 -4.00L19.60 -1.60L11.60 4.40L13.20 8.00L2.00 6.80L1.00 19.00L-1.00 19.00L-2.00 6.80L-13.20 8.00L-11.60 4.40L-19.60 -1.60L-16.80 -4.00L-19.00 -10.00L-13.60 -9.20L-12.40 -12.40L-6.60 -7.20L-7.20 -16.00L-3.20 -14.00Z" transform="translate(423.0 36.0) rotate(70)" fill="#3a1203" opacity="1.00" stroke="#3a1203" stroke-width="1.4" stroke-linejoin="round"/><g transform="translate(370.7 66.0) rotate(80)" opacity="1.00"><path d="M0 -15.00C11.70 -9.00 10.50 7.50 0 12.75C-10.50 7.50 -11.70 -9.00 0 -15.00Z" fill="#3a1203"/><path d="M-1.200 12.00h2.400v7.50h-2.400z" fill="#3a1203"/></g><g transform="translate(373.0 106.0) rotate(100)" opacity="1.00"><path d="M0 -20.00C15.60 -12.00 14.00 10.00 0 17.00C-14.00 10.00 -15.60 -12.00 0 -20.00Z" fill="#2a0c02"/><path d="M-1.200 16.00h2.400v10.00h-2.400z" fill="#2a0c02"/></g><path d="M0.00 -14.00L2.24 -9.80L5.04 -11.20L4.62 -5.04L8.68 -8.68L9.52 -6.44L13.30 -7.00L11.76 -2.80L13.72 -1.12L8.12 3.08L9.24 5.60L1.40 4.76L0.70 13.30L-0.70 13.30L-1.40 4.76L-9.24 5.60L-8.12 3.08L-13.72 -1.12L-11.76 -2.80L-13.30 -7.00L-9.52 -6.44L-8.68 -8.68L-4.62 -5.04L-5.04 -11.20L-2.24 -9.80Z" transform="translate(375.0 138.0) rotate(10)" fill="#3a1203" opacity="1.00" stroke="#3a1203" stroke-width="1.0" stroke-linejoin="round"/><path d="M0.00 -18.00L2.88 -12.60L6.48 -14.40L5.94 -6.48L11.16 -11.16L12.24 -8.28L17.10 -9.00L15.12 -3.60L17.64 -1.44L10.44 3.96L11.88 7.20L1.80 6.12L0.90 17.10L-0.90 17.10L-1.80 6.12L-11.88 7.20L-10.44 3.96L-17.64 -1.44L-15.12 -3.60L-17.10 -9.00L-12.24 -8.28L-11.16 -11.16L-5.94 -6.48L-6.48 -14.40L-2.88 -12.60Z" transform="translate(404.0 232.0) rotate(100)" fill="#3a1203" opacity="1.00" stroke="#3a1203" stroke-width="1.3" stroke-linejoin="round"/><path d="M0.00 -16.00L2.56 -11.20L5.76 -12.80L5.28 -5.76L9.92 -9.92L10.88 -7.36L15.20 -8.00L13.44 -3.20L15.68 -1.28L9.28 3.52L10.56 6.40L1.60 5.44L0.80 15.20L-0.80 15.20L-1.60 5.44L-10.56 6.40L-9.28 3.52L-15.68 -1.28L-13.44 -3.20L-15.20 -8.00L-10.88 -7.36L-9.92 -9.92L-5.28 -5.76L-5.76 -12.80L-2.56 -11.20Z" transform="translate(372.0 322.0) rotate(30)" fill="#3a1203" opacity="1.00" stroke="#3a1203" stroke-width="1.1" stroke-linejoin="round"/><path d="M0.00 -13.00L2.08 -9.10L4.68 -10.40L4.29 -4.68L8.06 -8.06L8.84 -5.98L12.35 -6.50L10.92 -2.60L12.74 -1.04L7.54 2.86L8.58 5.20L1.30 4.42L0.65 12.35L-0.65 12.35L-1.30 4.42L-8.58 5.20L-7.54 2.86L-12.74 -1.04L-10.92 -2.60L-12.35 -6.50L-8.84 -5.98L-8.06 -8.06L-4.29 -4.68L-4.68 -10.40L-2.08 -9.10Z" transform="translate(40.0 302.0) rotate(250)" fill="#3a1203" opacity="1.00" stroke="#3a1203" stroke-width="0.9" stroke-linejoin="round"/></g><g filter="url(#lb)"><path d="M0.00 -37.00L5.92 -25.90L13.32 -29.60L12.21 -13.32L22.94 -22.94L25.16 -17.02L35.15 -18.50L31.08 -7.40L36.26 -2.96L21.46 8.14L24.42 14.80L3.70 12.58L1.85 35.15L-1.85 35.15L-3.70 12.58L-24.42 14.80L-21.46 8.14L-36.26 -2.96L-31.08 -7.40L-35.15 -18.50L-25.16 -17.02L-22.94 -22.94L-12.21 -13.32L-13.32 -29.60L-5.92 -25.90Z" transform="translate(20.0 3.0) rotate(168)" fill="#6e2204" opacity="1.00" stroke="#6e2204" stroke-width="2.6" stroke-linejoin="round"/><path d="M0.00 -25.00L4.00 -17.50L9.00 -20.00L8.25 -9.00L15.50 -15.50L17.00 -11.50L23.75 -12.50L21.00 -5.00L24.50 -2.00L14.50 5.50L16.50 10.00L2.50 8.50L1.25 23.75L-1.25 23.75L-2.50 8.50L-16.50 10.00L-14.50 5.50L-24.50 -2.00L-21.00 -5.00L-23.75 -12.50L-17.00 -11.50L-15.50 -15.50L-8.25 -9.00L-9.00 -20.00L-4.00 -17.50Z" transform="translate(3.0 94.0) rotate(-6)" fill="#7a2a06" opacity="1.00" stroke="#7a2a06" stroke-width="1.8" stroke-linejoin="round"/><path d="M0.00 -29.00L4.64 -20.30L10.44 -23.20L9.57 -10.44L17.98 -17.98L19.72 -13.34L27.55 -14.50L24.36 -5.80L28.42 -2.32L16.82 6.38L19.14 11.60L2.90 9.86L1.45 27.55L-1.45 27.55L-2.90 9.86L-19.14 11.60L-16.82 6.38L-28.42 -2.32L-24.36 -5.80L-27.55 -14.50L-19.72 -13.34L-17.98 -17.98L-9.57 -10.44L-10.44 -23.20L-4.64 -20.30Z" transform="translate(15.0 196.0) rotate(22)" fill="#7a2a06" opacity="1.00" stroke="#7a2a06" stroke-width="2.0" stroke-linejoin="round"/><path d="M0.00 -33.00L5.28 -23.10L11.88 -26.40L10.89 -11.88L20.46 -20.46L22.44 -15.18L31.35 -16.50L27.72 -6.60L32.34 -2.64L19.14 7.26L21.78 13.20L3.30 11.22L1.65 31.35L-1.65 31.35L-3.30 11.22L-21.78 13.20L-19.14 7.26L-32.34 -2.64L-27.72 -6.60L-31.35 -16.50L-22.44 -15.18L-20.46 -20.46L-10.89 -11.88L-11.88 -26.40L-5.28 -23.10Z" transform="translate(6.0 330.0) rotate(18)" fill="#6e2204" opacity="1.00" stroke="#6e2204" stroke-width="2.3" stroke-linejoin="round"/><path d="M0.00 -28.00L4.48 -19.60L10.08 -22.40L9.24 -10.08L17.36 -17.36L19.04 -12.88L26.60 -14.00L23.52 -5.60L27.44 -2.24L16.24 6.16L18.48 11.20L2.80 9.52L1.40 26.60L-1.40 26.60L-2.80 9.52L-18.48 11.20L-16.24 6.16L-27.44 -2.24L-23.52 -5.60L-26.60 -14.00L-19.04 -12.88L-17.36 -17.36L-9.24 -10.08L-10.08 -22.40L-4.48 -19.60Z" transform="translate(437.0 2.0) rotate(176)" fill="#6e2204" opacity="1.00" stroke="#6e2204" stroke-width="2.0" stroke-linejoin="round"/><g transform="translate(401.8 46.0) rotate(27)" opacity="1.00"><path d="M0 -26.00C20.28 -15.60 18.20 13.00 0 22.10C-18.20 13.00 -20.28 -15.60 0 -26.00Z" fill="#7a2a06"/><path d="M-1.200 20.80h2.400v13.00h-2.400z" fill="#7a2a06"/></g><path d="M0.00 -20.00L3.20 -14.00L7.20 -16.00L6.60 -7.20L12.40 -12.40L13.60 -9.20L19.00 -10.00L16.80 -4.00L19.60 -1.60L11.60 4.40L13.20 8.00L2.00 6.80L1.00 19.00L-1.00 19.00L-2.00 6.80L-13.20 8.00L-11.60 4.40L-19.60 -1.60L-16.80 -4.00L-19.00 -10.00L-13.60 -9.20L-12.40 -12.40L-6.60 -7.20L-7.20 -16.00L-3.20 -14.00Z" transform="translate(453.0 82.0) rotate(300)" fill="#4a1602" opacity="1.00" stroke="#4a1602" stroke-width="1.4" stroke-linejoin="round"/><g transform="translate(420.0 122.0) rotate(4)" opacity="1.00"><path d="M0 -6.88C5.50 -24.75 20.62 -26.12 19.25 -9.62C33.00 -8.25 31.62 12.38 15.13 11.00C16.50 27.50 2.75 28.88 0.00 15.13C-2.75 28.88 -16.50 27.50 -15.13 11.00C-31.62 12.38 -33.00 -8.25 -19.25 -9.62C-20.62 -26.12 -5.50 -24.75 0 -6.88Z" fill="#6e2204"/><path d="M0 -5.50C-2.75 -22.00 -12.38 -33.00 -13.75 -48.12" stroke="#6e2204" stroke-width="2.8" fill="none"/></g><path d="M0.00 -24.00L3.84 -16.80L8.64 -19.20L7.92 -8.64L14.88 -14.88L16.32 -11.04L22.80 -12.00L20.16 -4.80L23.52 -1.92L13.92 5.28L15.84 9.60L2.40 8.16L1.20 22.80L-1.20 22.80L-2.40 8.16L-15.84 9.60L-13.92 5.28L-23.52 -1.92L-20.16 -4.80L-22.80 -12.00L-16.32 -11.04L-14.88 -14.88L-7.92 -8.64L-8.64 -19.20L-3.84 -16.80Z" transform="translate(438.0 192.0) rotate(40)" fill="#6e2204" opacity="0.95" stroke="#6e2204" stroke-width="1.7" stroke-linejoin="round"/><path d="M0.00 -26.00L4.16 -18.20L9.36 -20.80L8.58 -9.36L16.12 -16.12L17.68 -11.96L24.70 -13.00L21.84 -5.20L25.48 -2.08L15.08 5.72L17.16 10.40L2.60 8.84L1.30 24.70L-1.30 24.70L-2.60 8.84L-17.16 10.40L-15.08 5.72L-25.48 -2.08L-21.84 -5.20L-24.70 -13.00L-17.68 -11.96L-16.12 -16.12L-8.58 -9.36L-9.36 -20.80L-4.16 -18.20Z" transform="translate(441.0 262.0) rotate(310)" fill="#6e2204" opacity="0.95" stroke="#6e2204" stroke-width="1.8" stroke-linejoin="round"/><path d="M0.00 -22.00L3.52 -15.40L7.92 -17.60L7.26 -7.92L13.64 -13.64L14.96 -10.12L20.90 -11.00L18.48 -4.40L21.56 -1.76L12.76 4.84L14.52 8.80L2.20 7.48L1.10 20.90L-1.10 20.90L-2.20 7.48L-14.52 8.80L-12.76 4.84L-21.56 -1.76L-18.48 -4.40L-20.90 -11.00L-14.96 -10.12L-13.64 -13.64L-7.26 -7.92L-7.92 -17.60L-3.52 -15.40Z" transform="translate(410.0 300.0) rotate(200)" fill="#7a2a06" opacity="0.90" stroke="#7a2a06" stroke-width="1.5" stroke-linejoin="round"/><path d="M0.00 -18.00L2.88 -12.60L6.48 -14.40L5.94 -6.48L11.16 -11.16L12.24 -8.28L17.10 -9.00L15.12 -3.60L17.64 -1.44L10.44 3.96L11.88 7.20L1.80 6.12L0.90 17.10L-0.90 17.10L-1.80 6.12L-11.88 7.20L-10.44 3.96L-17.64 -1.44L-15.12 -3.60L-17.10 -9.00L-12.24 -8.28L-11.16 -11.16L-5.94 -6.48L-6.48 -14.40L-2.88 -12.60Z" transform="translate(447.0 326.0) rotate(110)" fill="#4a1602" opacity="1.00" stroke="#4a1602" stroke-width="1.3" stroke-linejoin="round"/></g></svg>
<div class="t" style='left:89.40px;top:47.30px;font-family:"DejaVu Sans","Liberation Sans",sans-serif;font-size:16.7px;line-height:24px;color:#f3b50c;letter-spacing:-0.165px;font-weight:700;'>İnsanın Sosyokültürel Gelişimi</div>
<svg class="a" style="left:71.25px;top:90.00px;" width="80.00" height="67.00" viewBox="0 0 80 67"><defs><filter id="b1" x="-10%" y="-10%" width="120%" height="120%"><feGaussianBlur stdDeviation=".8"/></filter><filter id="b1s" x="-10%" y="-10%" width="120%" height="120%"><feGaussianBlur stdDeviation=".45"/></filter><clipPath id="c1"><rect width="80" height="67"/></clipPath><linearGradient id="g1w" x1="0" x2="0" y1="0" y2="1"><stop offset="0" stop-color="#8b97a0"/><stop offset=".35" stop-color="#7388b4"/><stop offset="1" stop-color="#5f7cb4"/></linearGradient></defs><g clip-path="url(#c1)"><g filter="url(#b1)"><rect x="-4" y="-4" width="88" height="13" fill="#93b6dd"/><rect x="-4" y="7.500" width="88" height="2" fill="#5f6e58"/><rect x="-4" y="9" width="88" height="20" fill="#808a56"/><rect x="-4" y="16" width="88" height="8" fill="#8b9263"/><rect x="-4" y="26" width="88" height="46" fill="url(#g1w)"/><rect x="52" y="25" width="32" height="10" fill="#a9bce0"/><rect x="60" y="33" width="24" height="8" fill="#7f8a6a" opacity=".8"/><rect x="-4" y="28" width="22" height="14" fill="#7d8668" opacity=".85"/><rect x="24" y="40" width="30" height="10" fill="#8a9aa8" opacity=".6"/><rect x="-4" y="50" width="40" height="20" fill="#5b79b6" opacity=".9"/><rect x="56" y="44" width="28" height="26" fill="#7b8a98" opacity=".7"/><path d="M18.9 45.4L17.2 30.3" stroke="#8a8c6a" stroke-width=".8" opacity=".75"/><path d="M1.6 53.3L0.5 40.1" stroke="#7b8062" stroke-width=".8" opacity=".75"/><path d="M42.9 45.2L42.0 34.1" stroke="#7b8062" stroke-width=".8" opacity=".75"/><path d="M75.4 48.1L76.6 28.6" stroke="#6d7660" stroke-width=".8" opacity=".75"/><path d="M15.5 54.1L13.8 34.8" stroke="#6d7660" stroke-width=".8" opacity=".75"/><path d="M48.5 59.9L47.5 42.8" stroke="#8a8c6a" stroke-width=".8" opacity=".75"/><path d="M22.4 67.0L20.4 48.8" stroke="#6d7660" stroke-width=".8" opacity=".75"/><path d="M23.4 57.1L23.0 43.5" stroke="#8a8c6a" stroke-width=".8" opacity=".75"/><path d="M47.9 48.4L47.0 37.5" stroke="#6d7660" stroke-width=".8" opacity=".75"/><path d="M63.8 46.1L63.9 29.8" stroke="#6d7660" stroke-width=".8" opacity=".75"/><path d="M51.8 54.0L50.1 43.4" stroke="#8a8c6a" stroke-width=".8" opacity=".75"/><path d="M73.1 57.9L72.5 42.0" stroke="#8a8c6a" stroke-width=".8" opacity=".75"/><path d="M59.8 53.1L58.2 35.1" stroke="#6d7660" stroke-width=".8" opacity=".75"/><path d="M4.9 54.8L3.4 33.0" stroke="#8a8c6a" stroke-width=".8" opacity=".75"/><path d="M74.8 42.9L75.6 34.4" stroke="#6d7660" stroke-width=".8" opacity=".75"/><path d="M71.7 67.0L69.7 49.0" stroke="#6d7660" stroke-width=".8" opacity=".75"/><path d="M23.1 67.0L24.6 49.3" stroke="#9aa08a" stroke-width=".8" opacity=".75"/><path d="M69.6 52.4L71.1 43.0" stroke="#8a8c6a" stroke-width=".8" opacity=".75"/><path d="M23.4 52.3L22.7 33.5" stroke="#8a8c6a" stroke-width=".8" opacity=".75"/><path d="M0.8 40.0L2.7 29.0" stroke="#6d7660" stroke-width=".8" opacity=".75"/><path d="M45.7 49.4L44.2 37.7" stroke="#8a8c6a" stroke-width=".8" opacity=".75"/><path d="M5.0 62.9L5.4 44.2" stroke="#8a8c6a" stroke-width=".8" opacity=".75"/><path d="M43.7 54.6L42.2 40.8" stroke="#7b8062" stroke-width=".8" opacity=".75"/><path d="M42.3 60.4L42.3 45.0" stroke="#8a8c6a" stroke-width=".8" opacity=".75"/><path d="M19.3 45.7L19.1 37.0" stroke="#9aa08a" stroke-width=".8" opacity=".75"/><path d="M51.8 49.3L49.9 37.4" stroke="#8a8c6a" stroke-width=".8" opacity=".75"/><path d="M20.4 45.1L20.0 33.3" stroke="#8a8c6a" stroke-width=".8" opacity=".75"/><path d="M20.9 59.2L21.2 35.2" stroke="#6d7660" stroke-width=".8" opacity=".75"/><path d="M79.2 61.1L79.2 36.9" stroke="#7b8062" stroke-width=".8" opacity=".75"/><path d="M7.4 56.4L6.8 32.6" stroke="#8a8c6a" stroke-width=".8" opacity=".75"/><path d="M52.6 65.2L52.7 45.6" stroke="#9aa08a" stroke-width=".8" opacity=".75"/><path d="M52.4 55.9L54.2 43.1" stroke="#9aa08a" stroke-width=".8" opacity=".75"/><path d="M6.0 67.0L4.1 49.4" stroke="#8a8c6a" stroke-width=".8" opacity=".75"/><path d="M71.9 56.2L73.4 30.8" stroke="#7b8062" stroke-width=".8" opacity=".75"/><path d="M55.0 54.7L56.7 38.2" stroke="#9aa08a" stroke-width=".8" opacity=".75"/><path d="M17.5 52.7L17.9 28.1" stroke="#7b8062" stroke-width=".8" opacity=".75"/><path d="M20.6 58.6L22.1 36.7" stroke="#9aa08a" stroke-width=".8" opacity=".75"/><path d="M44.0 59.0L45.3 47.3" stroke="#6d7660" stroke-width=".8" opacity=".75"/><path d="M45.0 67.0L43.1 45.3" stroke="#9aa08a" stroke-width=".8" opacity=".75"/><path d="M2.7 57.9L3.2 41.1" stroke="#6d7660" stroke-width=".8" opacity=".75"/></g><g filter="url(#b1s)"><path d="M30 13.500L72 7" stroke="#b49a78" stroke-width=".9"/><path d="M5 34.500L55 27" stroke="#d2c3a6" stroke-width=".9"/><path d="M38 50v17M47 52l-2 15" stroke="#4a4a40" stroke-width="1.300"/><path d="M44.300 8.500c1.200-1.400 3.600-1.200 4.300.5.500 1.400 0 2.700-.8 3.600l1.700 1.600 3.800-.8 3.400-4.600 1.200.8-3.400 6.200-4.600 1.800.6 7.800-1 3.800 2.800 6.500 2.900 8.200-1.700.7-4.700-8.200-3.200-5.300-2.600 4-2.400 5.200-1.900-.6 1.700-6.500 3.200-5.500-.4-7.700-4.700 3.800-6.300 5.400-1.100-1.200 5.300-6.600 6.200-5.600 3.400-1.900c-.8-1-1-2.500-.3-3.800z" fill="#191817"/></g></g></svg>
<svg class="a" style="left:126.25px;top:128.25px;" width="85.80" height="66.80" viewBox="0 0 86 67"><defs><filter id="b2" x="-10%" y="-10%" width="120%" height="120%"><feGaussianBlur stdDeviation=".8"/></filter><filter id="b2s" x="-10%" y="-10%" width="120%" height="120%"><feGaussianBlur stdDeviation=".5"/></filter><clipPath id="c2"><rect width="86" height="67"/></clipPath><linearGradient id="g2f" x1="0" x2="0" y1="0" y2="1"><stop offset="0" stop-color="#d9c590"/><stop offset=".6" stop-color="#d3be8a"/><stop offset="1" stop-color="#b7a677"/></linearGradient></defs><g clip-path="url(#c2)"><g filter="url(#b2)"><rect x="-4" y="-4" width="94" height="75" fill="url(#g2f)"/><rect x="-4" y="-4" width="94" height="17" fill="#b88f4e"/><rect x="-4" y="9" width="94" height="5" fill="#a98b52"/><rect x="44" y="-4" width="46" height="8" fill="#c9d2c2"/><rect x="60" y="1" width="30" height="6" fill="#71825f"/><rect x="-4" y="52" width="94" height="18" fill="#b9a878" opacity=".8"/><rect x="-4" y="44" width="30" height="24" fill="#c4b080" opacity=".7"/><ellipse cx="45" cy="50" rx="22" ry="3" fill="#6e6048" opacity=".55"/><ellipse cx="17" cy="43" rx="4" ry="2" fill="#3a3228" opacity=".7"/></g><g filter="url(#b2s)"><ellipse cx="12.600" cy="6.800" rx="2" ry="2.400" fill="#f0ece6"/><ellipse cx="12.800" cy="8.800" rx="1.500" ry="1.700" fill="#c9a58c"/><path d="M10.400 11.200c1.400-1 3.600-1 5 0l1.600 5 2.400 3-1 1-2.600-2 .4 6h-6.200z" fill="#ebe7e1"/><path d="M10 24h6.400l1.200 14h-6.200z" fill="#b2848c"/><path d="M12.200 38v4M15.600 38v4" stroke="#4a3a30" stroke-width="1.200"/><ellipse cx="36.600" cy="6.600" rx="2.300" ry="1.800" fill="#ece8e2"/><ellipse cx="36.400" cy="8.800" rx="1.600" ry="1.800" fill="#b88e74"/><path d="M32.400 11.600c1.800-1.200 5-1.200 6.800 0l1.200 8-1.800 6h-6.600l-1.600-7z" fill="#6a7ba2"/><path d="M32 25h6.400l-.4 12-1 11h-2.400l.2-11-2 10h-2.400z" fill="#4d463f"/><path d="M34 24l4 30M36 27l8 28" stroke="#d9c7a2" stroke-width=".9"/><path d="M34.500 23c1-3.400 5.500-4.600 9.500-4.200 3.400.2 6 1.200 7.200 3.400l1.600 8.400-.6 8.800-1.600.4.400 13.200h-2.400l-1.600-12.400-5.800-.4-.8 13.400h-2.400l-.8-14.400c-2.200-2.800-3-6.200-2.800-9.800z" fill="#251917"/><path d="M56 17.400c2.200-2.600 7.600-3 12-1.600 3.400-.4 7.400.4 9.800 2.200l2.600 3.400 1.200 6-1.800 1.800-3.400-3-1.600 6.400.6 9.600h-2.200l-2-8.600-6.400 1.400-.4 9.200h-2.200l-1-9.800c-2.600-1.600-4.200-4.400-4.800-8z" fill="#2a1c19"/><path d="M48.500 25.400l27-4.600" stroke="#d6c096" stroke-width="2"/><path d="M52 30l4 20" stroke="#c9b48c" stroke-width=".8"/></g></g></svg>
<svg class="a" style="left:186.50px;top:178.00px;" width="85.50" height="56.30" viewBox="0 0 86 56"><defs><filter id="b3" x="-10%" y="-10%" width="120%" height="120%"><feGaussianBlur stdDeviation=".55"/></filter><clipPath id="c3"><rect width="86" height="56"/></clipPath></defs><g clip-path="url(#c3)"><g filter="url(#b3)"><rect x="-4" y="-4" width="94" height="64" fill="#1f1a12"/><rect x="-4" y="-4" width="26" height="26" fill="#8f8260"/><rect x="4" y="-4" width="10" height="20" fill="#2a241a"/><rect x="22" y="-4" width="22" height="14" fill="#6b6046"/><rect x="68" y="-4" width="22" height="64" fill="#4a4230"/><circle cx="54.0" cy="38.0" r="14.5" fill="none" stroke="#cbbd96" stroke-width="2.7" stroke-dasharray="2.85 2.85"/><circle cx="54.0" cy="38.0" r="13.3" fill="#cbbd96"/><ellipse cx="61.2" cy="40.2" rx="2.9" ry="3.8" fill="#17130d" transform="rotate(107 61.2 40.2)"/><ellipse cx="54.1" cy="45.5" rx="2.9" ry="3.8" fill="#17130d" transform="rotate(179 54.1 45.5)"/><ellipse cx="46.9" cy="40.4" rx="2.9" ry="3.8" fill="#17130d" transform="rotate(251 46.9 40.4)"/><ellipse cx="49.5" cy="32.0" rx="2.9" ry="3.8" fill="#17130d" transform="rotate(323 49.5 32.0)"/><ellipse cx="58.3" cy="31.8" rx="2.9" ry="3.8" fill="#17130d" transform="rotate(395 58.3 31.8)"/><circle cx="54.0" cy="38.0" r="2.9" fill="none" stroke="#3a3222" stroke-width=".7"/><circle cx="53.5" cy="11.5" r="8.5" fill="none" stroke="#a89a76" stroke-width="2.1" stroke-dasharray="2.43 2.43"/><circle cx="53.5" cy="11.5" r="7.6" fill="#a89a76"/><circle cx="53.5" cy="11.5" r="4.7" fill="#17130d"/><circle cx="53.5" cy="11.5" r="1.9" fill="#a89a76"/><circle cx="80.500" cy="19" r="13" fill="none" stroke="#cbbd96" stroke-width="2.600" stroke-dasharray="2 1.800"/><circle cx="80.500" cy="19" r="10.600" fill="none" stroke="#cbbd96" stroke-width="1.400"/><path d="M80.500 19L90.8 21.1" stroke="#cbbd96" stroke-width="1.300"/><path d="M80.500 19L86.3 27.8" stroke="#cbbd96" stroke-width="1.300"/><path d="M80.500 19L78.4 29.3" stroke="#cbbd96" stroke-width="1.300"/><path d="M80.500 19L71.7 24.8" stroke="#cbbd96" stroke-width="1.300"/><path d="M80.500 19L70.2 16.9" stroke="#cbbd96" stroke-width="1.300"/><path d="M80.500 19L74.7 10.2" stroke="#cbbd96" stroke-width="1.300"/><path d="M80.500 19L82.6 8.7" stroke="#cbbd96" stroke-width="1.300"/><path d="M80.500 19L89.3 13.2" stroke="#cbbd96" stroke-width="1.300"/><circle cx="80.500" cy="19" r="3" fill="#cbbd96"/><path d="M10 24L48 40" stroke="#d6c9a2" stroke-width="4"/><path d="M12 30L44 44" stroke="#3a3222" stroke-width="1.200"/><path d="M24 6c4 0 6 3 5 7l6 6-2 8-8 2-2 10 6 8-4 6h-12l-4-10 4-12z" fill="#a39572"/><path d="M20 16l6 4-2 8-6-2zM16 34l8 2-2 8h-6z" fill="#2a241a"/><path d="M30 2l10 4 2 12-6 2z" fill="#bfb18c"/><path d="M-2 26l10 4v24l-10 2z" fill="#3a3222"/><path d="M70 40l14 4v14h-14z" fill="#8a7d5c"/><circle cx="78" cy="50" r="4.500" fill="none" stroke="#1f1a12" stroke-width="1.500"/><rect x="-4" y="50" width="44" height="10" fill="#2a241a" opacity=".8"/></g></g></svg>
<svg class="a" style="left:249.00px;top:228.00px;" width="75.80" height="70.00" viewBox="0 0 76 70"><defs><filter id="b4" x="-10%" y="-10%" width="120%" height="120%"><feGaussianBlur stdDeviation=".6"/></filter><clipPath id="c4"><rect width="76" height="70"/></clipPath></defs><g clip-path="url(#c4)"><rect width="76" height="70" fill="#fdfdfd"/><g filter="url(#b4)"><path d="M3 30c-2-10 6-17 16-17 4-6 16-8 24-5 8-3 20 0 25 8 6 4 7 14 2 20-2 6-8 9-15 8-3 5-10 7-16 5-4 3-10 3-14 0-10 0-20-7-22-19z" fill="#93a6ba"/><rect x="33.1" y="35.0" width="2.8" height="2.2" fill="#c8d3de" transform="rotate(26 33.1 35.0)"/><rect x="58.4" y="37.5" width="3.2" height="2.6" fill="#7a91a8" transform="rotate(-37 58.4 37.5)"/><rect x="31.7" y="30.7" width="1.8" height="1.4" fill="#b4c2d0" transform="rotate(-35 31.7 30.7)"/><rect x="7.8" y="20.9" width="2.7" height="2.2" fill="#5b738c" transform="rotate(6 7.8 20.9)"/><rect x="11.3" y="41.5" width="1.7" height="1.3" fill="#e9edf1" transform="rotate(-17 11.3 41.5)"/><rect x="43.8" y="33.6" width="2.2" height="1.7" fill="#e9edf1" transform="rotate(-32 43.8 33.6)"/><rect x="26.8" y="25.7" width="1.8" height="1.4" fill="#c8d3de" transform="rotate(5 26.8 25.7)"/><rect x="21.6" y="19.6" width="2.6" height="2.0" fill="#4a6078" transform="rotate(-3 21.6 19.6)"/><rect x="54.4" y="23.7" width="2.0" height="1.6" fill="#e9edf1" transform="rotate(16 54.4 23.7)"/><rect x="38.9" y="44.0" width="2.5" height="2.0" fill="#4a6078" transform="rotate(18 38.9 44.0)"/><rect x="30.1" y="49.2" width="1.8" height="1.5" fill="#b4c2d0" transform="rotate(-27 30.1 49.2)"/><rect x="20.2" y="45.9" width="2.4" height="1.9" fill="#c8d3de" transform="rotate(21 20.2 45.9)"/><rect x="9.9" y="20.4" width="2.2" height="1.7" fill="#4a6078" transform="rotate(8 9.9 20.4)"/><rect x="19.4" y="22.7" width="3.1" height="2.5" fill="#d9cdae" transform="rotate(-2 19.4 22.7)"/><rect x="34.7" y="25.6" width="2.9" height="2.3" fill="#a9967a" transform="rotate(-17 34.7 25.6)"/><rect x="17.9" y="39.8" width="1.6" height="1.3" fill="#a9967a" transform="rotate(-12 17.9 39.8)"/><rect x="20.9" y="20.2" width="2.0" height="1.6" fill="#d9cdae" transform="rotate(-30 20.9 20.2)"/><rect x="38.3" y="41.0" width="3.2" height="2.5" fill="#c8d3de" transform="rotate(-27 38.3 41.0)"/><rect x="25.1" y="34.6" width="1.8" height="1.5" fill="#b4c2d0" transform="rotate(29 25.1 34.6)"/><rect x="34.4" y="41.2" width="2.2" height="1.8" fill="#b4c2d0" transform="rotate(37 34.4 41.2)"/><rect x="45.0" y="35.0" width="2.0" height="1.6" fill="#7a91a8" transform="rotate(-39 45.0 35.0)"/><rect x="44.0" y="22.4" width="2.1" height="1.7" fill="#e9edf1" transform="rotate(-6 44.0 22.4)"/><rect x="21.5" y="39.9" width="3.3" height="2.7" fill="#eef1f4" transform="rotate(36 21.5 39.9)"/><rect x="22.0" y="14.5" width="2.4" height="1.9" fill="#eef1f4" transform="rotate(-9 22.0 14.5)"/><rect x="31.0" y="32.2" width="2.7" height="2.2" fill="#5b738c" transform="rotate(-25 31.0 32.2)"/><rect x="58.7" y="27.8" width="1.8" height="1.4" fill="#5b738c" transform="rotate(-32 58.7 27.8)"/><rect x="16.6" y="23.1" width="3.3" height="2.6" fill="#5b738c" transform="rotate(-34 16.6 23.1)"/><rect x="42.9" y="40.3" width="2.7" height="2.2" fill="#4a6078" transform="rotate(8 42.9 40.3)"/><rect x="28.8" y="29.9" width="2.5" height="2.0" fill="#a9967a" transform="rotate(-2 28.8 29.9)"/><rect x="34.0" y="35.1" width="2.9" height="2.4" fill="#d9cdae" transform="rotate(-2 34.0 35.1)"/><rect x="29.9" y="15.8" width="2.0" height="1.6" fill="#eef1f4" transform="rotate(-11 29.9 15.8)"/><rect x="26.1" y="10.5" width="3.0" height="2.4" fill="#d9cdae" transform="rotate(38 26.1 10.5)"/><rect x="55.9" y="16.2" width="2.1" height="1.7" fill="#4a6078" transform="rotate(33 55.9 16.2)"/><rect x="29.5" y="35.7" width="2.6" height="2.1" fill="#eef1f4" transform="rotate(-14 29.5 35.7)"/><rect x="43.1" y="47.3" width="3.4" height="2.7" fill="#7a91a8" transform="rotate(24 43.1 47.3)"/><rect x="49.8" y="13.1" width="2.0" height="1.6" fill="#eef1f4" transform="rotate(-1 49.8 13.1)"/><rect x="34.0" y="8.3" width="3.0" height="2.4" fill="#a9967a" transform="rotate(-19 34.0 8.3)"/><rect x="26.3" y="9.9" width="2.4" height="1.9" fill="#4a6078" transform="rotate(36 26.3 9.9)"/><rect x="28.9" y="35.4" width="2.0" height="1.6" fill="#7a91a8" transform="rotate(-13 28.9 35.4)"/><rect x="4.5" y="31.3" width="2.7" height="2.2" fill="#5b738c" transform="rotate(-2 4.5 31.3)"/><rect x="21.0" y="13.9" width="1.8" height="1.4" fill="#c8d3de" transform="rotate(33 21.0 13.9)"/><rect x="43.8" y="11.7" width="2.5" height="2.0" fill="#e9edf1" transform="rotate(-5 43.8 11.7)"/><rect x="32.8" y="25.4" width="3.3" height="2.6" fill="#b4c2d0" transform="rotate(-3 32.8 25.4)"/><rect x="37.7" y="24.2" width="1.9" height="1.5" fill="#e9edf1" transform="rotate(-38 37.7 24.2)"/><rect x="19.9" y="21.8" width="2.8" height="2.2" fill="#a9967a" transform="rotate(13 19.9 21.8)"/><rect x="24.0" y="40.8" width="1.8" height="1.5" fill="#5b738c" transform="rotate(24 24.0 40.8)"/><rect x="36.7" y="23.7" width="2.9" height="2.4" fill="#e9edf1" transform="rotate(-5 36.7 23.7)"/><rect x="59.0" y="15.5" width="2.0" height="1.6" fill="#d9cdae" transform="rotate(-23 59.0 15.5)"/><rect x="9.1" y="28.9" width="2.2" height="1.7" fill="#eef1f4" transform="rotate(-6 9.1 28.9)"/><rect x="59.8" y="43.6" width="2.2" height="1.8" fill="#a9967a" transform="rotate(13 59.8 43.6)"/><rect x="47.1" y="16.0" width="3.1" height="2.5" fill="#eef1f4" transform="rotate(-30 47.1 16.0)"/><rect x="51.1" y="40.4" width="3.2" height="2.5" fill="#e9edf1" transform="rotate(9 51.1 40.4)"/><rect x="39.8" y="22.4" width="1.9" height="1.5" fill="#c8d3de" transform="rotate(5 39.8 22.4)"/><rect x="27.5" y="41.6" width="2.6" height="2.1" fill="#c8d3de" transform="rotate(31 27.5 41.6)"/><rect x="49.8" y="31.7" width="1.7" height="1.3" fill="#c8d3de" transform="rotate(1 49.8 31.7)"/><rect x="11.3" y="22.3" width="3.2" height="2.6" fill="#a9967a" transform="rotate(-14 11.3 22.3)"/><rect x="62.8" y="26.4" width="2.0" height="1.6" fill="#d9cdae" transform="rotate(-4 62.8 26.4)"/><rect x="16.6" y="26.2" width="3.3" height="2.6" fill="#eef1f4" transform="rotate(30 16.6 26.2)"/><rect x="52.1" y="25.7" width="2.6" height="2.1" fill="#7a91a8" transform="rotate(27 52.1 25.7)"/><rect x="44.3" y="33.5" width="2.4" height="1.9" fill="#c8d3de" transform="rotate(14 44.3 33.5)"/><rect x="25.9" y="32.6" width="2.1" height="1.7" fill="#c8d3de" transform="rotate(32 25.9 32.6)"/><rect x="53.7" y="43.2" width="2.8" height="2.2" fill="#e9edf1" transform="rotate(-20 53.7 43.2)"/><rect x="52.0" y="39.1" width="2.9" height="2.4" fill="#c8d3de" transform="rotate(-8 52.0 39.1)"/><rect x="4.3" y="30.7" width="3.1" height="2.5" fill="#e9edf1" transform="rotate(17 4.3 30.7)"/><rect x="57.7" y="28.5" width="2.4" height="1.9" fill="#4a6078" transform="rotate(-15 57.7 28.5)"/><rect x="37.4" y="27.1" width="2.6" height="2.1" fill="#a9967a" transform="rotate(16 37.4 27.1)"/><rect x="20.9" y="38.4" width="2.1" height="1.7" fill="#c8d3de" transform="rotate(-31 20.9 38.4)"/><rect x="50.2" y="24.8" width="3.2" height="2.5" fill="#c8d3de" transform="rotate(-19 50.2 24.8)"/><rect x="66.4" y="33.5" width="2.1" height="1.7" fill="#e9edf1" transform="rotate(26 66.4 33.5)"/><rect x="53.7" y="15.5" width="3.3" height="2.6" fill="#b4c2d0" transform="rotate(-28 53.7 15.5)"/><rect x="59.2" y="21.7" width="2.9" height="2.3" fill="#c8d3de" transform="rotate(-18 59.2 21.7)"/><rect x="41.8" y="21.8" width="3.2" height="2.6" fill="#d9cdae" transform="rotate(35 41.8 21.8)"/><rect x="18.2" y="15.2" width="1.8" height="1.4" fill="#7a91a8" transform="rotate(-35 18.2 15.2)"/><rect x="51.8" y="19.1" width="2.2" height="1.8" fill="#eef1f4" transform="rotate(-7 51.8 19.1)"/><rect x="60.0" y="21.0" width="1.7" height="1.3" fill="#7a91a8" transform="rotate(35 60.0 21.0)"/><rect x="52.9" y="27.2" width="1.9" height="1.5" fill="#d9cdae" transform="rotate(10 52.9 27.2)"/><rect x="25.1" y="27.4" width="2.4" height="1.9" fill="#e9edf1" transform="rotate(-18 25.1 27.4)"/><rect x="49.2" y="9.2" width="1.7" height="1.3" fill="#5b738c" transform="rotate(19 49.2 9.2)"/><rect x="26.1" y="26.6" width="2.5" height="2.0" fill="#a9967a" transform="rotate(-31 26.1 26.6)"/><rect x="46.6" y="17.5" width="2.5" height="2.0" fill="#b4c2d0" transform="rotate(38 46.6 17.5)"/><rect x="33.2" y="36.8" width="2.0" height="1.6" fill="#7a91a8" transform="rotate(27 33.2 36.8)"/><rect x="31.0" y="13.6" width="2.3" height="1.9" fill="#4a6078" transform="rotate(39 31.0 13.6)"/><rect x="39.4" y="27.6" width="2.7" height="2.2" fill="#d9cdae" transform="rotate(-6 39.4 27.6)"/><rect x="63.0" y="34.6" width="2.3" height="1.8" fill="#eef1f4" transform="rotate(14 63.0 34.6)"/><rect x="35.1" y="37.8" width="2.1" height="1.7" fill="#a9967a" transform="rotate(-25 35.1 37.8)"/><rect x="37.9" y="29.7" width="2.3" height="1.8" fill="#4a6078" transform="rotate(38 37.9 29.7)"/><rect x="24.0" y="26.4" width="3.3" height="2.7" fill="#d9cdae" transform="rotate(-23 24.0 26.4)"/><rect x="45.2" y="38.9" width="1.8" height="1.4" fill="#d9cdae" transform="rotate(0 45.2 38.9)"/><rect x="44.8" y="42.3" width="1.6" height="1.3" fill="#d9cdae" transform="rotate(25 44.8 42.3)"/><rect x="53.3" y="41.0" width="2.3" height="1.8" fill="#d9cdae" transform="rotate(-16 53.3 41.0)"/><rect x="40.7" y="44.1" width="2.6" height="2.0" fill="#e9edf1" transform="rotate(13 40.7 44.1)"/><rect x="31.3" y="10.0" width="2.3" height="1.8" fill="#4a6078" transform="rotate(18 31.3 10.0)"/><rect x="22.0" y="29.4" width="2.7" height="2.2" fill="#e9edf1" transform="rotate(-36 22.0 29.4)"/><rect x="54.2" y="12.1" width="2.7" height="2.2" fill="#eef1f4" transform="rotate(-29 54.2 12.1)"/><rect x="15.7" y="26.9" width="3.1" height="2.5" fill="#5b738c" transform="rotate(26 15.7 26.9)"/><rect x="10.6" y="19.1" width="2.8" height="2.3" fill="#7a91a8" transform="rotate(-33 10.6 19.1)"/><rect x="63.1" y="33.2" width="3.3" height="2.7" fill="#b4c2d0" transform="rotate(27 63.1 33.2)"/><rect x="14.0" y="23.3" width="2.7" height="2.2" fill="#7a91a8" transform="rotate(-1 14.0 23.3)"/><rect x="67.7" y="29.4" width="2.9" height="2.4" fill="#eef1f4" transform="rotate(32 67.7 29.4)"/><rect x="57.4" y="36.8" width="2.9" height="2.4" fill="#a9967a" transform="rotate(-20 57.4 36.8)"/><rect x="51.7" y="33.3" width="2.9" height="2.3" fill="#7a91a8" transform="rotate(-22 51.7 33.3)"/><rect x="25.4" y="18.3" width="3.1" height="2.5" fill="#c8d3de" transform="rotate(-2 25.4 18.3)"/><rect x="26.3" y="12.6" width="2.7" height="2.2" fill="#7a91a8" transform="rotate(-34 26.3 12.6)"/><rect x="47.0" y="36.4" width="2.9" height="2.4" fill="#d9cdae" transform="rotate(10 47.0 36.4)"/><rect x="52.7" y="39.1" width="2.5" height="2.0" fill="#c8d3de" transform="rotate(15 52.7 39.1)"/><rect x="30.7" y="20.1" width="2.5" height="2.0" fill="#a9967a" transform="rotate(-3 30.7 20.1)"/><rect x="41.6" y="8.2" width="2.6" height="2.1" fill="#d9cdae" transform="rotate(38 41.6 8.2)"/><rect x="40.8" y="28.3" width="2.4" height="1.9" fill="#eef1f4" transform="rotate(37 40.8 28.3)"/><rect x="23.3" y="32.0" width="2.0" height="1.6" fill="#7a91a8" transform="rotate(-34 23.3 32.0)"/><rect x="62.1" y="38.5" width="2.1" height="1.7" fill="#4a6078" transform="rotate(-29 62.1 38.5)"/><rect x="47.7" y="16.3" width="3.2" height="2.6" fill="#4a6078" transform="rotate(-21 47.7 16.3)"/><rect x="55.7" y="20.8" width="1.6" height="1.3" fill="#5b738c" transform="rotate(36 55.7 20.8)"/><rect x="29.8" y="17.9" width="2.9" height="2.3" fill="#b4c2d0" transform="rotate(-12 29.8 17.9)"/><rect x="25.6" y="46.3" width="1.6" height="1.3" fill="#4a6078" transform="rotate(27 25.6 46.3)"/><rect x="61.7" y="42.7" width="2.9" height="2.3" fill="#d9cdae" transform="rotate(-20 61.7 42.7)"/><rect x="55.7" y="33.7" width="3.2" height="2.5" fill="#c8d3de" transform="rotate(-11 55.7 33.7)"/><rect x="23.9" y="33.2" width="1.7" height="1.3" fill="#c8d3de" transform="rotate(-36 23.9 33.2)"/><rect x="24.4" y="15.4" width="1.9" height="1.5" fill="#d9cdae" transform="rotate(-5 24.4 15.4)"/><rect x="26.3" y="45.5" width="3.0" height="2.4" fill="#b4c2d0" transform="rotate(31 26.3 45.5)"/><rect x="47.8" y="14.3" width="3.2" height="2.6" fill="#eef1f4" transform="rotate(4 47.8 14.3)"/><rect x="36.9" y="25.6" width="2.9" height="2.3" fill="#a9967a" transform="rotate(9 36.9 25.6)"/><rect x="58.1" y="43.8" width="2.5" height="2.0" fill="#eef1f4" transform="rotate(-30 58.1 43.8)"/><rect x="20.4" y="30.9" width="2.1" height="1.7" fill="#d9cdae" transform="rotate(-8 20.4 30.9)"/><rect x="39.6" y="42.5" width="2.8" height="2.2" fill="#c8d3de" transform="rotate(-27 39.6 42.5)"/><rect x="45.0" y="36.0" width="3.2" height="2.6" fill="#a9967a" transform="rotate(4 45.0 36.0)"/><rect x="21.2" y="32.2" width="3.0" height="2.4" fill="#b4c2d0" transform="rotate(-29 21.2 32.2)"/><rect x="40.9" y="33.7" width="2.2" height="1.8" fill="#c8d3de" transform="rotate(-14 40.9 33.7)"/><rect x="17.7" y="42.6" width="2.0" height="1.6" fill="#5b738c" transform="rotate(20 17.7 42.6)"/><rect x="20.9" y="35.4" width="2.5" height="2.0" fill="#b4c2d0" transform="rotate(-18 20.9 35.4)"/><rect x="38.3" y="15.2" width="2.6" height="2.1" fill="#4a6078" transform="rotate(-30 38.3 15.2)"/><rect x="12.2" y="28.7" width="3.2" height="2.5" fill="#7a91a8" transform="rotate(-33 12.2 28.7)"/><rect x="53.3" y="21.8" width="2.8" height="2.2" fill="#b4c2d0" transform="rotate(36 53.3 21.8)"/><rect x="56.2" y="13.2" width="1.6" height="1.3" fill="#5b738c" transform="rotate(-6 56.2 13.2)"/><rect x="40.6" y="10.6" width="3.3" height="2.7" fill="#a9967a" transform="rotate(-40 40.6 10.6)"/><rect x="12.8" y="41.6" width="3.1" height="2.5" fill="#a9967a" transform="rotate(38 12.8 41.6)"/><rect x="38.1" y="34.6" width="1.9" height="1.5" fill="#eef1f4" transform="rotate(38 38.1 34.6)"/><rect x="61.5" y="40.8" width="2.9" height="2.3" fill="#a9967a" transform="rotate(-33 61.5 40.8)"/><rect x="38.1" y="28.6" width="1.8" height="1.5" fill="#5b738c" transform="rotate(12 38.1 28.6)"/><rect x="34.7" y="34.8" width="2.1" height="1.6" fill="#b4c2d0" transform="rotate(16 34.7 34.8)"/><rect x="43.3" y="31.8" width="2.5" height="2.0" fill="#7a91a8" transform="rotate(-9 43.3 31.8)"/><rect x="42.1" y="44.3" width="1.6" height="1.3" fill="#d9cdae" transform="rotate(40 42.1 44.3)"/><rect x="35.0" y="39.4" width="3.1" height="2.5" fill="#7a91a8" transform="rotate(-2 35.0 39.4)"/><rect x="39.4" y="38.0" width="3.3" height="2.7" fill="#d9cdae" transform="rotate(-36 39.4 38.0)"/><rect x="48.9" y="47.3" width="2.8" height="2.2" fill="#c8d3de" transform="rotate(-19 48.9 47.3)"/><rect x="21.9" y="11.6" width="2.0" height="1.6" fill="#5b738c" transform="rotate(16 21.9 11.6)"/><rect x="34.3" y="17.8" width="2.3" height="1.9" fill="#5b738c" transform="rotate(24 34.3 17.8)"/><rect x="36.5" y="15.1" width="2.0" height="1.6" fill="#7a91a8" transform="rotate(-15 36.5 15.1)"/><rect x="44.0" y="21.1" width="2.0" height="1.6" fill="#d9cdae" transform="rotate(-31 44.0 21.1)"/><rect x="20.0" y="18.1" width="3.2" height="2.6" fill="#a9967a" transform="rotate(-7 20.0 18.1)"/><rect x="21.3" y="11.5" width="1.9" height="1.5" fill="#b4c2d0" transform="rotate(-36 21.3 11.5)"/><rect x="53.8" y="7.2" width="2" height="1.500" fill="#7a91a8"/><rect x="54.2" y="9.8" width="2" height="1.500" fill="#7a91a8"/><rect x="76.2" y="22.8" width="2" height="1.500" fill="#e9edf1"/><rect x="77.1" y="37.5" width="2" height="1.500" fill="#c8d3de"/><rect x="69.4" y="18.2" width="2" height="1.500" fill="#7a91a8"/><rect x="54.6" y="7.1" width="2" height="1.500" fill="#7a91a8"/><rect x="73.0" y="42.6" width="2" height="1.500" fill="#7a91a8"/><rect x="61.0" y="13.0" width="2" height="1.500" fill="#e9edf1"/><rect x="57.3" y="9.1" width="2" height="1.500" fill="#5b738c"/><rect x="77.8" y="28.5" width="2" height="1.500" fill="#7a91a8"/><rect x="74.2" y="18.2" width="2" height="1.500" fill="#7a91a8"/><rect x="58.8" y="8.3" width="2" height="1.500" fill="#c8d3de"/><rect x="75.4" y="18.8" width="2" height="1.500" fill="#c8d3de"/><rect x="72.4" y="16.8" width="2" height="1.500" fill="#7a91a8"/><path d="M14.500 27l15-7.200 11.200 4.800-13.700 8.400z" fill="#b21f27"/><path d="M14.500 27l12.500 6v2.800l-12.500-6z" fill="#efe9e2"/><path d="M27 33l13.700-8.400v2.800l-13.700 8.400z" fill="#7d1218"/><rect x="20.500" y="24" width="6.500" height="2.200" fill="#2a2a2a" transform="rotate(-20 23 25)"/><path d="M42 30c4-4 12-4 16-1l-2 12c-6 2-12 0-14-4z" fill="#4f6780" opacity=".8"/><path d="M24.500 37l-1 14" stroke="#c9c1b2" stroke-width="1.200"/><path d="M14 45c3 1 6 3 8 7l-3 1c-2-3-4-5-5-8z" fill="#f1e9e6" stroke="#d9a0a0" stroke-width=".5"/><path d="M22 52l3 5" stroke="#c0303a" stroke-width="1.300"/><path d="M17 58h18l-1.500 6h-15z" fill="#a3835f"/><path d="M16 58l9.500-2.400 10.500 2.400z" fill="#c4ab88"/><rect x="55" y="47.500" width="9" height="10" fill="#85966a"/><rect x="54" y="46" width="11" height="2.400" fill="#9bab80"/><rect x="33" y="50" width="5" height="4" fill="#dcc9a2"/><rect x="40" y="51" width="5" height="4" fill="#cbb994"/><rect x="45" y="47" width="4" height="3.500" fill="#d6c49e"/></g></g></svg>
<div class="t" style='left:159.25px;top:98.00px;font-family:"Liberation Sans",sans-serif;font-size:9.1px;line-height:14px;color:#fff;letter-spacing:-0.382px;font-weight:700;'>AVCI TOPLAYICI TOPLUMLAR</div>
<div class="t" style='left:215.50px;top:144.30px;font-family:"Liberation Sans",sans-serif;font-size:9.1px;line-height:14px;color:#fff;letter-spacing:-0.390px;font-weight:700;'>TARIM TOPLUMLARI</div>
<div class="t" style='left:274.80px;top:189.30px;font-family:"Liberation Sans",sans-serif;font-size:9.1px;line-height:14px;color:#fff;letter-spacing:-0.513px;font-weight:700;'>ENDÜSTRİYEL TOPLUMLAR</div>
<div class="t" style='left:329.00px;top:240.50px;font-family:"Liberation Sans",sans-serif;font-size:9.1px;line-height:14px;color:#fff;letter-spacing:-0.590px;font-weight:700;'>BİLGİ TOPLUMU</div>
<div class="t" style='left:4.80px;top:233.70px;font-family:"Liberation Sans",sans-serif;font-size:11.6px;line-height:17px;color:#fff;letter-spacing:-0.125px;'>'İnsanı, diğer hayvanlardan ayıran, emek</div>
<div class="t" style='left:4.80px;top:247.20px;font-family:"Liberation Sans",sans-serif;font-size:11.6px;line-height:17px;color:#fff;letter-spacing:-0.131px;'>bilinciyle üretim yapmasıdır. Bu nedenle</div>
<div class="t" style='left:4.80px;top:260.80px;font-family:"Liberation Sans",sans-serif;font-size:11.6px;line-height:17px;color:#fff;letter-spacing:-0.131px;'>insanların kültürel evrimi üretim ve onun</div>
<div class="t" style='left:4.80px;top:274.30px;font-family:"Liberation Sans",sans-serif;font-size:11.6px;line-height:17px;color:#fff;letter-spacing:-0.095px;'>biçimlerine dayanır.'</div>
<div class="t" style='left:33.20px;top:296.10px;font-family:"Liberation Sans",sans-serif;font-size:11.3px;line-height:17px;color:#e8941c;letter-spacing:-0.597px;'>2</div>
<div class="t" style='left:62.70px;top:303.20px;font-family:"Liberation Sans",sans-serif;font-size:5.8px;line-height:10px;color:#e07c14;letter-spacing:-0.046px;'>Dr. Emine KAÇMAZOĞLU İNÖNÜ ÜNİVERSİTESİ EĞİTİM FAKÜLTESİ</div>
<div class="t" style='left:396.00px;top:303.70px;font-family:"Liberation Sans",sans-serif;font-size:5.6px;line-height:9px;color:#e07c14;transform-origin:0 50%;transform:scaleX(0.8214);'>28.01.2020</div></div></div>
<div class="t" style='left:13.00px;top:533.90px;font-family:"Liberation Sans",sans-serif;font-size:8.6px;line-height:13px;color:#555;letter-spacing:-0.181px;'>3</div>
<div class="a " style="left:22.50px;top:537.30px;width:168.50px;height:93.10px;overflow:hidden;background:#f0f0f0;border-top:1px solid #d0d0d0;border-left:1px solid #d8d8d8">
<svg class="a" style="left:0;top:0" width="169" height="93" viewBox="0 0 169 93"><path d="M169 0v93h-50c22-2 36-14 42-50 3-16 5-30 8-43z" fill="#f6cfc7"/><path d="M161.500 4v42" stroke="#b9b9b9" stroke-width=".8" stroke-dasharray="1 .6"/><path d="M80.500 76v17" stroke="#ddd" stroke-width=".6"/><g fill="none" stroke="#6a6a6a" stroke-width=".8"><path d="M17 92c-3-4-1-7 1-11 3 3 4 7 1 11M18 92c-1-2 0-4 1-5"/><path d="M36 92v-13c4-1 8 1 9 6M40 81v11M38 85c3-1 5 0 5 3s-2 4-5 3"/><path d="M52 84c3-1 5 0 5 1v7c0-1-2-2-5-1zM62 84c-3-1-5 0-5 1v7c0-1 2-2 5-1z"/><path d="M75 81l-3 7h3l-2 5 5-7h-3l2-5z"/><path d="M75 67h11v8h-11zM77 67l1-3 2 2 2-2 1 3M83 67v-8c0-2-3-2-3 0M77 72h7"/><path d="M98 92v-8a2.600 2.600 0 0 1 5 0v8M97 88h7M99 92v2M102 92v2"/><path d="M110 80h8v6h-8zM114 86v2M109 89h10v3h-10z"/><rect x="127.500" y="79" width="10" height="10" rx="1"/><circle cx="132.500" cy="84" r="2.800"/><path d="M127.500 81h10"/></g><g fill="none" stroke="#ee8f80" stroke-width=".8"><circle cx="151" cy="50" r="5"/><circle cx="151" cy="50" r="2.500"/><path d="M146 46l10 8M156 46l-10 8"/><circle cx="142" cy="66" r="3"/><path d="M139.500 69.500h5v2h-5zM140.500 63l-.8-2M143.500 63l.8-2"/></g></svg>
<div class="t" style='left:6.90px;top:7.50px;font-family:"DejaVu Sans Condensed","DejaVu Sans",sans-serif;font-size:5.4px;line-height:9px;color:#222;transform-origin:0 50%;transform:scaleX(0.7107);font-weight:700;'>The Age of Thinking Machines</div>
<div class="t" style='left:6.90px;top:15.20px;font-family:"DejaVu Sans Condensed","DejaVu Sans",sans-serif;font-size:4.7px;line-height:8px;color:#ee8474;transform-origin:0 50%;transform:scaleX(0.7691);'>Human Social Development Index: Today &amp; Future</div></div>
<div class="a " style="left:190.40px;top:538.00px;width:1.00px;height:92.40px;background:#222"></div>
<div class="a" style="left:357px;top:249px;width:454.300px;height:340px;overflow:hidden;background:#000">
<svg class="a" style="left:0;top:0" width="454" height="340" viewBox="0 0 454 340"><rect width="454" height="340" fill="#000"/><defs><filter id="lb" x="-5%" y="-5%" width="110%" height="110%"><feGaussianBlur stdDeviation=".7"/></filter><filter id="lb2" x="-5%" y="-5%" width="110%" height="110%"><feGaussianBlur stdDeviation="1.600"/></filter></defs><g filter="url(#lb2)"><path d="M0.00 -21.00L3.36 -14.70L7.56 -16.80L6.93 -7.56L13.02 -13.02L14.28 -9.66L19.95 -10.50L17.64 -4.20L20.58 -1.68L12.18 4.62L13.86 8.40L2.10 7.14L1.05 19.95L-1.05 19.95L-2.10 7.14L-13.86 8.40L-12.18 4.62L-20.58 -1.68L-17.64 -4.20L-19.95 -10.50L-14.28 -9.66L-13.02 -13.02L-6.93 -7.56L-7.56 -16.80L-3.36 -14.70Z" transform="translate(57.4 39.4) rotate(40)" fill="#4a1602" opacity="1.00" stroke="#4a1602" stroke-width="1.5" stroke-linejoin="round"/><path d="M0.00 -18.00L2.88 -12.60L6.48 -14.40L5.94 -6.48L11.16 -11.16L12.24 -8.28L17.10 -9.00L15.12 -3.60L17.64 -1.44L10.44 3.96L11.88 7.20L1.80 6.12L0.90 17.10L-0.90 17.10L-1.80 6.12L-11.88 7.20L-10.44 3.96L-17.64 -1.44L-15.12 -3.60L-17.10 -9.00L-12.24 -8.28L-11.16 -11.16L-5.94 -6.48L-6.48 -14.40L-2.88 -12.60Z" transform="translate(6.0 141.0) rotate(-37)" fill="#4a1602" opacity="1.00" stroke="#4a1602" stroke-width="1.3" stroke-linejoin="round"/><path d="M0.00 -18.00L2.88 -12.60L6.48 -14.40L5.94 -6.48L11.16 -11.16L12.24 -8.28L17.10 -9.00L15.12 -3.60L17.64 -1.44L10.44 3.96L11.88 7.20L1.80 6.12L0.90 17.10L-0.90 17.10L-1.80 6.12L-11.88 7.20L-10.44 3.96L-17.64 -1.44L-15.12 -3.60L-17.10 -9.00L-12.24 -8.28L-11.16 -11.16L-5.94 -6.48L-6.48 -14.40L-2.88 -12.60Z" transform="translate(10.0 237.0) rotate(60)" fill="#2a0c02" opacity="1.00" stroke="#2a0c02" stroke-width="1.3" stroke-linejoin="round"/><path d="M0.00 -18.00L2.88 -12.60L6.48 -14.40L5.94 -6.48L11.16 -11.16L12.24 -8.28L17.10 -9.00L15.12 -3.60L17.64 -1.44L10.44 3.96L11.88 7.20L1.80 6.12L0.90 17.10L-0.90 17.10L-1.80 6.12L-11.88 7.20L-10.44 3.96L-17.64 -1.44L-15.12 -3.60L-17.10 -9.00L-12.24 -8.28L-11.16 -11.16L-5.94 -6.48L-6.48 -14.40L-2.88 -12.60Z" transform="translate(14.0 268.0) rotate(-35)" fill="#3a1203" opacity="1.00" stroke="#3a1203" stroke-width="1.3" stroke-linejoin="round"/><path d="M0.00 -20.00L3.20 -14.00L7.20 -16.00L6.60 -7.20L12.40 -12.40L13.60 -9.20L19.00 -10.00L16.80 -4.00L19.60 -1.60L11.60 4.40L13.20 8.00L2.00 6.80L1.00 19.00L-1.00 19.00L-2.00 6.80L-13.20 8.00L-11.60 4.40L-19.60 -1.60L-16.80 -4.00L-19.00 -10.00L-13.60 -9.20L-12.40 -12.40L-6.60 -7.20L-7.20 -16.00L-3.20 -14.00Z" transform="translate(423.0 36.0) rotate(70)" fill="#3a1203" opacity="1.00" stroke="#3a1203" stroke-width="1.4" stroke-linejoin="round"/><g transform="translate(370.7 66.0) rotate(80)" opacity="1.00"><path d="M0 -15.00C11.70 -9.00 10.50 7.50 0 12.75C-10.50 7.50 -11.70 -9.00 0 -15.00Z" fill="#3a1203"/><path d="M-1.200 12.00h2.400v7.50h-2.400z" fill="#3a1203"/></g><g transform="translate(373.0 106.0) rotate(100)" opacity="1.00"><path d="M0 -20.00C15.60 -12.00 14.00 10.00 0 17.00C-14.00 10.00 -15.60 -12.00 0 -20.00Z" fill="#2a0c02"/><path d="M-1.200 16.00h2.400v10.00h-2.400z" fill="#2a0c02"/></g><path d="M0.00 -14.00L2.24 -9.80L5.04 -11.20L4.62 -5.04L8.68 -8.68L9.52 -6.44L13.30 -7.00L11.76 -2.80L13.72 -1.12L8.12 3.08L9.24 5.60L1.40 4.76L0.70 13.30L-0.70 13.30L-1.40 4.76L-9.24 5.60L-8.12 3.08L-13.72 -1.12L-11.76 -2.80L-13.30 -7.00L-9.52 -6.44L-8.68 -8.68L-4.62 -5.04L-5.04 -11.20L-2.24 -9.80Z" transform="translate(375.0 138.0) rotate(10)" fill="#3a1203" opacity="1.00" stroke="#3a1203" stroke-width="1.0" stroke-linejoin="round"/><path d="M0.00 -18.00L2.88 -12.60L6.48 -14.40L5.94 -6.48L11.16 -11.16L12.24 -8.28L17.10 -9.00L15.12 -3.60L17.64 -1.44L10.44 3.96L11.88 7.20L1.80 6.12L0.90 17.10L-0.90 17.10L-1.80 6.12L-11.88 7.20L-10.44 3.96L-17.64 -1.44L-15.12 -3.60L-17.10 -9.00L-12.24 -8.28L-11.16 -11.16L-5.94 -6.48L-6.48 -14.40L-2.88 -12.60Z" transform="translate(404.0 232.0) rotate(100)" fill="#3a1203" opacity="1.00" stroke="#3a1203" stroke-width="1.3" stroke-linejoin="round"/><path d="M0.00 -16.00L2.56 -11.20L5.76 -12.80L5.28 -5.76L9.92 -9.92L10.88 -7.36L15.20 -8.00L13.44 -3.20L15.68 -1.28L9.28 3.52L10.56 6.40L1.60 5.44L0.80 15.20L-0.80 15.20L-1.60 5.44L-10.56 6.40L-9.28 3.52L-15.68 -1.28L-13.44 -3.20L-15.20 -8.00L-10.88 -7.36L-9.92 -9.92L-5.28 -5.76L-5.76 -12.80L-2.56 -11.20Z" transform="translate(372.0 322.0) rotate(30)" fill="#3a1203" opacity="1.00" stroke="#3a1203" stroke-width="1.1" stroke-linejoin="round"/><path d="M0.00 -13.00L2.08 -9.10L4.68 -10.40L4.29 -4.68L8.06 -8.06L8.84 -5.98L12.35 -6.50L10.92 -2.60L12.74 -1.04L7.54 2.86L8.58 5.20L1.30 4.42L0.65 12.35L-0.65 12.35L-1.30 4.42L-8.58 5.20L-7.54 2.86L-12.74 -1.04L-10.92 -2.60L-12.35 -6.50L-8.84 -5.98L-8.06 -8.06L-4.29 -4.68L-4.68 -10.40L-2.08 -9.10Z" transform="translate(40.0 302.0) rotate(250)" fill="#3a1203" opacity="1.00" stroke="#3a1203" stroke-width="0.9" stroke-linejoin="round"/></g><g filter="url(#lb)"><path d="M0.00 -37.00L5.92 -25.90L13.32 -29.60L12.21 -13.32L22.94 -22.94L25.16 -17.02L35.15 -18.50L31.08 -7.40L36.26 -2.96L21.46 8.14L24.42 14.80L3.70 12.58L1.85 35.15L-1.85 35.15L-3.70 12.58L-24.42 14.80L-21.46 8.14L-36.26 -2.96L-31.08 -7.40L-35.15 -18.50L-25.16 -17.02L-22.94 -22.94L-12.21 -13.32L-13.32 -29.60L-5.92 -25.90Z" transform="translate(20.0 3.0) rotate(168)" fill="#6e2204" opacity="1.00" stroke="#6e2204" stroke-width="2.6" stroke-linejoin="round"/><path d="M0.00 -25.00L4.00 -17.50L9.00 -20.00L8.25 -9.00L15.50 -15.50L17.00 -11.50L23.75 -12.50L21.00 -5.00L24.50 -2.00L14.50 5.50L16.50 10.00L2.50 8.50L1.25 23.75L-1.25 23.75L-2.50 8.50L-16.50 10.00L-14.50 5.50L-24.50 -2.00L-21.00 -5.00L-23.75 -12.50L-17.00 -11.50L-15.50 -15.50L-8.25 -9.00L-9.00 -20.00L-4.00 -17.50Z" transform="translate(3.0 94.0) rotate(-6)" fill="#7a2a06" opacity="1.00" stroke="#7a2a06" stroke-width="1.8" stroke-linejoin="round"/><path d="M0.00 -29.00L4.64 -20.30L10.44 -23.20L9.57 -10.44L17.98 -17.98L19.72 -13.34L27.55 -14.50L24.36 -5.80L28.42 -2.32L16.82 6.38L19.14 11.60L2.90 9.86L1.45 27.55L-1.45 27.55L-2.90 9.86L-19.14 11.60L-16.82 6.38L-28.42 -2.32L-24.36 -5.80L-27.55 -14.50L-19.72 -13.34L-17.98 -17.98L-9.57 -10.44L-10.44 -23.20L-4.64 -20.30Z" transform="translate(15.0 196.0) rotate(22)" fill="#7a2a06" opacity="1.00" stroke="#7a2a06" stroke-width="2.0" stroke-linejoin="round"/><path d="M0.00 -33.00L5.28 -23.10L11.88 -26.40L10.89 -11.88L20.46 -20.46L22.44 -15.18L31.35 -16.50L27.72 -6.60L32.34 -2.64L19.14 7.26L21.78 13.20L3.30 11.22L1.65 31.35L-1.65 31.35L-3.30 11.22L-21.78 13.20L-19.14 7.26L-32.34 -2.64L-27.72 -6.60L-31.35 -16.50L-22.44 -15.18L-20.46 -20.46L-10.89 -11.88L-11.88 -26.40L-5.28 -23.10Z" transform="translate(6.0 330.0) rotate(18)" fill="#6e2204" opacity="1.00" stroke="#6e2204" stroke-width="2.3" stroke-linejoin="round"/><path d="M0.00 -28.00L4.48 -19.60L10.08 -22.40L9.24 -10.08L17.36 -17.36L19.04 -12.88L26.60 -14.00L23.52 -5.60L27.44 -2.24L16.24 6.16L18.48 11.20L2.80 9.52L1.40 26.60L-1.40 26.60L-2.80 9.52L-18.48 11.20L-16.24 6.16L-27.44 -2.24L-23.52 -5.60L-26.60 -14.00L-19.04 -12.88L-17.36 -17.36L-9.24 -10.08L-10.08 -22.40L-4.48 -19.60Z" transform="translate(437.0 2.0) rotate(176)" fill="#6e2204" opacity="1.00" stroke="#6e2204" stroke-width="2.0" stroke-linejoin="round"/><g transform="translate(401.8 46.0) rotate(27)" opacity="1.00"><path d="M0 -26.00C20.28 -15.60 18.20 13.00 0 22.10C-18.20 13.00 -20.28 -15.60 0 -26.00Z" fill="#7a2a06"/><path d="M-1.200 20.80h2.400v13.00h-2.400z" fill="#7a2a06"/></g><path d="M0.00 -20.00L3.20 -14.00L7.20 -16.00L6.60 -7.20L12.40 -12.40L13.60 -9.20L19.00 -10.00L16.80 -4.00L19.60 -1.60L11.60 4.40L13.20 8.00L2.00 6.80L1.00 19.00L-1.00 19.00L-2.00 6.80L-13.20 8.00L-11.60 4.40L-19.60 -1.60L-16.80 -4.00L-19.00 -10.00L-13.60 -9.20L-12.40 -12.40L-6.60 -7.20L-7.20 -16.00L-3.20 -14.00Z" transform="translate(453.0 82.0) rotate(300)" fill="#4a1602" opacity="1.00" stroke="#4a1602" stroke-width="1.4" stroke-linejoin="round"/><g transform="translate(420.0 122.0) rotate(4)" opacity="1.00"><path d="M0 -6.88C5.50 -24.75 20.62 -26.12 19.25 -9.62C33.00 -8.25 31.62 12.38 15.13 11.00C16.50 27.50 2.75 28.88 0.00 15.13C-2.75 28.88 -16.50 27.50 -15.13 11.00C-31.62 12.38 -33.00 -8.25 -19.25 -9.62C-20.62 -26.12 -5.50 -24.75 0 -6.88Z" fill="#6e2204"/><path d="M0 -5.50C-2.75 -22.00 -12.38 -33.00 -13.75 -48.12" stroke="#6e2204" stroke-width="2.8" fill="none"/></g><path d="M0.00 -24.00L3.84 -16.80L8.64 -19.20L7.92 -8.64L14.88 -14.88L16.32 -11.04L22.80 -12.00L20.16 -4.80L23.52 -1.92L13.92 5.28L15.84 9.60L2.40 8.16L1.20 22.80L-1.20 22.80L-2.40 8.16L-15.84 9.60L-13.92 5.28L-23.52 -1.92L-20.16 -4.80L-22.80 -12.00L-16.32 -11.04L-14.88 -14.88L-7.92 -8.64L-8.64 -19.20L-3.84 -16.80Z" transform="translate(438.0 192.0) rotate(40)" fill="#6e2204" opacity="0.95" stroke="#6e2204" stroke-width="1.7" stroke-linejoin="round"/><path d="M0.00 -26.00L4.16 -18.20L9.36 -20.80L8.58 -9.36L16.12 -16.12L17.68 -11.96L24.70 -13.00L21.84 -5.20L25.48 -2.08L15.08 5.72L17.16 10.40L2.60 8.84L1.30 24.70L-1.30 24.70L-2.60 8.84L-17.16 10.40L-15.08 5.72L-25.48 -2.08L-21.84 -5.20L-24.70 -13.00L-17.68 -11.96L-16.12 -16.12L-8.58 -9.36L-9.36 -20.80L-4.16 -18.20Z" transform="translate(441.0 262.0) rotate(310)" fill="#6e2204" opacity="0.95" stroke="#6e2204" stroke-width="1.8" stroke-linejoin="round"/><path d="M0.00 -22.00L3.52 -15.40L7.92 -17.60L7.26 -7.92L13.64 -13.64L14.96 -10.12L20.90 -11.00L18.48 -4.40L21.56 -1.76L12.76 4.84L14.52 8.80L2.20 7.48L1.10 20.90L-1.10 20.90L-2.20 7.48L-14.52 8.80L-12.76 4.84L-21.56 -1.76L-18.48 -4.40L-20.90 -11.00L-14.96 -10.12L-13.64 -13.64L-7.26 -7.92L-7.92 -17.60L-3.52 -15.40Z" transform="translate(410.0 300.0) rotate(200)" fill="#7a2a06" opacity="0.90" stroke="#7a2a06" stroke-width="1.5" stroke-linejoin="round"/><path d="M0.00 -18.00L2.88 -12.60L6.48 -14.40L5.94 -6.48L11.16 -11.16L12.24 -8.28L17.10 -9.00L15.12 -3.60L17.64 -1.44L10.44 3.96L11.88 7.20L1.80 6.12L0.90 17.10L-0.90 17.10L-1.80 6.12L-11.88 7.20L-10.44 3.96L-17.64 -1.44L-15.12 -3.60L-17.10 -9.00L-12.24 -8.28L-11.16 -11.16L-5.94 -6.48L-6.48 -14.40L-2.88 -12.60Z" transform="translate(447.0 326.0) rotate(110)" fill="#4a1602" opacity="1.00" stroke="#4a1602" stroke-width="1.3" stroke-linejoin="round"/></g></svg>
<div class="t" style='left:89.40px;top:47.30px;font-family:"DejaVu Sans","Liberation Sans",sans-serif;font-size:16.7px;line-height:24px;color:#f3b50c;letter-spacing:-0.165px;font-weight:700;'>İnsanın Sosyokültürel Gelişimi</div>
<svg class="a" style="left:71.25px;top:90.00px;" width="80.00" height="67.00" viewBox="0 0 80 67"><defs><filter id="b1" x="-10%" y="-10%" width="120%" height="120%"><feGaussianBlur stdDeviation=".8"/></filter><filter id="b1s" x="-10%" y="-10%" width="120%" height="120%"><feGaussianBlur stdDeviation=".45"/></filter><clipPath id="c1"><rect width="80" height="67"/></clipPath><linearGradient id="g1w" x1="0" x2="0" y1="0" y2="1"><stop offset="0" stop-color="#8b97a0"/><stop offset=".35" stop-color="#7388b4"/><stop offset="1" stop-color="#5f7cb4"/></linearGradient></defs><g clip-path="url(#c1)"><g filter="url(#b1)"><rect x="-4" y="-4" width="88" height="13" fill="#93b6dd"/><rect x="-4" y="7.500" width="88" height="2" fill="#5f6e58"/><rect x="-4" y="9" width="88" height="20" fill="#808a56"/><rect x="-4" y="16" width="88" height="8" fill="#8b9263"/><rect x="-4" y="26" width="88" height="46" fill="url(#g1w)"/><rect x="52" y="25" width="32" height="10" fill="#a9bce0"/><rect x="60" y="33" width="24" height="8" fill="#7f8a6a" opacity=".8"/><rect x="-4" y="28" width="22" height="14" fill="#7d8668" opacity=".85"/><rect x="24" y="40" width="30" height="10" fill="#8a9aa8" opacity=".6"/><rect x="-4" y="50" width="40" height="20" fill="#5b79b6" opacity=".9"/><rect x="56" y="44" width="28" height="26" fill="#7b8a98" opacity=".7"/><path d="M18.9 45.4L17.2 30.3" stroke="#8a8c6a" stroke-width=".8" opacity=".75"/><path d="M1.6 53.3L0.5 40.1" stroke="#7b8062" stroke-width=".8" opacity=".75"/><path d="M42.9 45.2L42.0 34.1" stroke="#7b8062" stroke-width=".8" opacity=".75"/><path d="M75.4 48.1L76.6 28.6" stroke="#6d7660" stroke-width=".8" opacity=".75"/><path d="M15.5 54.1L13.8 34.8" stroke="#6d7660" stroke-width=".8" opacity=".75"/><path d="M48.5 59.9L47.5 42.8" stroke="#8a8c6a" stroke-width=".8" opacity=".75"/><path d="M22.4 67.0L20.4 48.8" stroke="#6d7660" stroke-width=".8" opacity=".75"/><path d="M23.4 57.1L23.0 43.5" stroke="#8a8c6a" stroke-width=".8" opacity=".75"/><path d="M47.9 48.4L47.0 37.5" stroke="#6d7660" stroke-width=".8" opacity=".75"/><path d="M63.8 46.1L63.9 29.8" stroke="#6d7660" stroke-width=".8" opacity=".75"/><path d="M51.8 54.0L50.1 43.4" stroke="#8a8c6a" stroke-width=".8" opacity=".75"/><path d="M73.1 57.9L72.5 42.0" stroke="#8a8c6a" stroke-width=".8" opacity=".75"/><path d="M59.8 53.1L58.2 35.1" stroke="#6d7660" stroke-width=".8" opacity=".75"/><path d="M4.9 54.8L3.4 33.0" stroke="#8a8c6a" stroke-width=".8" opacity=".75"/><path d="M74.8 42.9L75.6 34.4" stroke="#6d7660" stroke-width=".8" opacity=".75"/><path d="M71.7 67.0L69.7 49.0" stroke="#6d7660" stroke-width=".8" opacity=".75"/><path d="M23.1 67.0L24.6 49.3" stroke="#9aa08a" stroke-width=".8" opacity=".75"/><path d="M69.6 52.4L71.1 43.0" stroke="#8a8c6a" stroke-width=".8" opacity=".75"/><path d="M23.4 52.3L22.7 33.5" stroke="#8a8c6a" stroke-width=".8" opacity=".75"/><path d="M0.8 40.0L2.7 29.0" stroke="#6d7660" stroke-width=".8" opacity=".75"/><path d="M45.7 49.4L44.2 37.7" stroke="#8a8c6a" stroke-width=".8" opacity=".75"/><path d="M5.0 62.9L5.4 44.2" stroke="#8a8c6a" stroke-width=".8" opacity=".75"/><path d="M43.7 54.6L42.2 40.8" stroke="#7b8062" stroke-width=".8" opacity=".75"/><path d="M42.3 60.4L42.3 45.0" stroke="#8a8c6a" stroke-width=".8" opacity=".75"/><path d="M19.3 45.7L19.1 37.0" stroke="#9aa08a" stroke-width=".8" opacity=".75"/><path d="M51.8 49.3L49.9 37.4" stroke="#8a8c6a" stroke-width=".8" opacity=".75"/><path d="M20.4 45.1L20.0 33.3" stroke="#8a8c6a" stroke-width=".8" opacity=".75"/><path d="M20.9 59.2L21.2 35.2" stroke="#6d7660" stroke-width=".8" opacity=".75"/><path d="M79.2 61.1L79.2 36.9" stroke="#7b8062" stroke-width=".8" opacity=".75"/><path d="M7.4 56.4L6.8 32.6" stroke="#8a8c6a" stroke-width=".8" opacity=".75"/><path d="M52.6 65.2L52.7 45.6" stroke="#9aa08a" stroke-width=".8" opacity=".75"/><path d="M52.4 55.9L54.2 43.1" stroke="#9aa08a" stroke-width=".8" opacity=".75"/><path d="M6.0 67.0L4.1 49.4" stroke="#8a8c6a" stroke-width=".8" opacity=".75"/><path d="M71.9 56.2L73.4 30.8" stroke="#7b8062" stroke-width=".8" opacity=".75"/><path d="M55.0 54.7L56.7 38.2" stroke="#9aa08a" stroke-width=".8" opacity=".75"/><path d="M17.5 52.7L17.9 28.1" stroke="#7b8062" stroke-width=".8" opacity=".75"/><path d="M20.6 58.6L22.1 36.7" stroke="#9aa08a" stroke-width=".8" opacity=".75"/><path d="M44.0 59.0L45.3 47.3" stroke="#6d7660" stroke-width=".8" opacity=".75"/><path d="M45.0 67.0L43.1 45.3" stroke="#9aa08a" stroke-width=".8" opacity=".75"/><path d="M2.7 57.9L3.2 41.1" stroke="#6d7660" stroke-width=".8" opacity=".75"/></g><g filter="url(#b1s)"><path d="M30 13.500L72 7" stroke="#b49a78" stroke-width=".9"/><path d="M5 34.500L55 27" stroke="#d2c3a6" stroke-width=".9"/><path d="M38 50v17M47 52l-2 15" stroke="#4a4a40" stroke-width="1.300"/><path d="M44.300 8.500c1.200-1.400 3.600-1.200 4.300.5.500 1.400 0 2.700-.8 3.600l1.700 1.600 3.800-.8 3.400-4.600 1.200.8-3.400 6.200-4.600 1.800.6 7.800-1 3.800 2.800 6.500 2.900 8.200-1.700.7-4.700-8.200-3.200-5.300-2.600 4-2.400 5.200-1.900-.6 1.700-6.500 3.200-5.500-.4-7.700-4.700 3.800-6.300 5.400-1.100-1.200 5.300-6.600 6.200-5.600 3.400-1.900c-.8-1-1-2.500-.3-3.800z" fill="#191817"/></g></g></svg>
<svg class="a" style="left:126.25px;top:128.25px;" width="85.80" height="66.80" viewBox="0 0 86 67"><defs><filter id="b2" x="-10%" y="-10%" width="120%" height="120%"><feGaussianBlur stdDeviation=".8"/></filter><filter id="b2s" x="-10%" y="-10%" width="120%" height="120%"><feGaussianBlur stdDeviation=".5"/></filter><clipPath id="c2"><rect width="86" height="67"/></clipPath><linearGradient id="g2f" x1="0" x2="0" y1="0" y2="1"><stop offset="0" stop-color="#d9c590"/><stop offset=".6" stop-color="#d3be8a"/><stop offset="1" stop-color="#b7a677"/></linearGradient></defs><g clip-path="url(#c2)"><g filter="url(#b2)"><rect x="-4" y="-4" width="94" height="75" fill="url(#g2f)"/><rect x="-4" y="-4" width="94" height="17" fill="#b88f4e"/><rect x="-4" y="9" width="94" height="5" fill="#a98b52"/><rect x="44" y="-4" width="46" height="8" fill="#c9d2c2"/><rect x="60" y="1" width="30" height="6" fill="#71825f"/><rect x="-4" y="52" width="94" height="18" fill="#b9a878" opacity=".8"/><rect x="-4" y="44" width="30" height="24" fill="#c4b080" opacity=".7"/><ellipse cx="45" cy="50" rx="22" ry="3" fill="#6e6048" opacity=".55"/><ellipse cx="17" cy="43" rx="4" ry="2" fill="#3a3228" opacity=".7"/></g><g filter="url(#b2s)"><ellipse cx="12.600" cy="6.800" rx="2" ry="2.400" fill="#f0ece6"/><ellipse cx="12.800" cy="8.800" rx="1.500" ry="1.700" fill="#c9a58c"/><path d="M10.400 11.200c1.400-1 3.600-1 5 0l1.600 5 2.400 3-1 1-2.600-2 .4 6h-6.200z" fill="#ebe7e1"/><path d="M10 24h6.400l1.200 14h-6.200z" fill="#b2848c"/><path d="M12.200 38v4M15.600 38v4" stroke="#4a3a30" stroke-width="1.200"/><ellipse cx="36.600" cy="6.600" rx="2.300" ry="1.800" fill="#ece8e2"/><ellipse cx="36.400" cy="8.800" rx="1.600" ry="1.800" fill="#b88e74"/><path d="M32.400 11.600c1.800-1.200 5-1.200 6.800 0l1.200 8-1.800 6h-6.600l-1.600-7z" fill="#6a7ba2"/><path d="M32 25h6.400l-.4 12-1 11h-2.400l.2-11-2 10h-2.400z" fill="#4d463f"/><path d="M34 24l4 30M36 27l8 28" stroke="#d9c7a2" stroke-width=".9"/><path d="M34.500 23c1-3.400 5.500-4.600 9.500-4.200 3.400.2 6 1.200 7.200 3.400l1.600 8.400-.6 8.800-1.600.4.400 13.200h-2.400l-1.600-12.400-5.800-.4-.8 13.400h-2.400l-.8-14.400c-2.200-2.800-3-6.200-2.800-9.800z" fill="#251917"/><path d="M56 17.400c2.200-2.600 7.600-3 12-1.600 3.400-.4 7.400.4 9.800 2.200l2.600 3.400 1.200 6-1.800 1.800-3.400-3-1.600 6.400.6 9.600h-2.200l-2-8.600-6.400 1.400-.4 9.200h-2.200l-1-9.800c-2.600-1.600-4.200-4.400-4.800-8z" fill="#2a1c19"/><path d="M48.500 25.400l27-4.600" stroke="#d6c096" stroke-width="2"/><path d="M52 30l4 20" stroke="#c9b48c" stroke-width=".8"/></g></g></svg>
<svg class="a" style="left:186.50px;top:178.00px;" width="85.50" height="56.30" viewBox="0 0 86 56"><defs><filter id="b3" x="-10%" y="-10%" width="120%" height="120%"><feGaussianBlur stdDeviation=".55"/></filter><clipPath id="c3"><rect width="86" height="56"/></clipPath></defs><g clip-path="url(#c3)"><g filter="url(#b3)"><rect x="-4" y="-4" width="94" height="64" fill="#1f1a12"/><rect x="-4" y="-4" width="26" height="26" fill="#8f8260"/><rect x="4" y="-4" width="10" height="20" fill="#2a241a"/><rect x="22" y="-4" width="22" height="14" fill="#6b6046"/><rect x="68" y="-4" width="22" height="64" fill="#4a4230"/><circle cx="54.0" cy="38.0" r="14.5" fill="none" stroke="#cbbd96" stroke-width="2.7" stroke-dasharray="2.85 2.85"/><circle cx="54.0" cy="38.0" r="13.3" fill="#cbbd96"/><ellipse cx="61.2" cy="40.2" rx="2.9" ry="3.8" fill="#17130d" transform="rotate(107 61.2 40.2)"/><ellipse cx="54.1" cy="45.5" rx="2.9" ry="3.8" fill="#17130d" transform="rotate(179 54.1 45.5)"/><ellipse cx="46.9" cy="40.4" rx="2.9" ry="3.8" fill="#17130d" transform="rotate(251 46.9 40.4)"/><ellipse cx="49.5" cy="32.0" rx="2.9" ry="3.8" fill="#17130d" transform="rotate(323 49.5 32.0)"/><ellipse cx="58.3" cy="31.8" rx="2.9" ry="3.8" fill="#17130d" transform="rotate(395 58.3 31.8)"/><circle cx="54.0" cy="38.0" r="2.9" fill="none" stroke="#3a3222" stroke-width=".7"/><circle cx="53.5" cy="11.5" r="8.5" fill="none" stroke="#a89a76" stroke-width="2.1" stroke-dasharray="2.43 2.43"/><circle cx="53.5" cy="11.5" r="7.6" fill="#a89a76"/><circle cx="53.5" cy="11.5" r="4.7" fill="#17130d"/><circle cx="53.5" cy="11.5" r="1.9" fill="#a89a76"/><circle cx="80.500" cy="19" r="13" fill="none" stroke="#cbbd96" stroke-width="2.600" stroke-dasharray="2 1.800"/><circle cx="80.500" cy="19" r="10.600" fill="none" stroke="#cbbd96" stroke-width="1.400"/><path d="M80.500 19L90.8 21.1" stroke="#cbbd96" stroke-width="1.300"/><path d="M80.500 19L86.3 27.8" stroke="#cbbd96" stroke-width="1.300"/><path d="M80.500 19L78.4 29.3" stroke="#cbbd96" stroke-width="1.300"/><path d="M80.500 19L71.7 24.8" stroke="#cbbd96" stroke-width="1.300"/><path d="M80.500 19L70.2 16.9" stroke="#cbbd96" stroke-width="1.300"/><path d="M80.500 19L74.7 10.2" stroke="#cbbd96" stroke-width="1.300"/><path d="M80.500 19L82.6 8.7" stroke="#cbbd96" stroke-width="1.300"/><path d="M80.500 19L89.3 13.2" stroke="#cbbd96" stroke-width="1.300"/><circle cx="80.500" cy="19" r="3" fill="#cbbd96"/><path d="M10 24L48 40" stroke="#d6c9a2" stroke-width="4"/><path d="M12 30L44 44" stroke="#3a3222" stroke-width="1.200"/><path d="M24 6c4 0 6 3 5 7l6 6-2 8-8 2-2 10 6 8-4 6h-12l-4-10 4-12z" fill="#a39572"/><path d="M20 16l6 4-2 8-6-2zM16 34l8 2-2 8h-6z" fill="#2a241a"/><path d="M30 2l10 4 2 12-6 2z" fill="#bfb18c"/><path d="M-2 26l10 4v24l-10 2z" fill="#3a3222"/><path d="M70 40l14 4v14h-14z" fill="#8a7d5c"/><circle cx="78" cy="50" r="4.500" fill="none" stroke="#1f1a12" stroke-width="1.500"/><rect x="-4" y="50" width="44" height="10" fill="#2a241a" opacity=".8"/></g></g></svg>
<svg class="a" style="left:249.00px;top:228.00px;" width="75.80" height="70.00" viewBox="0 0 76 70"><defs><filter id="b4" x="-10%" y="-10%" width="120%" height="120%"><feGaussianBlur stdDeviation=".6"/></filter><clipPath id="c4"><rect width="76" height="70"/></clipPath></defs><g clip-path="url(#c4)"><rect width="76" height="70" fill="#fdfdfd"/><g filter="url(#b4)"><path d="M3 30c-2-10 6-17 16-17 4-6 16-8 24-5 8-3 20 0 25 8 6 4 7 14 2 20-2 6-8 9-15 8-3 5-10 7-16 5-4 3-10 3-14 0-10 0-20-7-22-19z" fill="#93a6ba"/><rect x="33.1" y="35.0" width="2.8" height="2.2" fill="#c8d3de" transform="rotate(26 33.1 35.0)"/><rect x="58.4" y="37.5" width="3.2" height="2.6" fill="#7a91a8" transform="rotate(-37 58.4 37.5)"/><rect x="31.7" y="30.7" width="1.8" height="1.4" fill="#b4c2d0" transform="rotate(-35 31.7 30.7)"/><rect x="7.8" y="20.9" width="2.7" height="2.2" fill="#5b738c" transform="rotate(6 7.8 20.9)"/><rect x="11.3" y="41.5" width="1.7" height="1.3" fill="#e9edf1" transform="rotate(-17 11.3 41.5)"/><rect x="43.8" y="33.6" width="2.2" height="1.7" fill="#e9edf1" transform="rotate(-32 43.8 33.6)"/><rect x="26.8" y="25.7" width="1.8" height="1.4" fill="#c8d3de" transform="rotate(5 26.8 25.7)"/><rect x="21.6" y="19.6" width="2.6" height="2.0" fill="#4a6078" transform="rotate(-3 21.6 19.6)"/><rect x="54.4" y="23.7" width="2.0" height="1.6" fill="#e9edf1" transform="rotate(16 54.4 23.7)"/><rect x="38.9" y="44.0" width="2.5" height="2.0" fill="#4a6078" transform="rotate(18 38.9 44.0)"/><rect x="30.1" y="49.2" width="1.8" height="1.5" fill="#b4c2d0" transform="rotate(-27 30.1 49.2)"/><rect x="20.2" y="45.9" width="2.4" height="1.9" fill="#c8d3de" transform="rotate(21 20.2 45.9)"/><rect x="9.9" y="20.4" width="2.2" height="1.7" fill="#4a6078" transform="rotate(8 9.9 20.4)"/><rect x="19.4" y="22.7" width="3.1" height="2.5" fill="#d9cdae" transform="rotate(-2 19.4 22.7)"/><rect x="34.7" y="25.6" width="2.9" height="2.3" fill="#a9967a" transform="rotate(-17 34.7 25.6)"/><rect x="17.9" y="39.8" width="1.6" height="1.3" fill="#a9967a" transform="rotate(-12 17.9 39.8)"/><rect x="20.9" y="20.2" width="2.0" height="1.6" fill="#d9cdae" transform="rotate(-30 20.9 20.2)"/><rect x="38.3" y="41.0" width="3.2" height="2.5" fill="#c8d3de" transform="rotate(-27 38.3 41.0)"/><rect x="25.1" y="34.6" width="1.8" height="1.5" fill="#b4c2d0" transform="rotate(29 25.1 34.6)"/><rect x="34.4" y="41.2" width="2.2" height="1.8" fill="#b4c2d0" transform="rotate(37 34.4 41.2)"/><rect x="45.0" y="35.0" width="2.0" height="1.6" fill="#7a91a8" transform="rotate(-39 45.0 35.0)"/><rect x="44.0" y="22.4" width="2.1" height="1.7" fill="#e9edf1" transform="rotate(-6 44.0 22.4)"/><rect x="21.5" y="39.9" width="3.3" height="2.7" fill="#eef1f4" transform="rotate(36 21.5 39.9)"/><rect x="22.0" y="14.5" width="2.4" height="1.9" fill="#eef1f4" transform="rotate(-9 22.0 14.5)"/><rect x="31.0" y="32.2" width="2.7" height="2.2" fill="#5b738c" transform="rotate(-25 31.0 32.2)"/><rect x="58.7" y="27.8" width="1.8" height="1.4" fill="#5b738c" transform="rotate(-32 58.7 27.8)"/><rect x="16.6" y="23.1" width="3.3" height="2.6" fill="#5b738c" transform="rotate(-34 16.6 23.1)"/><rect x="42.9" y="40.3" width="2.7" height="2.2" fill="#4a6078" transform="rotate(8 42.9 40.3)"/><rect x="28.8" y="29.9" width="2.5" height="2.0" fill="#a9967a" transform="rotate(-2 28.8 29.9)"/><rect x="34.0" y="35.1" width="2.9" height="2.4" fill="#d9cdae" transform="rotate(-2 34.0 35.1)"/><rect x="29.9" y="15.8" width="2.0" height="1.6" fill="#eef1f4" transform="rotate(-11 29.9 15.8)"/><rect x="26.1" y="10.5" width="3.0" height="2.4" fill="#d9cdae" transform="rotate(38 26.1 10.5)"/><rect x="55.9" y="16.2" width="2.1" height="1.7" fill="#4a6078" transform="rotate(33 55.9 16.2)"/><rect x="29.5" y="35.7" width="2.6" height="2.1" fill="#eef1f4" transform="rotate(-14 29.5 35.7)"/><rect x="43.1" y="47.3" width="3.4" height="2.7" fill="#7a91a8" transform="rotate(24 43.1 47.3)"/><rect x="49.8" y="13.1" width="2.0" height="1.6" fill="#eef1f4" transform="rotate(-1 49.8 13.1)"/><rect x="34.0" y="8.3" width="3.0" height="2.4" fill="#a9967a" transform="rotate(-19 34.0 8.3)"/><rect x="26.3" y="9.9" width="2.4" height="1.9" fill="#4a6078" transform="rotate(36 26.3 9.9)"/><rect x="28.9" y="35.4" width="2.0" height="1.6" fill="#7a91a8" transform="rotate(-13 28.9 35.4)"/><rect x="4.5" y="31.3" width="2.7" height="2.2" fill="#5b738c" transform="rotate(-2 4.5 31.3)"/><rect x="21.0" y="13.9" width="1.8" height="1.4" fill="#c8d3de" transform="rotate(33 21.0 13.9)"/><rect x="43.8" y="11.7" width="2.5" height="2.0" fill="#e9edf1" transform="rotate(-5 43.8 11.7)"/><rect x="32.8" y="25.4" width="3.3" height="2.6" fill="#b4c2d0" transform="rotate(-3 32.8 25.4)"/><rect x="37.7" y="24.2" width="1.9" height="1.5" fill="#e9edf1" transform="rotate(-38 37.7 24.2)"/><rect x="19.9" y="21.8" width="2.8" height="2.2" fill="#a9967a" transform="rotate(13 19.9 21.8)"/><rect x="24.0" y="40.8" width="1.8" height="1.5" fill="#5b738c" transform="rotate(24 24.0 40.8)"/><rect x="36.7" y="23.7" width="2.9" height="2.4" fill="#e9edf1" transform="rotate(-5 36.7 23.7)"/><rect x="59.0" y="15.5" width="2.0" height="1.6" fill="#d9cdae" transform="rotate(-23 59.0 15.5)"/><rect x="9.1" y="28.9" width="2.2" height="1.7" fill="#eef1f4" transform="rotate(-6 9.1 28.9)"/><rect x="59.8" y="43.6" width="2.2" height="1.8" fill="#a9967a" transform="rotate(13 59.8 43.6)"/><rect x="47.1" y="16.0" width="3.1" height="2.5" fill="#eef1f4" transform="rotate(-30 47.1 16.0)"/><rect x="51.1" y="40.4" width="3.2" height="2.5" fill="#e9edf1" transform="rotate(9 51.1 40.4)"/><rect x="39.8" y="22.4" width="1.9" height="1.5" fill="#c8d3de" transform="rotate(5 39.8 22.4)"/><rect x="27.5" y="41.6" width="2.6" height="2.1" fill="#c8d3de" transform="rotate(31 27.5 41.6)"/><rect x="49.8" y="31.7" width="1.7" height="1.3" fill="#c8d3de" transform="rotate(1 49.8 31.7)"/><rect x="11.3" y="22.3" width="3.2" height="2.6" fill="#a9967a" transform="rotate(-14 11.3 22.3)"/><rect x="62.8" y="26.4" width="2.0" height="1.6" fill="#d9cdae" transform="rotate(-4 62.8 26.4)"/><rect x="16.6" y="26.2" width="3.3" height="2.6" fill="#eef1f4" transform="rotate(30 16.6 26.2)"/><rect x="52.1" y="25.7" width="2.6" height="2.1" fill="#7a91a8" transform="rotate(27 52.1 25.7)"/><rect x="44.3" y="33.5" width="2.4" height="1.9" fill="#c8d3de" transform="rotate(14 44.3 33.5)"/><rect x="25.9" y="32.6" width="2.1" height="1.7" fill="#c8d3de" transform="rotate(32 25.9 32.6)"/><rect x="53.7" y="43.2" width="2.8" height="2.2" fill="#e9edf1" transform="rotate(-20 53.7 43.2)"/><rect x="52.0" y="39.1" width="2.9" height="2.4" fill="#c8d3de" transform="rotate(-8 52.0 39.1)"/><rect x="4.3" y="30.7" width="3.1" height="2.5" fill="#e9edf1" transform="rotate(17 4.3 30.7)"/><rect x="57.7" y="28.5" width="2.4" height="1.9" fill="#4a6078" transform="rotate(-15 57.7 28.5)"/><rect x="37.4" y="27.1" width="2.6" height="2.1" fill="#a9967a" transform="rotate(16 37.4 27.1)"/><rect x="20.9" y="38.4" width="2.1" height="1.7" fill="#c8d3de" transform="rotate(-31 20.9 38.4)"/><rect x="50.2" y="24.8" width="3.2" height="2.5" fill="#c8d3de" transform="rotate(-19 50.2 24.8)"/><rect x="66.4" y="33.5" width="2.1" height="1.7" fill="#e9edf1" transform="rotate(26 66.4 33.5)"/><rect x="53.7" y="15.5" width="3.3" height="2.6" fill="#b4c2d0" transform="rotate(-28 53.7 15.5)"/><rect x="59.2" y="21.7" width="2.9" height="2.3" fill="#c8d3de" transform="rotate(-18 59.2 21.7)"/><rect x="41.8" y="21.8" width="3.2" height="2.6" fill="#d9cdae" transform="rotate(35 41.8 21.8)"/><rect x="18.2" y="15.2" width="1.8" height="1.4" fill="#7a91a8" transform="rotate(-35 18.2 15.2)"/><rect x="51.8" y="19.1" width="2.2" height="1.8" fill="#eef1f4" transform="rotate(-7 51.8 19.1)"/><rect x="60.0" y="21.0" width="1.7" height="1.3" fill="#7a91a8" transform="rotate(35 60.0 21.0)"/><rect x="52.9" y="27.2" width="1.9" height="1.5" fill="#d9cdae" transform="rotate(10 52.9 27.2)"/><rect x="25.1" y="27.4" width="2.4" height="1.9" fill="#e9edf1" transform="rotate(-18 25.1 27.4)"/><rect x="49.2" y="9.2" width="1.7" height="1.3" fill="#5b738c" transform="rotate(19 49.2 9.2)"/><rect x="26.1" y="26.6" width="2.5" height="2.0" fill="#a9967a" transform="rotate(-31 26.1 26.6)"/><rect x="46.6" y="17.5" width="2.5" height="2.0" fill="#b4c2d0" transform="rotate(38 46.6 17.5)"/><rect x="33.2" y="36.8" width="2.0" height="1.6" fill="#7a91a8" transform="rotate(27 33.2 36.8)"/><rect x="31.0" y="13.6" width="2.3" height="1.9" fill="#4a6078" transform="rotate(39 31.0 13.6)"/><rect x="39.4" y="27.6" width="2.7" height="2.2" fill="#d9cdae" transform="rotate(-6 39.4 27.6)"/><rect x="63.0" y="34.6" width="2.3" height="1.8" fill="#eef1f4" transform="rotate(14 63.0 34.6)"/><rect x="35.1" y="37.8" width="2.1" height="1.7" fill="#a9967a" transform="rotate(-25 35.1 37.8)"/><rect x="37.9" y="29.7" width="2.3" height="1.8" fill="#4a6078" transform="rotate(38 37.9 29.7)"/><rect x="24.0" y="26.4" width="3.3" height="2.7" fill="#d9cdae" transform="rotate(-23 24.0 26.4)"/><rect x="45.2" y="38.9" width="1.8" height="1.4" fill="#d9cdae" transform="rotate(0 45.2 38.9)"/><rect x="44.8" y="42.3" width="1.6" height="1.3" fill="#d9cdae" transform="rotate(25 44.8 42.3)"/><rect x="53.3" y="41.0" width="2.3" height="1.8" fill="#d9cdae" transform="rotate(-16 53.3 41.0)"/><rect x="40.7" y="44.1" width="2.6" height="2.0" fill="#e9edf1" transform="rotate(13 40.7 44.1)"/><rect x="31.3" y="10.0" width="2.3" height="1.8" fill="#4a6078" transform="rotate(18 31.3 10.0)"/><rect x="22.0" y="29.4" width="2.7" height="2.2" fill="#e9edf1" transform="rotate(-36 22.0 29.4)"/><rect x="54.2" y="12.1" width="2.7" height="2.2" fill="#eef1f4" transform="rotate(-29 54.2 12.1)"/><rect x="15.7" y="26.9" width="3.1" height="2.5" fill="#5b738c" transform="rotate(26 15.7 26.9)"/><rect x="10.6" y="19.1" width="2.8" height="2.3" fill="#7a91a8" transform="rotate(-33 10.6 19.1)"/><rect x="63.1" y="33.2" width="3.3" height="2.7" fill="#b4c2d0" transform="rotate(27 63.1 33.2)"/><rect x="14.0" y="23.3" width="2.7" height="2.2" fill="#7a91a8" transform="rotate(-1 14.0 23.3)"/><rect x="67.7" y="29.4" width="2.9" height="2.4" fill="#eef1f4" transform="rotate(32 67.7 29.4)"/><rect x="57.4" y="36.8" width="2.9" height="2.4" fill="#a9967a" transform="rotate(-20 57.4 36.8)"/><rect x="51.7" y="33.3" width="2.9" height="2.3" fill="#7a91a8" transform="rotate(-22 51.7 33.3)"/><rect x="25.4" y="18.3" width="3.1" height="2.5" fill="#c8d3de" transform="rotate(-2 25.4 18.3)"/><rect x="26.3" y="12.6" width="2.7" height="2.2" fill="#7a91a8" transform="rotate(-34 26.3 12.6)"/><rect x="47.0" y="36.4" width="2.9" height="2.4" fill="#d9cdae" transform="rotate(10 47.0 36.4)"/><rect x="52.7" y="39.1" width="2.5" height="2.0" fill="#c8d3de" transform="rotate(15 52.7 39.1)"/><rect x="30.7" y="20.1" width="2.5" height="2.0" fill="#a9967a" transform="rotate(-3 30.7 20.1)"/><rect x="41.6" y="8.2" width="2.6" height="2.1" fill="#d9cdae" transform="rotate(38 41.6 8.2)"/><rect x="40.8" y="28.3" width="2.4" height="1.9" fill="#eef1f4" transform="rotate(37 40.8 28.3)"/><rect x="23.3" y="32.0" width="2.0" height="1.6" fill="#7a91a8" transform="rotate(-34 23.3 32.0)"/><rect x="62.1" y="38.5" width="2.1" height="1.7" fill="#4a6078" transform="rotate(-29 62.1 38.5)"/><rect x="47.7" y="16.3" width="3.2" height="2.6" fill="#4a6078" transform="rotate(-21 47.7 16.3)"/><rect x="55.7" y="20.8" width="1.6" height="1.3" fill="#5b738c" transform="rotate(36 55.7 20.8)"/><rect x="29.8" y="17.9" width="2.9" height="2.3" fill="#b4c2d0" transform="rotate(-12 29.8 17.9)"/><rect x="25.6" y="46.3" width="1.6" height="1.3" fill="#4a6078" transform="rotate(27 25.6 46.3)"/><rect x="61.7" y="42.7" width="2.9" height="2.3" fill="#d9cdae" transform="rotate(-20 61.7 42.7)"/><rect x="55.7" y="33.7" width="3.2" height="2.5" fill="#c8d3de" transform="rotate(-11 55.7 33.7)"/><rect x="23.9" y="33.2" width="1.7" height="1.3" fill="#c8d3de" transform="rotate(-36 23.9 33.2)"/><rect x="24.4" y="15.4" width="1.9" height="1.5" fill="#d9cdae" transform="rotate(-5 24.4 15.4)"/><rect x="26.3" y="45.5" width="3.0" height="2.4" fill="#b4c2d0" transform="rotate(31 26.3 45.5)"/><rect x="47.8" y="14.3" width="3.2" height="2.6" fill="#eef1f4" transform="rotate(4 47.8 14.3)"/><rect x="36.9" y="25.6" width="2.9" height="2.3" fill="#a9967a" transform="rotate(9 36.9 25.6)"/><rect x="58.1" y="43.8" width="2.5" height="2.0" fill="#eef1f4" transform="rotate(-30 58.1 43.8)"/><rect x="20.4" y="30.9" width="2.1" height="1.7" fill="#d9cdae" transform="rotate(-8 20.4 30.9)"/><rect x="39.6" y="42.5" width="2.8" height="2.2" fill="#c8d3de" transform="rotate(-27 39.6 42.5)"/><rect x="45.0" y="36.0" width="3.2" height="2.6" fill="#a9967a" transform="rotate(4 45.0 36.0)"/><rect x="21.2" y="32.2" width="3.0" height="2.4" fill="#b4c2d0" transform="rotate(-29 21.2 32.2)"/><rect x="40.9" y="33.7" width="2.2" height="1.8" fill="#c8d3de" transform="rotate(-14 40.9 33.7)"/><rect x="17.7" y="42.6" width="2.0" height="1.6" fill="#5b738c" transform="rotate(20 17.7 42.6)"/><rect x="20.9" y="35.4" width="2.5" height="2.0" fill="#b4c2d0" transform="rotate(-18 20.9 35.4)"/><rect x="38.3" y="15.2" width="2.6" height="2.1" fill="#4a6078" transform="rotate(-30 38.3 15.2)"/><rect x="12.2" y="28.7" width="3.2" height="2.5" fill="#7a91a8" transform="rotate(-33 12.2 28.7)"/><rect x="53.3" y="21.8" width="2.8" height="2.2" fill="#b4c2d0" transform="rotate(36 53.3 21.8)"/><rect x="56.2" y="13.2" width="1.6" height="1.3" fill="#5b738c" transform="rotate(-6 56.2 13.2)"/><rect x="40.6" y="10.6" width="3.3" height="2.7" fill="#a9967a" transform="rotate(-40 40.6 10.6)"/><rect x="12.8" y="41.6" width="3.1" height="2.5" fill="#a9967a" transform="rotate(38 12.8 41.6)"/><rect x="38.1" y="34.6" width="1.9" height="1.5" fill="#eef1f4" transform="rotate(38 38.1 34.6)"/><rect x="61.5" y="40.8" width="2.9" height="2.3" fill="#a9967a" transform="rotate(-33 61.5 40.8)"/><rect x="38.1" y="28.6" width="1.8" height="1.5" fill="#5b738c" transform="rotate(12 38.1 28.6)"/><rect x="34.7" y="34.8" width="2.1" height="1.6" fill="#b4c2d0" transform="rotate(16 34.7 34.8)"/><rect x="43.3" y="31.8" width="2.5" height="2.0" fill="#7a91a8" transform="rotate(-9 43.3 31.8)"/><rect x="42.1" y="44.3" width="1.6" height="1.3" fill="#d9cdae" transform="rotate(40 42.1 44.3)"/><rect x="35.0" y="39.4" width="3.1" height="2.5" fill="#7a91a8" transform="rotate(-2 35.0 39.4)"/><rect x="39.4" y="38.0" width="3.3" height="2.7" fill="#d9cdae" transform="rotate(-36 39.4 38.0)"/><rect x="48.9" y="47.3" width="2.8" height="2.2" fill="#c8d3de" transform="rotate(-19 48.9 47.3)"/><rect x="21.9" y="11.6" width="2.0" height="1.6" fill="#5b738c" transform="rotate(16 21.9 11.6)"/><rect x="34.3" y="17.8" width="2.3" height="1.9" fill="#5b738c" transform="rotate(24 34.3 17.8)"/><rect x="36.5" y="15.1" width="2.0" height="1.6" fill="#7a91a8" transform="rotate(-15 36.5 15.1)"/><rect x="44.0" y="21.1" width="2.0" height="1.6" fill="#d9cdae" transform="rotate(-31 44.0 21.1)"/><rect x="20.0" y="18.1" width="3.2" height="2.6" fill="#a9967a" transform="rotate(-7 20.0 18.1)"/><rect x="21.3" y="11.5" width="1.9" height="1.5" fill="#b4c2d0" transform="rotate(-36 21.3 11.5)"/><rect x="53.8" y="7.2" width="2" height="1.500" fill="#7a91a8"/><rect x="54.2" y="9.8" width="2" height="1.500" fill="#7a91a8"/><rect x="76.2" y="22.8" width="2" height="1.500" fill="#e9edf1"/><rect x="77.1" y="37.5" width="2" height="1.500" fill="#c8d3de"/><rect x="69.4" y="18.2" width="2" height="1.500" fill="#7a91a8"/><rect x="54.6" y="7.1" width="2" height="1.500" fill="#7a91a8"/><rect x="73.0" y="42.6" width="2" height="1.500" fill="#7a91a8"/><rect x="61.0" y="13.0" width="2" height="1.500" fill="#e9edf1"/><rect x="57.3" y="9.1" width="2" height="1.500" fill="#5b738c"/><rect x="77.8" y="28.5" width="2" height="1.500" fill="#7a91a8"/><rect x="74.2" y="18.2" width="2" height="1.500" fill="#7a91a8"/><rect x="58.8" y="8.3" width="2" height="1.500" fill="#c8d3de"/><rect x="75.4" y="18.8" width="2" height="1.500" fill="#c8d3de"/><rect x="72.4" y="16.8" width="2" height="1.500" fill="#7a91a8"/><path d="M14.500 27l15-7.200 11.200 4.800-13.700 8.400z" fill="#b21f27"/><path d="M14.500 27l12.500 6v2.800l-12.500-6z" fill="#efe9e2"/><path d="M27 33l13.700-8.400v2.800l-13.700 8.400z" fill="#7d1218"/><rect x="20.500" y="24" width="6.500" height="2.200" fill="#2a2a2a" transform="rotate(-20 23 25)"/><path d="M42 30c4-4 12-4 16-1l-2 12c-6 2-12 0-14-4z" fill="#4f6780" opacity=".8"/><path d="M24.500 37l-1 14" stroke="#c9c1b2" stroke-width="1.200"/><path d="M14 45c3 1 6 3 8 7l-3 1c-2-3-4-5-5-8z" fill="#f1e9e6" stroke="#d9a0a0" stroke-width=".5"/><path d="M22 52l3 5" stroke="#c0303a" stroke-width="1.300"/><path d="M17 58h18l-1.500 6h-15z" fill="#a3835f"/><path d="M16 58l9.500-2.400 10.500 2.400z" fill="#c4ab88"/><rect x="55" y="47.500" width="9" height="10" fill="#85966a"/><rect x="54" y="46" width="11" height="2.400" fill="#9bab80"/><rect x="33" y="50" width="5" height="4" fill="#dcc9a2"/><rect x="40" y="51" width="5" height="4" fill="#cbb994"/><rect x="45" y="47" width="4" height="3.500" fill="#d6c49e"/></g></g></svg>
<div class="t" style='left:159.25px;top:98.00px;font-family:"Liberation Sans",sans-serif;font-size:9.1px;line-height:14px;color:#fff;letter-spacing:-0.382px;font-weight:700;'>AVCI TOPLAYICI TOPLUMLAR</div>
<div class="t" style='left:215.50px;top:144.30px;font-family:"Liberation Sans",sans-serif;font-size:9.1px;line-height:14px;color:#fff;letter-spacing:-0.390px;font-weight:700;'>TARIM TOPLUMLARI</div>
<div class="t" style='left:274.80px;top:189.30px;font-family:"Liberation Sans",sans-serif;font-size:9.1px;line-height:14px;color:#fff;letter-spacing:-0.513px;font-weight:700;'>ENDÜSTRİYEL TOPLUMLAR</div>
<div class="t" style='left:329.00px;top:240.50px;font-family:"Liberation Sans",sans-serif;font-size:9.1px;line-height:14px;color:#fff;letter-spacing:-0.590px;font-weight:700;'>BİLGİ TOPLUMU</div>
<div class="t" style='left:4.80px;top:233.70px;font-family:"Liberation Sans",sans-serif;font-size:11.6px;line-height:17px;color:#fff;letter-spacing:-0.125px;'>'İnsanı, diğer hayvanlardan ayıran, emek</div>
<div class="t" style='left:4.80px;top:247.20px;font-family:"Liberation Sans",sans-serif;font-size:11.6px;line-height:17px;color:#fff;letter-spacing:-0.131px;'>bilinciyle üretim yapmasıdır. Bu nedenle</div>
<div class="t" style='left:4.80px;top:260.80px;font-family:"Liberation Sans",sans-serif;font-size:11.6px;line-height:17px;color:#fff;letter-spacing:-0.131px;'>insanların kültürel evrimi üretim ve onun</div>
<div class="t" style='left:4.80px;top:274.30px;font-family:"Liberation Sans",sans-serif;font-size:11.6px;line-height:17px;color:#fff;letter-spacing:-0.095px;'>biçimlerine dayanır.'</div>
<div class="t" style='left:33.20px;top:296.10px;font-family:"Liberation Sans",sans-serif;font-size:11.3px;line-height:17px;color:#e8941c;letter-spacing:-0.597px;'>2</div>
<div class="t" style='left:62.70px;top:303.20px;font-family:"Liberation Sans",sans-serif;font-size:5.8px;line-height:10px;color:#e07c14;letter-spacing:-0.046px;'>Dr. Emine KAÇMAZOĞLU İNÖNÜ ÜNİVERSİTESİ EĞİTİM FAKÜLTESİ</div>
<div class="t" style='left:396.00px;top:303.70px;font-family:"Liberation Sans",sans-serif;font-size:5.6px;line-height:9px;color:#e07c14;transform-origin:0 50%;transform:scaleX(0.8214);'>28.01.2020</div></div>
<svg class="a" style="left:380.50px;top:554.50px;" width="25.50" height="28.50" viewBox="0 0 25.50 28.50"><path d="M1 .8v15.200l3.600-3.400 2.600 6 2.400-1-2.600-5.800h4.800z" fill="#fff" stroke="#222" stroke-width="1" stroke-linejoin="round"/><rect x="11.500" y="13" width="9" height="7" fill="#cfd6de" stroke="#555" stroke-width=".9"/><rect x="13" y="14.400" width="6" height="4" fill="#8aa0b8"/><circle cx="19" cy="20.600" r="2.400" fill="#e8c48a" stroke="#8a6a2a" stroke-width=".6"/><path d="M14.600 27.500c.2-3 1.800-4.400 4.400-4.400s4.200 1.400 4.400 4.400z" fill="#e2a63c" stroke="#8a6a2a" stroke-width=".6"/></svg>
<div class="a " style="left:946.40px;top:243.70px;width:9.60px;height:316.30px;background:#dedede"></div>
<div class="a " style="left:946.40px;top:243.70px;width:9.60px;height:10.10px;background:#fff;border:1px solid #c9c9c9"></div>
<svg class="a" style="left:948.40px;top:247.15px;" width="5.60" height="3.20" viewBox="0 0 5.60 3.20"><path d="M0 3l2.800-3 2.800 3z" fill="#777"/></svg>
<div class="a " style="left:946.40px;top:260.50px;width:9.60px;height:12.50px;background:#fff;border:1px solid #c9c9c9"></div>
<div class="a " style="left:946.40px;top:549.70px;width:9.60px;height:9.50px;background:#fff;border:1px solid #c9c9c9"></div>
<svg class="a" style="left:948.40px;top:553.05px;" width="5.60" height="3.20" viewBox="0 0 5.60 3.20"><path d="M0 0h5.600l-2.800 3z" fill="#777"/></svg>
<svg class="a" style="left:948.20px;top:563.50px;" width="6.00" height="6.00" viewBox="0 0 6.00 6.00"><path d="M0 3l3-3 3 3zM0 6l3-3 3 3z" fill="#666"/></svg>
<svg class="a" style="left:948.20px;top:575.50px;" width="6.00" height="6.00" viewBox="0 0 6.00 6.00"><path d="M0 0h6l-3 3zM0 3h6l-3 3z" fill="#666"/></svg>
<div class="a " style="left:222.00px;top:598.40px;width:735.20px;height:0.90px;background:#d2d2d2"></div>
<div class="a " style="left:946.40px;top:602.00px;width:9.60px;height:10.40px;background:#fff;border:1px solid #c9c9c9"></div>
<svg class="a" style="left:948.40px;top:605.60px;" width="5.60" height="3.20" viewBox="0 0 5.60 3.20"><path d="M0 3l2.800-3 2.800 3z" fill="#777"/></svg>
<div class="a " style="left:946.40px;top:612.40px;width:9.60px;height:6.30px;background:#d4d4d4"></div>
<div class="a " style="left:946.40px;top:618.70px;width:9.60px;height:9.70px;background:#fff;border:1px solid #c9c9c9"></div>
<svg class="a" style="left:948.40px;top:622.15px;" width="5.60" height="3.20" viewBox="0 0 5.60 3.20"><path d="M0 0h5.600l-2.800 3z" fill="#777"/></svg>
<div class="t" style='left:229.00px;top:602.70px;font-family:"Liberation Sans",sans-serif;font-size:10.2px;line-height:15px;color:#555;letter-spacing:0.036px;'>İnsan türü, oluştuğu günden bugüne biyolojik evriminin yanı sıra kültürel olarak da evrim geçirmiştir. İnsan</div>
<div class="t" style='left:229.00px;top:615.90px;font-family:"Liberation Sans",sans-serif;font-size:10.2px;line-height:15px;color:#555;letter-spacing:0.038px;'>uğramış, bunlar da toplum yapısını değiştirmiştir.</div>
<div class="a " style="left:4.00px;top:630.40px;width:953.20px;height:14.80px;background:#f0f0f0;border-top:1px solid #d0d0d0"></div>
<div class="t" style='left:9.00px;top:632.20px;font-family:"Liberation Sans",sans-serif;font-size:8px;line-height:12px;color:#5e5e5e;letter-spacing:-0.166px;'>Slayt 2 / 74</div>
<svg class="a" style="left:61.00px;top:633.50px;" width="11.00" height="9.50" viewBox="0 0 11.00 9.50"><rect x=".5" y=".6" width="4.200" height="7.600" fill="none" stroke="#666" stroke-width=".8"/><path d="M4.700 .6h5.200M4.700 8.200h1.200" stroke="#666" stroke-width=".8"/><path d="M6.400 2.800l3.400 3.600M9.800 2.800l-3.400 3.600" stroke="#666" stroke-width=".8"/></svg>
<svg class="a" style="left:600.40px;top:633.80px;" width="8.60" height="9.20" viewBox="0 0 8.60 9.20"><path d="M4 .2l2 2.600h-4z" fill="#666"/><path d="M.2 4h7.600M.2 6h7.600M.2 8h5.600" stroke="#666" stroke-width=".9"/></svg>
<div class="t" style='left:611.80px;top:632.20px;font-family:"Liberation Sans",sans-serif;font-size:8px;line-height:12px;color:#5e5e5e;letter-spacing:0.111px;'>Notlar</div>
<svg class="a" style="left:648.60px;top:634.00px;" width="8.90" height="9.00" viewBox="0 0 8.90 9.00"><path d="M.4 .4h8v5.400h-4.600l-2 2v-2h-1.400z" fill="#666"/></svg>
<div class="t" style='left:660.00px;top:632.20px;font-family:"Liberation Sans",sans-serif;font-size:8px;line-height:12px;color:#5e5e5e;letter-spacing:-0.210px;'>Açıklamalar</div>
<div class="a " style="left:714.20px;top:631.40px;width:25.60px;height:13.80px;background:#c9c9c9"></div>
<svg class="a" style="left:722.00px;top:633.80px;" width="10.50" height="9.20" viewBox="0 0 10.50 9.20"><rect x=".5" y=".5" width="9.400" height="7.800" fill="none" stroke="#6a6a6a" stroke-width=".9"/><path d="M3 .5v7.800" stroke="#6a6a6a" stroke-width=".9"/><rect x="4.400" y="2" width="4" height="2.600" fill="none" stroke="#6a6a6a" stroke-width=".8"/></svg>
<svg class="a" style="left:748.40px;top:633.80px;" width="10.10" height="9.20" viewBox="0 0 10.10 9.20"><rect x=".5" y=".5" width="3.400" height="3" fill="none" stroke="#6a6a6a" stroke-width=".8"/><rect x="5.600" y=".5" width="3.400" height="3" fill="none" stroke="#6a6a6a" stroke-width=".8"/><rect x=".5" y="5.200" width="3.400" height="3" fill="none" stroke="#6a6a6a" stroke-width=".8"/><rect x="5.600" y="5.200" width="3.400" height="3" fill="none" stroke="#6a6a6a" stroke-width=".8"/></svg>
<svg class="a" style="left:775.00px;top:633.50px;" width="10.00" height="9.50" viewBox="0 0 10.00 9.50"><path d="M.5 1c1.600-.6 3-.4 4 .4v7c-1-.8-2.400-1-4-.4zM8.500 1c-1.600-.6-3-.4-4 .4v7c1-.8 2.400-1 4-.4z" fill="none" stroke="#6a6a6a" stroke-width=".8"/><path d="M1.600 3h1.800M1.600 5h1.800M5.600 3h1.800M5.600 5h1.800" stroke="#6a6a6a" stroke-width=".7"/></svg>
<svg class="a" style="left:801.00px;top:633.50px;" width="10.50" height="10.00" viewBox="0 0 10.50 10.00"><path d="M0 .6h9.600M.8 .6v5h8v-5" fill="none" stroke="#6a6a6a" stroke-width=".9"/><path d="M4.800 5.600v2.600M2.600 8.800h4.400" stroke="#6a6a6a" stroke-width=".9"/><rect x="1.600" y="1.400" width="6.400" height="2" fill="#6a6a6a" opacity=".5"/></svg>
<div class="a " style="left:822.80px;top:637.50px;width:4.20px;height:1.10px;background:#555"></div>
<div class="a " style="left:830.00px;top:637.70px;width:70.00px;height:0.80px;background:#a9a9a9"></div>
<div class="a " style="left:865.20px;top:636.20px;width:0.80px;height:3.80px;background:#a9a9a9"></div>
<div class="a " style="left:852.00px;top:634.00px;width:2.40px;height:8.20px;background:#5a5a5a"></div>
<svg class="a" style="left:903.00px;top:635.50px;" width="5.50" height="5.50" viewBox="0 0 5.50 5.50"><path d="M2.700 .2v5M.2 2.700h5" stroke="#555" stroke-width="1.100"/></svg>
<div class="t" style='left:918.30px;top:632.20px;font-family:"Liberation Sans",sans-serif;font-size:7.6px;line-height:12px;color:#777;letter-spacing:-0.102px;'>%68</div>
<svg class="a" style="left:943.20px;top:633.50px;" width="9.30" height="9.30" viewBox="0 0 9.30 9.30"><rect x=".5" y=".5" width="8" height="8" fill="none" stroke="#6a6a6a" stroke-width=".9"/><path d="M2 3.400v-1.400h1.400M7 3.400v-1.400h-1.400M2 5.600v1.400h1.400M7 5.600v1.400h-1.400" stroke="#6a6a6a" stroke-width=".8" fill="none"/><path d="M4.500 .5v8M.5 4.500h8" stroke="#6a6a6a" stroke-width=".5" opacity=".6"/></svg>
<svg class="a" style="left:4.00px;top:645.20px;" width="953.20" height="6.00" viewBox="0 0 953.20 6.00"><defs><pattern id="dm" width="4.57" height="6" patternUnits="userSpaceOnUse"><rect width="4.57" height="6" fill="#fff"/><path d="M0 0L4.57 6M4.57 0L0 6" stroke="#2a35a8" stroke-width=".9" fill="none"/></pattern></defs><rect width="953.200" height="6" fill="url(#dm)"/></svg>
<div class="a " style="left:4.00px;top:651.20px;width:953.20px;height:20.40px;background:#3f5263"></div></div>
<div class="a " style="left:692.00px;top:401.00px;width:244.20px;height:223.40px;background:#fff"></div>
</div>
</body>
</html>
